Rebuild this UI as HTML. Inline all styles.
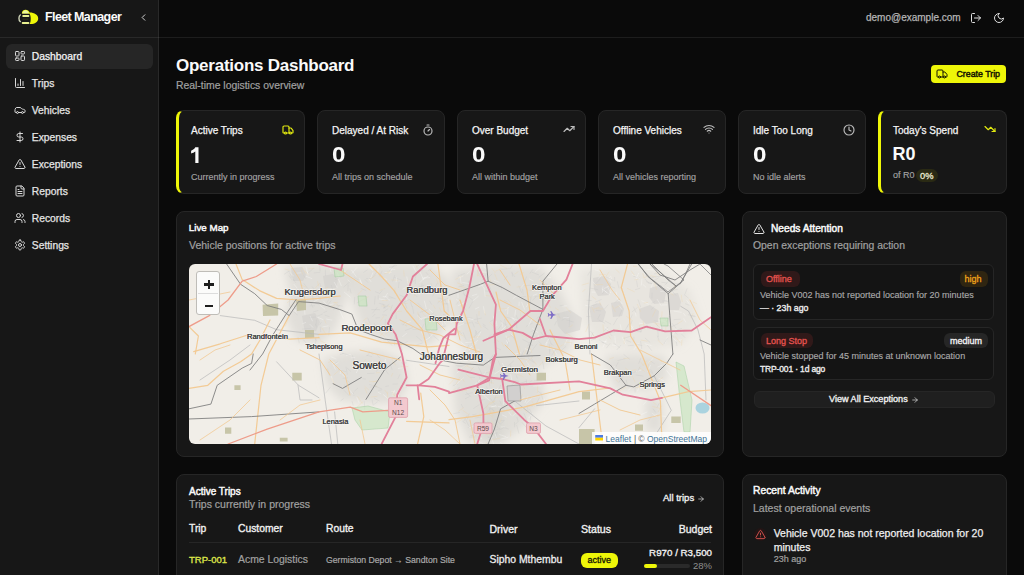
<!DOCTYPE html>
<html><head><meta charset="utf-8">
<style>
*{box-sizing:border-box;margin:0;padding:0}
html,body{width:1024px;height:575px;overflow:hidden;background:#0a0a0a;font-family:"Liberation Sans",sans-serif;color:#fafafa}
.a{position:absolute;white-space:nowrap;line-height:20px}
svg.i{position:absolute;fill:none;stroke:currentColor;stroke-width:2;stroke-linecap:round;stroke-linejoin:round}
#side{position:absolute;left:0;top:0;width:159px;height:575px;background:#171717;border-right:1px solid rgba(255,255,255,0.08)}
.hline{position:absolute;left:0;top:37px;width:1024px;height:1px;background:rgba(255,255,255,0.08)}
.nav{position:absolute;left:31.8px;font-size:10.3px;color:#e5e5e5;line-height:20px;-webkit-text-stroke:0.25px currentColor}
.navi{position:absolute;left:13.8px;width:12px;height:12px;color:#d9d9d9;stroke-width:2.5}
.card{position:absolute;background:#171717;border:1px solid #262626;border-radius:8px}
.ct{position:absolute;font-size:10px;color:#f5f5f5;line-height:20px;white-space:nowrap;-webkit-text-stroke:0.25px currentColor}
.cn{position:absolute;font-size:21px;font-weight:700;color:#fafafa;line-height:30px}
.cs{position:absolute;font-size:9px;color:#a3a3a3;line-height:20px;white-space:nowrap;-webkit-text-stroke:0.15px currentColor}
.ci{width:11px;height:11px;color:#bdbdbd}
.muted{color:#a1a1a1}
.m{-webkit-text-stroke:0.25px currentColor}
</style></head>
<body>
<!-- SIDEBAR -->
<div id="side"></div>
<div class="hline"></div>
<svg style="position:absolute;left:16px;top:8px" width="24" height="18" viewBox="16 8 24 18">
  <path d="M21.8 13.6 C22 10.8 23.6 9.8 25.6 9.8 C27.6 9.8 28.8 10.8 29.6 12.6 C34.5 12.6 38.2 15 38.2 18.4 C38.2 21.8 35 24 30.5 24 L29.6 24 C31.2 22 31.2 15 29.2 13.6 Z" fill="#eef608"/>
  <path d="M22.2 13.4 C22.8 11.2 24 10.3 25.6 10.3 C27.2 10.3 28.3 11.2 29 13.4 Z" fill="#eef8a0"/>
  <rect x="22.3" y="15" width="7" height="2" rx="0.7" fill="#e8f090"/>
  <rect x="21.8" y="21.9" width="7.5" height="2" rx="0.7" fill="#e8f090"/>
  <rect x="22.5" y="18.6" width="6" height="1" fill="#3a3a20"/>
  <path d="M20.3 15 C18.6 16.2 18.4 20.4 20.3 21.6" stroke="#cfd4b8" stroke-width="1.4" fill="none" stroke-linecap="round"/>
</svg>
<div class="a" style="left:45px;top:7px;font-size:12.5px;font-weight:700;letter-spacing:-0.6px;color:#fafafa">Fleet Manager</div>
<svg class="i" style="left:137.5px;top:11.5px;color:#e0e0e0" width="11" height="11" viewBox="0 0 24 24" stroke-width="3"><path d="m15 18-6-6 6-6"/></svg>

<div style="position:absolute;left:6px;top:44px;width:147px;height:25px;background:#262626;border-radius:6px"></div>
<svg class="i navi" style="top:50px" viewBox="0 0 24 24"><rect width="7" height="9" x="3" y="3" rx="1.5"/><rect width="7" height="5" x="14" y="3" rx="1.5"/><rect width="7" height="9" x="14" y="12" rx="1.5"/><rect width="7" height="5" x="3" y="16" rx="1.5"/></svg>
<div class="nav" style="top:47px;color:#f5f5f5">Dashboard</div>
<svg class="i navi" style="top:77px" viewBox="0 0 24 24"><path d="M3 3v16a2 2 0 0 0 2 2h16"/><path d="M18 17V9"/><path d="M13 17V5"/><path d="M8 17v-3"/></svg>
<div class="nav" style="top:74px">Trips</div>
<svg class="i navi" style="top:104px" viewBox="0 0 24 24"><path d="M19 17h2c.6 0 1-.4 1-1v-3c0-.9-.7-1.7-1.5-1.9C18.7 10.6 16 10 16 10s-1.3-1.4-2.2-2.3c-.5-.4-1.1-.7-1.8-.7H5c-.6 0-1.1.4-1.4.9l-1.4 2.9A3.7 3.7 0 0 0 2 12v4c0 .6.4 1 1 1h2"/><circle cx="7" cy="17" r="2"/><path d="M9 17h6"/><circle cx="17" cy="17" r="2"/></svg>
<div class="nav" style="top:101px">Vehicles</div>
<svg class="i navi" style="top:131px" viewBox="0 0 24 24"><line x1="12" x2="12" y1="2" y2="22"/><path d="M17 5H9.5a3.5 3.5 0 0 0 0 7h5a3.5 3.5 0 0 1 0 7H6"/></svg>
<div class="nav" style="top:128px">Expenses</div>
<svg class="i navi" style="top:158px" viewBox="0 0 24 24"><path d="m21.73 18-8-14a2 2 0 0 0-3.48 0l-8 14A2 2 0 0 0 4 21h16a2 2 0 0 0 1.73-3"/><path d="M12 9v4"/><path d="M12 17h.01"/></svg>
<div class="nav" style="top:155px">Exceptions</div>
<svg class="i navi" style="top:185px" viewBox="0 0 24 24"><path d="M15 2H6a2 2 0 0 0-2 2v16a2 2 0 0 0 2 2h12a2 2 0 0 0 2-2V7Z"/><path d="M14 2v4a2 2 0 0 0 2 2h4"/><path d="M10 9H8"/><path d="M16 13H8"/><path d="M16 17H8"/></svg>
<div class="nav" style="top:182px">Reports</div>
<svg class="i navi" style="top:212px" viewBox="0 0 24 24"><path d="M16 21v-2a4 4 0 0 0-4-4H6a4 4 0 0 0-4 4v2"/><circle cx="9" cy="7" r="4"/><path d="M22 21v-2a4 4 0 0 0-3-3.87"/><path d="M16 3.13a4 4 0 0 1 0 7.75"/></svg>
<div class="nav" style="top:209px">Records</div>
<svg class="i navi" style="top:239px" viewBox="0 0 24 24"><path d="M12.22 2h-.44a2 2 0 0 0-2 2v.18a2 2 0 0 1-1 1.730l-.43.25a2 2 0 0 1-2 0l-.15-.08a2 2 0 0 0-2.73.73l-.22.38a2 2 0 0 0 .73 2.73l.15.1a2 2 0 0 1 1 1.72v.51a2 2 0 0 1-1 1.74l-.15.09a2 2 0 0 0-.73 2.73l.22.38a2 2 0 0 0 2.730.73l.15-.08a2 2 0 0 1 2 0l.43.25a2 2 0 0 1 1 1.73V20a2 2 0 0 0 2 2h.44a2 2 0 0 0 2-2v-.18a2 2 0 0 1 1-1.73l.43-.25a2 2 0 0 1 2 0l.15.08a2 2 0 0 0 2.73-.73l.22-.39a2 2 0 0 0-.73-2.73l-.15-.08a2 2 0 0 1-1-1.74v-.5a2 2 0 0 1 1-1.74l.15-.09a2 2 0 0 0 .73-2.73l-.22-.38a2 2 0 0 0-2.73-.73l-.15.08a2 2 0 0 1-2 0l-.43-.25a2 2 0 0 1-1-1.73V4a2 2 0 0 0-2-2z"/><circle cx="12" cy="12" r="3"/></svg>
<div class="nav" style="top:236px">Settings</div>

<!-- HEADER RIGHT -->
<div class="a m" style="left:866px;top:8px;font-size:10px;color:#b5b5b5">demo@example.com</div>
<svg class="i" style="left:969.5px;top:11.5px;color:#e0e0e0" width="12" height="12" viewBox="0 0 24 24" stroke-width="2.9"><path d="M9 21H5a2 2 0 0 1-2-2V5a2 2 0 0 1 2-2h4"/><polyline points="16 17 21 12 16 7"/><line x1="21" x2="9" y1="12" y2="12"/></svg>
<svg class="i" style="left:992.5px;top:11.5px;color:#e0e0e0" width="12" height="12" viewBox="0 0 24 24" stroke-width="2.9"><path d="M12 3a6 6 0 0 0 9 9 9 9 0 1 1-9-9Z"/></svg>

<!-- TITLE -->
<div class="a" style="left:176px;top:56px;font-size:17px;font-weight:700;letter-spacing:-0.25px;color:#fafafa">Operations Dashboard</div>
<div class="a" style="left:176px;top:76px;font-size:10.4px;color:#a1a1a1;-webkit-text-stroke:0.2px #a1a1a1">Real-time logistics overview</div>
<div style="position:absolute;left:931px;top:65px;width:75px;height:18px;background:#eef608;border-radius:4px"></div>
<svg class="i" style="left:935.5px;top:67.5px;color:#141400" width="12" height="12" viewBox="0 0 24 24" stroke-width="2.7"><path d="M14 18V6a2 2 0 0 0-2-2H4a2 2 0 0 0-2 2v11a1 1 0 0 0 1 1h2"/><path d="M15 18H9"/><path d="M19 18h2a1 1 0 0 0 1-1v-3.65a1 1 0 0 0-.22-.624l-3.48-4.35A1 1 0 0 0 17.520 8H14"/><circle cx="17" cy="18" r="2"/><circle cx="7" cy="18" r="2"/></svg>
<div class="a" style="left:956.5px;top:64px;font-size:8.8px;color:#141400;-webkit-text-stroke:0.45px #141400">Create Trip</div>

<!-- STAT CARDS -->
<div class="card" style="left:176px;top:110px;width:129px;height:84px;border-left:3px solid #eef608;"></div>
<div class="ct" style="left:191px;top:120.9px">Active Trips</div>
<svg class="i ci" style="left:281.5px;top:123.5px;width:12px;height:12px;color:#e2ea10;stroke-width:2.3" viewBox="0 0 24 24"><path d="M14 18V6a2 2 0 0 0-2-2H4a2 2 0 0 0-2 2v11a1 1 0 0 0 1 1h2"/><path d="M15 18H9"/><path d="M19 18h2a1 1 0 0 0 1-1v-3.65a1 1 0 0 0-.22-.624l-3.48-4.35A1 1 0 0 0 17.52 8H14"/><circle cx="17" cy="18" r="2"/><circle cx="7" cy="18" r="2"/></svg>
<svg style="position:absolute;left:189px;top:145px" width="12" height="20" viewBox="189 145 12 20"><path d="M195.3 147.3 h3.2 v15.6 h-3.2 v-11.3 c-1.1 0.9 -2.4 1.5 -4.2 1.9 v-2.8 c1.9 -0.6 3.3 -1.7 4.2 -3.4 z" fill="#fafafa"/></svg>
<div class="cs" style="left:191px;top:166.7px">Currently in progress</div>
<div class="card" style="left:317px;top:110px;width:128px;height:84px;"></div>
<div class="ct" style="left:332px;top:120.9px">Delayed / At Risk</div>
<svg class="i ci" style="left:421.5px;top:123.5px;width:12px;height:12px;color:#bdbdbd;stroke-width:2.3" viewBox="0 0 24 24"><line x1="10" x2="14" y1="2" y2="2"/><line x1="12" x2="15" y1="14" y2="11"/><circle cx="12" cy="14" r="8"/></svg>
<div class="cn" style="left:331.7px;top:140.3px;font-size:22px;transform:scaleX(1.1);transform-origin:0 0">0</div>
<div class="cs" style="left:332px;top:166.7px">All trips on schedule</div>
<div class="card" style="left:457px;top:110px;width:129px;height:84px;"></div>
<div class="ct" style="left:472px;top:120.9px">Over Budget</div>
<svg class="i ci" style="left:562.5px;top:122.5px;width:12px;height:12px;color:#bdbdbd;stroke-width:2.3" viewBox="0 0 24 24"><polyline points="22 7 13.5 15.5 8.5 10.5 2 17"/><polyline points="16 7 22 7 22 13"/></svg>
<div class="cn" style="left:471.7px;top:140.3px;font-size:22px;transform:scaleX(1.1);transform-origin:0 0">0</div>
<div class="cs" style="left:472px;top:166.7px">All within budget</div>
<div class="card" style="left:598px;top:110px;width:128px;height:84px;"></div>
<div class="ct" style="left:613px;top:120.9px">Offline Vehicles</div>
<svg class="i ci" style="left:702.5px;top:122.5px;width:12px;height:12px;color:#bdbdbd;stroke-width:2.3" viewBox="0 0 24 24"><path d="M12 20h.01"/><path d="M2 8.82a15 15 0 0 1 20 0"/><path d="M5 12.859a10 10 0 0 1 14 0"/><path d="M8.5 16.429a5 5 0 0 1 7 0"/></svg>
<div class="cn" style="left:612.7px;top:140.3px;font-size:22px;transform:scaleX(1.1);transform-origin:0 0">0</div>
<div class="cs" style="left:613px;top:166.7px">All vehicles reporting</div>
<div class="card" style="left:738px;top:110px;width:128px;height:84px;"></div>
<div class="ct" style="left:753px;top:120.9px">Idle Too Long</div>
<svg class="i ci" style="left:842.5px;top:123.5px;width:12px;height:12px;color:#bdbdbd;stroke-width:2.3" viewBox="0 0 24 24"><circle cx="12" cy="12" r="10"/><polyline points="12 6 12 12 16 14"/></svg>
<div class="cn" style="left:752.7px;top:140.3px;font-size:22px;transform:scaleX(1.1);transform-origin:0 0">0</div>
<div class="cs" style="left:753px;top:166.7px">No idle alerts</div>
<div class="card" style="left:878px;top:110px;width:129px;height:84px;border-left:3px solid #eef608;"></div>
<div class="ct" style="left:893px;top:120.9px">Today&#39;s Spend</div>
<svg class="i ci" style="left:983.5px;top:123.0px;width:12px;height:12px;color:#e2ea10;stroke-width:2.3" viewBox="0 0 24 24"><polyline points="22 17 13.5 8.5 8.5 13.5 2 7"/><polyline points="16 17 22 17 22 11"/></svg>
<div class="cn" style="left:892.5px;top:138.6px;font-size:18px">R0</div>
<div class="cs" style="left:893px;top:164.7px">of R0</div>
<div style="position:absolute;left:916px;top:169px;width:22px;height:13px;border-radius:7px;background:#2a2a14"></div>
<div class="cs" style="left:920px;top:165.5px;color:#ecebd0;-webkit-text-stroke:0.3px #ecebd0;font-size:9.3px">0%</div>
<!-- MAIN CARDS -->
<div class="card" style="left:176px;top:211px;width:548px;height:246px"></div>
<div class="a" style="left:188.8px;top:218px;font-size:9.8px;color:#fafafa;-webkit-text-stroke:0.45px #fafafa">Live Map</div>
<div class="a" style="left:189px;top:234.5px;font-size:10.5px;color:#a1a1a1;-webkit-text-stroke:0.2px #a1a1a1">Vehicle positions for active trips</div>
<div style="position:absolute;left:189px;top:264px;width:522px;height:180px;border-radius:6px;overflow:hidden"><svg width="522" height="180" viewBox="189 264 522 180" style="position:absolute;left:0;top:0;font-family:'Liberation Sans',sans-serif"><rect x="189" y="264" width="522" height="180" fill="#f1eee8"/><defs><filter id="bl" x="-20%" y="-20%" width="140%" height="140%"><feGaussianBlur stdDeviation="4"/></filter></defs><g filter="url(#bl)"><polygon points="284.0,266.0 300.0,264.0 345.0,264.0 352.0,285.0 344.0,305.0 335.0,330.0 318.0,345.0 296.0,340.0 286.0,318.0 290.0,295.0" fill="#d6d3cf" opacity="0.6"/><polygon points="322.0,360.0 345.0,352.0 380.0,350.0 404.0,360.0 408.0,385.0 398.0,402.0 370.0,404.0 340.0,400.0 326.0,385.0" fill="#d6d3cf" opacity="0.6"/><polygon points="345.0,268.0 380.0,264.0 430.0,264.0 449.0,280.0 452.0,320.0 430.0,345.0 395.0,345.0 362.0,330.0 352.0,300.0" fill="#d6d3cf" opacity="0.6"/><polygon points="452.0,270.0 500.0,264.0 540.0,266.0 560.0,290.0 575.0,320.0 570.0,350.0 540.0,368.0 500.0,372.0 470.0,360.0 455.0,330.0" fill="#d6d3cf" opacity="0.6"/><polygon points="580.0,270.0 620.0,264.0 660.0,270.0 690.0,290.0 700.0,320.0 680.0,345.0 640.0,350.0 600.0,345.0 583.0,320.0" fill="#d6d3cf" opacity="0.35"/><polygon points="452.0,360.0 500.0,368.0 540.0,372.0 545.0,400.0 520.0,430.0 500.0,444.0 470.0,444.0 455.0,410.0" fill="#d6d3cf" opacity="0.6"/><polygon points="604.0,356.0 630.0,354.0 665.0,356.0 668.0,378.0 650.0,390.0 615.0,390.0" fill="#d6d3cf" opacity="0.6"/><polygon points="645.0,398.0 662.0,398.0 663.0,432.0 646.0,432.0" fill="#d6d3cf" opacity="0.6"/><polygon points="484.0,400.0 503.0,400.0 503.0,444.0 484.0,444.0" fill="#d6d3cf" opacity="0.6"/></g><polygon points="593.0,278.0 604.0,276.0 611.0,284.0 609.0,295.0 598.0,296.0 594.0,289.0" fill="#cfcdcc" opacity="0.5"/><polygon points="650.0,288.0 661.0,285.0 666.0,293.0 664.0,303.0 654.0,304.0 649.0,297.0" fill="#cfcdcc" opacity="0.5"/><polygon points="639.0,309.0 650.0,305.0 659.0,311.0 658.0,322.0 646.0,324.0 640.0,318.0" fill="#cfcdcc" opacity="0.5"/><polygon points="611.0,303.0 620.0,301.0 624.0,309.0 622.0,316.0 613.0,317.0" fill="#cfcdcc" opacity="0.5"/><polygon points="589.0,306.0 600.0,303.0 606.0,312.0 603.0,322.0 592.0,322.0" fill="#cfcdcc" opacity="0.5"/><polygon points="669.0,294.0 678.0,293.0 681.0,302.0 679.0,310.0 670.0,310.0" fill="#cfcdcc" opacity="0.5"/><polygon points="323.0,276.0 333.0,274.0 338.0,280.0 336.0,288.0 325.0,288.0" fill="#cfcdcc" opacity="0.5"/><polygon points="291.0,268.0 302.0,267.0 306.0,275.0 303.0,281.0 293.0,281.0" fill="#cfcdcc" opacity="0.5"/><polygon points="302.0,316.0 315.0,313.0 320.0,322.0 316.0,331.0 305.0,332.0" fill="#cfcdcc" opacity="0.5"/><polygon points="556.0,314.0 570.0,310.0 582.0,318.0 580.0,330.0 565.0,334.0 558.0,326.0" fill="#cfcdcc" opacity="0.5"/><polyline points="306.0,276.2 311.8,278.6" stroke="#ffffff" stroke-width="0.5" fill="none" stroke-linecap="round" stroke-linejoin="round" opacity="0.55"/><polyline points="308.9,268.7 314.4,268.4" stroke="#f0d2a0" stroke-width="0.5" fill="none" stroke-linecap="round" stroke-linejoin="round" opacity="0.55"/><polyline points="288.8,271.3 284.4,274.1" stroke="#c4c4c4" stroke-width="0.5" fill="none" stroke-linecap="round" stroke-linejoin="round" opacity="0.55"/><polyline points="326.9,311.2 323.8,312.5" stroke="#c4c4c4" stroke-width="0.5" fill="none" stroke-linecap="round" stroke-linejoin="round" opacity="0.55"/><polyline points="303.7,275.7 305.8,278.6" stroke="#c4c4c4" stroke-width="0.5" fill="none" stroke-linecap="round" stroke-linejoin="round" opacity="0.55"/><polyline points="291.0,310.3 294.8,311.2" stroke="#ffffff" stroke-width="0.5" fill="none" stroke-linecap="round" stroke-linejoin="round" opacity="0.55"/><polyline points="322.4,314.1 317.3,316.2" stroke="#c4c4c4" stroke-width="0.5" fill="none" stroke-linecap="round" stroke-linejoin="round" opacity="0.55"/><polyline points="315.7,338.8 315.6,343.6" stroke="#c4c4c4" stroke-width="0.5" fill="none" stroke-linecap="round" stroke-linejoin="round" opacity="0.55"/><polyline points="289.6,288.3 292.3,293.0" stroke="#c4c4c4" stroke-width="0.5" fill="none" stroke-linecap="round" stroke-linejoin="round" opacity="0.55"/><polyline points="325.4,269.9 325.5,275.5" stroke="#c4c4c4" stroke-width="0.5" fill="none" stroke-linecap="round" stroke-linejoin="round" opacity="0.55"/><polyline points="321.9,327.9 325.7,333.9" stroke="#f0d2a0" stroke-width="0.5" fill="none" stroke-linecap="round" stroke-linejoin="round" opacity="0.55"/><polyline points="323.4,301.0 328.0,306.5" stroke="#ffffff" stroke-width="0.5" fill="none" stroke-linecap="round" stroke-linejoin="round" opacity="0.55"/><polyline points="288.1,320.8 285.1,326.3" stroke="#f0d2a0" stroke-width="0.5" fill="none" stroke-linecap="round" stroke-linejoin="round" opacity="0.55"/><polyline points="344.3,292.1 350.2,297.1" stroke="#ffffff" stroke-width="0.5" fill="none" stroke-linecap="round" stroke-linejoin="round" opacity="0.55"/><polyline points="317.6,281.7 318.6,286.0" stroke="#f0d2a0" stroke-width="0.5" fill="none" stroke-linecap="round" stroke-linejoin="round" opacity="0.55"/><polyline points="289.5,300.4 289.4,306.1" stroke="#c4c4c4" stroke-width="0.5" fill="none" stroke-linecap="round" stroke-linejoin="round" opacity="0.55"/><polyline points="330.4,294.8 334.6,294.8" stroke="#c4c4c4" stroke-width="0.5" fill="none" stroke-linecap="round" stroke-linejoin="round" opacity="0.55"/><polyline points="328.8,265.0 331.0,271.8" stroke="#ffffff" stroke-width="0.5" fill="none" stroke-linecap="round" stroke-linejoin="round" opacity="0.55"/><polyline points="293.9,307.3 296.3,312.9" stroke="#ffffff" stroke-width="0.5" fill="none" stroke-linecap="round" stroke-linejoin="round" opacity="0.55"/><polyline points="315.1,334.5 307.9,337.6" stroke="#f0d2a0" stroke-width="0.5" fill="none" stroke-linecap="round" stroke-linejoin="round" opacity="0.55"/><polyline points="310.8,303.0 312.9,307.5" stroke="#c4c4c4" stroke-width="0.5" fill="none" stroke-linecap="round" stroke-linejoin="round" opacity="0.55"/><polyline points="314.0,272.9 319.9,272.3" stroke="#c4c4c4" stroke-width="0.5" fill="none" stroke-linecap="round" stroke-linejoin="round" opacity="0.55"/><polyline points="320.5,340.9 326.0,343.4" stroke="#f0d2a0" stroke-width="0.5" fill="none" stroke-linecap="round" stroke-linejoin="round" opacity="0.55"/><polyline points="294.1,284.4 297.1,288.1" stroke="#ffffff" stroke-width="0.5" fill="none" stroke-linecap="round" stroke-linejoin="round" opacity="0.55"/><polyline points="315.7,303.2 318.9,304.4" stroke="#c4c4c4" stroke-width="0.5" fill="none" stroke-linecap="round" stroke-linejoin="round" opacity="0.55"/><polyline points="316.5,320.1 316.0,325.6" stroke="#c4c4c4" stroke-width="0.5" fill="none" stroke-linecap="round" stroke-linejoin="round" opacity="0.55"/><polyline points="294.0,308.0 291.2,309.4" stroke="#ffffff" stroke-width="0.5" fill="none" stroke-linecap="round" stroke-linejoin="round" opacity="0.55"/><polyline points="331.3,285.2 332.6,289.8" stroke="#c4c4c4" stroke-width="0.5" fill="none" stroke-linecap="round" stroke-linejoin="round" opacity="0.55"/><polyline points="320.2,327.1 320.7,331.7" stroke="#c4c4c4" stroke-width="0.5" fill="none" stroke-linecap="round" stroke-linejoin="round" opacity="0.55"/><polyline points="334.3,282.4 337.1,287.2" stroke="#ffffff" stroke-width="0.5" fill="none" stroke-linecap="round" stroke-linejoin="round" opacity="0.55"/><polyline points="337.7,302.3 333.8,302.5" stroke="#f0d2a0" stroke-width="0.5" fill="none" stroke-linecap="round" stroke-linejoin="round" opacity="0.55"/><polyline points="289.5,272.3 293.5,275.8" stroke="#ffffff" stroke-width="0.5" fill="none" stroke-linecap="round" stroke-linejoin="round" opacity="0.55"/><polyline points="316.6,316.9 323.0,319.6" stroke="#ffffff" stroke-width="0.5" fill="none" stroke-linecap="round" stroke-linejoin="round" opacity="0.55"/><polyline points="335.0,302.7 338.1,305.1" stroke="#f0d2a0" stroke-width="0.5" fill="none" stroke-linecap="round" stroke-linejoin="round" opacity="0.55"/><polyline points="315.5,324.2 316.7,327.4" stroke="#c4c4c4" stroke-width="0.5" fill="none" stroke-linecap="round" stroke-linejoin="round" opacity="0.55"/><polyline points="315.6,317.1 309.6,317.4" stroke="#c4c4c4" stroke-width="0.5" fill="none" stroke-linecap="round" stroke-linejoin="round" opacity="0.55"/><polyline points="294.6,308.4 297.6,309.1" stroke="#c4c4c4" stroke-width="0.5" fill="none" stroke-linecap="round" stroke-linejoin="round" opacity="0.55"/><polyline points="313.5,334.6 316.6,341.0" stroke="#c4c4c4" stroke-width="0.5" fill="none" stroke-linecap="round" stroke-linejoin="round" opacity="0.55"/><polyline points="303.9,283.5 307.5,288.2" stroke="#c4c4c4" stroke-width="0.5" fill="none" stroke-linecap="round" stroke-linejoin="round" opacity="0.55"/><polyline points="339.4,305.9 333.4,309.7" stroke="#c4c4c4" stroke-width="0.5" fill="none" stroke-linecap="round" stroke-linejoin="round" opacity="0.55"/><polyline points="319.6,265.5 320.1,270.7" stroke="#c4c4c4" stroke-width="0.5" fill="none" stroke-linecap="round" stroke-linejoin="round" opacity="0.55"/><polyline points="295.7,302.4 290.3,306.1" stroke="#f0d2a0" stroke-width="0.5" fill="none" stroke-linecap="round" stroke-linejoin="round" opacity="0.55"/><polyline points="337.3,272.6 339.4,278.0" stroke="#ffffff" stroke-width="0.5" fill="none" stroke-linecap="round" stroke-linejoin="round" opacity="0.55"/><polyline points="336.5,305.1 342.2,306.1" stroke="#c4c4c4" stroke-width="0.5" fill="none" stroke-linecap="round" stroke-linejoin="round" opacity="0.55"/><polyline points="331.1,300.6 327.7,305.2" stroke="#c4c4c4" stroke-width="0.5" fill="none" stroke-linecap="round" stroke-linejoin="round" opacity="0.55"/><polyline points="348.1,285.0 347.9,290.8" stroke="#c4c4c4" stroke-width="0.5" fill="none" stroke-linecap="round" stroke-linejoin="round" opacity="0.55"/><polyline points="312.3,295.8 313.3,300.3" stroke="#c4c4c4" stroke-width="0.5" fill="none" stroke-linecap="round" stroke-linejoin="round" opacity="0.55"/><polyline points="329.5,327.5 328.8,335.0" stroke="#c4c4c4" stroke-width="0.5" fill="none" stroke-linecap="round" stroke-linejoin="round" opacity="0.55"/><polyline points="349.8,281.8 343.9,286.9" stroke="#c4c4c4" stroke-width="0.5" fill="none" stroke-linecap="round" stroke-linejoin="round" opacity="0.55"/><polyline points="295.0,299.0 298.6,303.2" stroke="#c4c4c4" stroke-width="0.5" fill="none" stroke-linecap="round" stroke-linejoin="round" opacity="0.55"/><polyline points="305.7,322.5 302.8,323.6" stroke="#ffffff" stroke-width="0.5" fill="none" stroke-linecap="round" stroke-linejoin="round" opacity="0.55"/><polyline points="310.1,305.9 314.6,305.8" stroke="#c4c4c4" stroke-width="0.5" fill="none" stroke-linecap="round" stroke-linejoin="round" opacity="0.55"/><polyline points="302.1,267.2 305.5,273.2" stroke="#f0d2a0" stroke-width="0.5" fill="none" stroke-linecap="round" stroke-linejoin="round" opacity="0.55"/><polyline points="320.5,305.7 324.8,309.0" stroke="#ffffff" stroke-width="0.5" fill="none" stroke-linecap="round" stroke-linejoin="round" opacity="0.55"/><polyline points="338.4,278.9 341.3,285.7" stroke="#ffffff" stroke-width="0.5" fill="none" stroke-linecap="round" stroke-linejoin="round" opacity="0.55"/><polyline points="338.5,270.8 345.8,271.2" stroke="#ffffff" stroke-width="0.5" fill="none" stroke-linecap="round" stroke-linejoin="round" opacity="0.55"/><polyline points="314.9,291.5 318.1,296.2" stroke="#ffffff" stroke-width="0.5" fill="none" stroke-linecap="round" stroke-linejoin="round" opacity="0.55"/><polyline points="319.8,283.3 320.9,286.7" stroke="#c4c4c4" stroke-width="0.5" fill="none" stroke-linecap="round" stroke-linejoin="round" opacity="0.55"/><polyline points="297.7,289.3 299.0,293.6" stroke="#c4c4c4" stroke-width="0.5" fill="none" stroke-linecap="round" stroke-linejoin="round" opacity="0.55"/><polyline points="302.4,329.1 310.3,328.4" stroke="#c4c4c4" stroke-width="0.5" fill="none" stroke-linecap="round" stroke-linejoin="round" opacity="0.55"/><polyline points="319.0,283.9 315.5,287.8" stroke="#f0d2a0" stroke-width="0.5" fill="none" stroke-linecap="round" stroke-linejoin="round" opacity="0.55"/><polyline points="350.0,288.9 351.0,292.9" stroke="#c4c4c4" stroke-width="0.5" fill="none" stroke-linecap="round" stroke-linejoin="round" opacity="0.55"/><polyline points="311.5,292.2 313.0,295.1" stroke="#c4c4c4" stroke-width="0.5" fill="none" stroke-linecap="round" stroke-linejoin="round" opacity="0.55"/><polyline points="313.3,268.5 308.5,272.7" stroke="#c4c4c4" stroke-width="0.5" fill="none" stroke-linecap="round" stroke-linejoin="round" opacity="0.55"/><polyline points="324.7,320.1 325.9,323.1" stroke="#f0d2a0" stroke-width="0.5" fill="none" stroke-linecap="round" stroke-linejoin="round" opacity="0.55"/><polyline points="306.0,266.8 307.9,274.0" stroke="#ffffff" stroke-width="0.5" fill="none" stroke-linecap="round" stroke-linejoin="round" opacity="0.55"/><polyline points="306.8,270.8 308.2,275.0" stroke="#ffffff" stroke-width="0.5" fill="none" stroke-linecap="round" stroke-linejoin="round" opacity="0.55"/><polyline points="293.8,311.5 297.3,315.0" stroke="#c4c4c4" stroke-width="0.5" fill="none" stroke-linecap="round" stroke-linejoin="round" opacity="0.55"/><polyline points="342.0,276.6 335.2,279.5" stroke="#c4c4c4" stroke-width="0.5" fill="none" stroke-linecap="round" stroke-linejoin="round" opacity="0.55"/><polyline points="333.0,304.0 328.7,305.1" stroke="#ffffff" stroke-width="0.5" fill="none" stroke-linecap="round" stroke-linejoin="round" opacity="0.55"/><polyline points="318.9,298.8 313.4,302.2" stroke="#ffffff" stroke-width="0.5" fill="none" stroke-linecap="round" stroke-linejoin="round" opacity="0.55"/><polyline points="340.2,311.3 343.2,318.1" stroke="#ffffff" stroke-width="0.5" fill="none" stroke-linecap="round" stroke-linejoin="round" opacity="0.55"/><polyline points="293.1,293.2 290.9,296.0" stroke="#ffffff" stroke-width="0.5" fill="none" stroke-linecap="round" stroke-linejoin="round" opacity="0.55"/><polyline points="326.6,319.1 331.9,320.1" stroke="#ffffff" stroke-width="0.5" fill="none" stroke-linecap="round" stroke-linejoin="round" opacity="0.55"/><polyline points="334.9,304.7 330.2,308.0" stroke="#f0d2a0" stroke-width="0.5" fill="none" stroke-linecap="round" stroke-linejoin="round" opacity="0.55"/><polyline points="301.1,270.0 302.6,274.1" stroke="#f0d2a0" stroke-width="0.5" fill="none" stroke-linecap="round" stroke-linejoin="round" opacity="0.55"/><polyline points="317.6,295.0 320.2,299.7" stroke="#c4c4c4" stroke-width="0.5" fill="none" stroke-linecap="round" stroke-linejoin="round" opacity="0.55"/><polyline points="289.3,275.9 291.7,279.5" stroke="#c4c4c4" stroke-width="0.5" fill="none" stroke-linecap="round" stroke-linejoin="round" opacity="0.55"/><polyline points="284.8,268.9 289.0,270.3" stroke="#f0d2a0" stroke-width="0.5" fill="none" stroke-linecap="round" stroke-linejoin="round" opacity="0.55"/><polyline points="303.8,305.8 300.0,309.6" stroke="#c4c4c4" stroke-width="0.5" fill="none" stroke-linecap="round" stroke-linejoin="round" opacity="0.55"/><polyline points="305.2,271.0 308.6,275.1" stroke="#f0d2a0" stroke-width="0.5" fill="none" stroke-linecap="round" stroke-linejoin="round" opacity="0.55"/><polyline points="289.1,271.3 291.7,277.5" stroke="#c4c4c4" stroke-width="0.5" fill="none" stroke-linecap="round" stroke-linejoin="round" opacity="0.55"/><polyline points="325.0,315.2 329.2,316.6" stroke="#c4c4c4" stroke-width="0.5" fill="none" stroke-linecap="round" stroke-linejoin="round" opacity="0.55"/><polyline points="317.9,335.0 320.1,339.4" stroke="#f0d2a0" stroke-width="0.5" fill="none" stroke-linecap="round" stroke-linejoin="round" opacity="0.55"/><polyline points="330.3,296.8 327.0,302.5" stroke="#c4c4c4" stroke-width="0.5" fill="none" stroke-linecap="round" stroke-linejoin="round" opacity="0.55"/><polyline points="292.2,290.8 294.3,295.0" stroke="#ffffff" stroke-width="0.5" fill="none" stroke-linecap="round" stroke-linejoin="round" opacity="0.55"/><polyline points="347.9,279.9 350.1,281.9" stroke="#ffffff" stroke-width="0.5" fill="none" stroke-linecap="round" stroke-linejoin="round" opacity="0.55"/><polyline points="324.1,293.2 326.3,297.8" stroke="#c4c4c4" stroke-width="0.5" fill="none" stroke-linecap="round" stroke-linejoin="round" opacity="0.55"/><polyline points="303.4,339.8 306.2,343.0" stroke="#c4c4c4" stroke-width="0.5" fill="none" stroke-linecap="round" stroke-linejoin="round" opacity="0.55"/><polyline points="296.9,294.2 304.1,297.2" stroke="#f0d2a0" stroke-width="0.5" fill="none" stroke-linecap="round" stroke-linejoin="round" opacity="0.55"/><polyline points="321.3,322.3 319.5,325.0" stroke="#c4c4c4" stroke-width="0.5" fill="none" stroke-linecap="round" stroke-linejoin="round" opacity="0.55"/><polyline points="327.8,287.2 325.1,288.9" stroke="#f0d2a0" stroke-width="0.5" fill="none" stroke-linecap="round" stroke-linejoin="round" opacity="0.55"/><polyline points="312.2,286.8 315.1,290.0" stroke="#c4c4c4" stroke-width="0.5" fill="none" stroke-linecap="round" stroke-linejoin="round" opacity="0.55"/><polyline points="304.5,309.1 304.9,314.1" stroke="#ffffff" stroke-width="0.5" fill="none" stroke-linecap="round" stroke-linejoin="round" opacity="0.55"/><polyline points="298.1,337.4 299.2,342.8" stroke="#c4c4c4" stroke-width="0.5" fill="none" stroke-linecap="round" stroke-linejoin="round" opacity="0.55"/><polyline points="293.5,279.6 295.5,282.4" stroke="#c4c4c4" stroke-width="0.5" fill="none" stroke-linecap="round" stroke-linejoin="round" opacity="0.55"/><polyline points="300.3,284.9 305.8,286.9" stroke="#f0d2a0" stroke-width="0.5" fill="none" stroke-linecap="round" stroke-linejoin="round" opacity="0.55"/><polyline points="310.0,324.4 312.8,327.3" stroke="#ffffff" stroke-width="0.5" fill="none" stroke-linecap="round" stroke-linejoin="round" opacity="0.55"/><polyline points="317.9,310.5 313.3,312.0" stroke="#c4c4c4" stroke-width="0.5" fill="none" stroke-linecap="round" stroke-linejoin="round" opacity="0.55"/><polyline points="310.2,316.3 312.4,320.9" stroke="#ffffff" stroke-width="0.5" fill="none" stroke-linecap="round" stroke-linejoin="round" opacity="0.55"/><polyline points="292.7,298.4 287.3,302.6" stroke="#f0d2a0" stroke-width="0.5" fill="none" stroke-linecap="round" stroke-linejoin="round" opacity="0.55"/><polyline points="300.9,272.8 297.1,273.1" stroke="#ffffff" stroke-width="0.5" fill="none" stroke-linecap="round" stroke-linejoin="round" opacity="0.55"/><polyline points="328.0,325.9 322.8,326.9" stroke="#ffffff" stroke-width="0.5" fill="none" stroke-linecap="round" stroke-linejoin="round" opacity="0.55"/><polyline points="389.3,362.6 392.2,369.6" stroke="#c4c4c4" stroke-width="0.5" fill="none" stroke-linecap="round" stroke-linejoin="round" opacity="0.55"/><polyline points="367.4,373.6 374.2,373.2" stroke="#c4c4c4" stroke-width="0.5" fill="none" stroke-linecap="round" stroke-linejoin="round" opacity="0.55"/><polyline points="355.4,362.1 361.2,363.4" stroke="#f0d2a0" stroke-width="0.5" fill="none" stroke-linecap="round" stroke-linejoin="round" opacity="0.55"/><polyline points="346.0,367.1 347.3,374.2" stroke="#c4c4c4" stroke-width="0.5" fill="none" stroke-linecap="round" stroke-linejoin="round" opacity="0.55"/><polyline points="369.0,351.6 373.1,354.6" stroke="#c4c4c4" stroke-width="0.5" fill="none" stroke-linecap="round" stroke-linejoin="round" opacity="0.55"/><polyline points="364.9,386.4 368.6,389.8" stroke="#f0d2a0" stroke-width="0.5" fill="none" stroke-linecap="round" stroke-linejoin="round" opacity="0.55"/><polyline points="401.6,362.2 403.2,365.0" stroke="#c4c4c4" stroke-width="0.5" fill="none" stroke-linecap="round" stroke-linejoin="round" opacity="0.55"/><polyline points="380.7,360.7 374.9,364.6" stroke="#f0d2a0" stroke-width="0.5" fill="none" stroke-linecap="round" stroke-linejoin="round" opacity="0.55"/><polyline points="392.5,362.5 395.8,365.0" stroke="#f0d2a0" stroke-width="0.5" fill="none" stroke-linecap="round" stroke-linejoin="round" opacity="0.55"/><polyline points="374.5,398.4 379.3,400.9" stroke="#c4c4c4" stroke-width="0.5" fill="none" stroke-linecap="round" stroke-linejoin="round" opacity="0.55"/><polyline points="357.7,388.3 354.7,390.9" stroke="#c4c4c4" stroke-width="0.5" fill="none" stroke-linecap="round" stroke-linejoin="round" opacity="0.55"/><polyline points="402.1,367.8 398.3,368.5" stroke="#ffffff" stroke-width="0.5" fill="none" stroke-linecap="round" stroke-linejoin="round" opacity="0.55"/><polyline points="348.8,389.2 353.5,394.6" stroke="#ffffff" stroke-width="0.5" fill="none" stroke-linecap="round" stroke-linejoin="round" opacity="0.55"/><polyline points="352.2,401.6 353.1,405.1" stroke="#c4c4c4" stroke-width="0.5" fill="none" stroke-linecap="round" stroke-linejoin="round" opacity="0.55"/><polyline points="392.7,373.4 391.3,376.3" stroke="#f0d2a0" stroke-width="0.5" fill="none" stroke-linecap="round" stroke-linejoin="round" opacity="0.55"/><polyline points="338.6,369.7 345.8,371.7" stroke="#c4c4c4" stroke-width="0.5" fill="none" stroke-linecap="round" stroke-linejoin="round" opacity="0.55"/><polyline points="391.8,391.4 395.0,392.0" stroke="#ffffff" stroke-width="0.5" fill="none" stroke-linecap="round" stroke-linejoin="round" opacity="0.55"/><polyline points="344.1,390.4 349.2,395.8" stroke="#c4c4c4" stroke-width="0.5" fill="none" stroke-linecap="round" stroke-linejoin="round" opacity="0.55"/><polyline points="404.4,383.3 406.1,387.3" stroke="#c4c4c4" stroke-width="0.5" fill="none" stroke-linecap="round" stroke-linejoin="round" opacity="0.55"/><polyline points="400.8,384.2 407.9,387.2" stroke="#ffffff" stroke-width="0.5" fill="none" stroke-linecap="round" stroke-linejoin="round" opacity="0.55"/><polyline points="362.9,401.7 357.3,407.1" stroke="#f0d2a0" stroke-width="0.5" fill="none" stroke-linecap="round" stroke-linejoin="round" opacity="0.55"/><polyline points="392.1,357.2 397.2,359.2" stroke="#c4c4c4" stroke-width="0.5" fill="none" stroke-linecap="round" stroke-linejoin="round" opacity="0.55"/><polyline points="392.8,391.7 395.4,397.2" stroke="#f0d2a0" stroke-width="0.5" fill="none" stroke-linecap="round" stroke-linejoin="round" opacity="0.55"/><polyline points="353.1,392.2 353.9,395.5" stroke="#c4c4c4" stroke-width="0.5" fill="none" stroke-linecap="round" stroke-linejoin="round" opacity="0.55"/><polyline points="343.3,353.5 340.3,354.5" stroke="#c4c4c4" stroke-width="0.5" fill="none" stroke-linecap="round" stroke-linejoin="round" opacity="0.55"/><polyline points="364.9,388.3 366.9,393.2" stroke="#f0d2a0" stroke-width="0.5" fill="none" stroke-linecap="round" stroke-linejoin="round" opacity="0.55"/><polyline points="375.3,386.4 381.6,388.8" stroke="#c4c4c4" stroke-width="0.5" fill="none" stroke-linecap="round" stroke-linejoin="round" opacity="0.55"/><polyline points="347.3,380.6 350.9,383.8" stroke="#c4c4c4" stroke-width="0.5" fill="none" stroke-linecap="round" stroke-linejoin="round" opacity="0.55"/><polyline points="338.0,362.7 334.2,364.9" stroke="#ffffff" stroke-width="0.5" fill="none" stroke-linecap="round" stroke-linejoin="round" opacity="0.55"/><polyline points="365.6,362.5 360.0,366.7" stroke="#ffffff" stroke-width="0.5" fill="none" stroke-linecap="round" stroke-linejoin="round" opacity="0.55"/><polyline points="341.9,374.2 345.5,377.5" stroke="#ffffff" stroke-width="0.5" fill="none" stroke-linecap="round" stroke-linejoin="round" opacity="0.55"/><polyline points="372.2,400.2 373.1,405.0" stroke="#c4c4c4" stroke-width="0.5" fill="none" stroke-linecap="round" stroke-linejoin="round" opacity="0.55"/><polyline points="388.6,385.9 385.7,386.5" stroke="#c4c4c4" stroke-width="0.5" fill="none" stroke-linecap="round" stroke-linejoin="round" opacity="0.55"/><polyline points="340.7,369.9 340.2,373.6" stroke="#ffffff" stroke-width="0.5" fill="none" stroke-linecap="round" stroke-linejoin="round" opacity="0.55"/><polyline points="373.6,385.2 377.3,386.7" stroke="#f0d2a0" stroke-width="0.5" fill="none" stroke-linecap="round" stroke-linejoin="round" opacity="0.55"/><polyline points="380.3,360.0 382.3,364.1" stroke="#f0d2a0" stroke-width="0.5" fill="none" stroke-linecap="round" stroke-linejoin="round" opacity="0.55"/><polyline points="369.1,353.4 366.8,356.0" stroke="#c4c4c4" stroke-width="0.5" fill="none" stroke-linecap="round" stroke-linejoin="round" opacity="0.55"/><polyline points="377.0,354.9 379.5,357.8" stroke="#c4c4c4" stroke-width="0.5" fill="none" stroke-linecap="round" stroke-linejoin="round" opacity="0.55"/><polyline points="379.4,372.6 376.2,372.9" stroke="#f0d2a0" stroke-width="0.5" fill="none" stroke-linecap="round" stroke-linejoin="round" opacity="0.55"/><polyline points="357.8,396.7 362.2,403.3" stroke="#f0d2a0" stroke-width="0.5" fill="none" stroke-linecap="round" stroke-linejoin="round" opacity="0.55"/><polyline points="384.6,361.0 385.3,364.0" stroke="#ffffff" stroke-width="0.5" fill="none" stroke-linecap="round" stroke-linejoin="round" opacity="0.55"/><polyline points="356.9,397.7 359.0,402.6" stroke="#ffffff" stroke-width="0.5" fill="none" stroke-linecap="round" stroke-linejoin="round" opacity="0.55"/><polyline points="369.4,384.6 376.8,386.4" stroke="#c4c4c4" stroke-width="0.5" fill="none" stroke-linecap="round" stroke-linejoin="round" opacity="0.55"/><polyline points="385.4,359.3 386.1,364.0" stroke="#ffffff" stroke-width="0.5" fill="none" stroke-linecap="round" stroke-linejoin="round" opacity="0.55"/><polyline points="331.4,376.5 333.4,383.2" stroke="#ffffff" stroke-width="0.5" fill="none" stroke-linecap="round" stroke-linejoin="round" opacity="0.55"/><polyline points="405.9,376.1 404.7,379.1" stroke="#c4c4c4" stroke-width="0.5" fill="none" stroke-linecap="round" stroke-linejoin="round" opacity="0.55"/><polyline points="377.1,396.3 371.0,397.1" stroke="#f0d2a0" stroke-width="0.5" fill="none" stroke-linecap="round" stroke-linejoin="round" opacity="0.55"/><polyline points="337.7,361.8 333.5,364.4" stroke="#c4c4c4" stroke-width="0.5" fill="none" stroke-linecap="round" stroke-linejoin="round" opacity="0.55"/><polyline points="332.6,363.3 335.4,369.3" stroke="#ffffff" stroke-width="0.5" fill="none" stroke-linecap="round" stroke-linejoin="round" opacity="0.55"/><polyline points="379.4,367.5 376.4,371.4" stroke="#c4c4c4" stroke-width="0.5" fill="none" stroke-linecap="round" stroke-linejoin="round" opacity="0.55"/><polyline points="377.8,366.6 375.0,369.8" stroke="#f0d2a0" stroke-width="0.5" fill="none" stroke-linecap="round" stroke-linejoin="round" opacity="0.55"/><polyline points="365.3,359.7 363.6,362.1" stroke="#f0d2a0" stroke-width="0.5" fill="none" stroke-linecap="round" stroke-linejoin="round" opacity="0.55"/><polyline points="387.7,392.1 387.6,397.4" stroke="#f0d2a0" stroke-width="0.5" fill="none" stroke-linecap="round" stroke-linejoin="round" opacity="0.55"/><polyline points="331.2,356.9 336.0,358.9" stroke="#ffffff" stroke-width="0.5" fill="none" stroke-linecap="round" stroke-linejoin="round" opacity="0.55"/><polyline points="401.3,366.9 407.9,366.5" stroke="#f0d2a0" stroke-width="0.5" fill="none" stroke-linecap="round" stroke-linejoin="round" opacity="0.55"/><polyline points="378.1,392.3 380.9,393.8" stroke="#ffffff" stroke-width="0.5" fill="none" stroke-linecap="round" stroke-linejoin="round" opacity="0.55"/><polyline points="364.3,401.7 364.7,409.2" stroke="#c4c4c4" stroke-width="0.5" fill="none" stroke-linecap="round" stroke-linejoin="round" opacity="0.55"/><polyline points="327.6,368.9 329.5,375.5" stroke="#c4c4c4" stroke-width="0.5" fill="none" stroke-linecap="round" stroke-linejoin="round" opacity="0.55"/><polyline points="399.8,374.6 398.0,378.5" stroke="#c4c4c4" stroke-width="0.5" fill="none" stroke-linecap="round" stroke-linejoin="round" opacity="0.55"/><polyline points="375.0,362.8 376.7,367.4" stroke="#c4c4c4" stroke-width="0.5" fill="none" stroke-linecap="round" stroke-linejoin="round" opacity="0.55"/><polyline points="376.7,365.0 374.8,369.2" stroke="#c4c4c4" stroke-width="0.5" fill="none" stroke-linecap="round" stroke-linejoin="round" opacity="0.55"/><polyline points="331.9,378.7 334.3,384.4" stroke="#f0d2a0" stroke-width="0.5" fill="none" stroke-linecap="round" stroke-linejoin="round" opacity="0.55"/><polyline points="369.7,381.3 377.1,381.7" stroke="#f0d2a0" stroke-width="0.5" fill="none" stroke-linecap="round" stroke-linejoin="round" opacity="0.55"/><polyline points="385.5,370.1 388.3,374.0" stroke="#c4c4c4" stroke-width="0.5" fill="none" stroke-linecap="round" stroke-linejoin="round" opacity="0.55"/><polyline points="350.5,354.4 346.4,355.2" stroke="#ffffff" stroke-width="0.5" fill="none" stroke-linecap="round" stroke-linejoin="round" opacity="0.55"/><polyline points="347.5,377.9 343.0,378.3" stroke="#c4c4c4" stroke-width="0.5" fill="none" stroke-linecap="round" stroke-linejoin="round" opacity="0.55"/><polyline points="385.0,390.3 387.4,393.7" stroke="#f0d2a0" stroke-width="0.5" fill="none" stroke-linecap="round" stroke-linejoin="round" opacity="0.55"/><polyline points="357.9,369.7 356.5,372.6" stroke="#ffffff" stroke-width="0.5" fill="none" stroke-linecap="round" stroke-linejoin="round" opacity="0.55"/><polyline points="352.5,355.7 353.6,360.4" stroke="#c4c4c4" stroke-width="0.5" fill="none" stroke-linecap="round" stroke-linejoin="round" opacity="0.55"/><polyline points="372.7,361.0 370.1,366.6" stroke="#ffffff" stroke-width="0.5" fill="none" stroke-linecap="round" stroke-linejoin="round" opacity="0.55"/><polyline points="402.5,363.2 406.3,362.9" stroke="#c4c4c4" stroke-width="0.5" fill="none" stroke-linecap="round" stroke-linejoin="round" opacity="0.55"/><polyline points="396.9,392.2 398.8,396.9" stroke="#ffffff" stroke-width="0.5" fill="none" stroke-linecap="round" stroke-linejoin="round" opacity="0.55"/><polyline points="377.5,380.4 373.0,382.1" stroke="#f0d2a0" stroke-width="0.5" fill="none" stroke-linecap="round" stroke-linejoin="round" opacity="0.55"/><polyline points="343.4,398.8 340.8,400.7" stroke="#c4c4c4" stroke-width="0.5" fill="none" stroke-linecap="round" stroke-linejoin="round" opacity="0.55"/><polyline points="342.4,353.2 349.1,355.0" stroke="#c4c4c4" stroke-width="0.5" fill="none" stroke-linecap="round" stroke-linejoin="round" opacity="0.55"/><polyline points="334.2,360.8 328.4,362.3" stroke="#f0d2a0" stroke-width="0.5" fill="none" stroke-linecap="round" stroke-linejoin="round" opacity="0.55"/><polyline points="392.0,359.4 394.5,363.2" stroke="#f0d2a0" stroke-width="0.5" fill="none" stroke-linecap="round" stroke-linejoin="round" opacity="0.55"/><polyline points="394.6,390.2 392.4,395.1" stroke="#ffffff" stroke-width="0.5" fill="none" stroke-linecap="round" stroke-linejoin="round" opacity="0.55"/><polyline points="344.5,384.8 346.4,387.9" stroke="#c4c4c4" stroke-width="0.5" fill="none" stroke-linecap="round" stroke-linejoin="round" opacity="0.55"/><polyline points="376.7,386.7 370.3,387.1" stroke="#c4c4c4" stroke-width="0.5" fill="none" stroke-linecap="round" stroke-linejoin="round" opacity="0.55"/><polyline points="377.2,402.1 373.9,404.5" stroke="#c4c4c4" stroke-width="0.5" fill="none" stroke-linecap="round" stroke-linejoin="round" opacity="0.55"/><polyline points="399.8,395.5 399.9,399.5" stroke="#c4c4c4" stroke-width="0.5" fill="none" stroke-linecap="round" stroke-linejoin="round" opacity="0.55"/><polyline points="338.5,371.0 333.9,374.8" stroke="#f0d2a0" stroke-width="0.5" fill="none" stroke-linecap="round" stroke-linejoin="round" opacity="0.55"/><polyline points="362.6,378.7 365.6,379.1" stroke="#c4c4c4" stroke-width="0.5" fill="none" stroke-linecap="round" stroke-linejoin="round" opacity="0.55"/><polyline points="371.0,366.6 367.2,367.8" stroke="#c4c4c4" stroke-width="0.5" fill="none" stroke-linecap="round" stroke-linejoin="round" opacity="0.55"/><polyline points="351.7,357.7 354.8,357.6" stroke="#ffffff" stroke-width="0.5" fill="none" stroke-linecap="round" stroke-linejoin="round" opacity="0.55"/><polyline points="381.9,389.8 378.7,390.4" stroke="#c4c4c4" stroke-width="0.5" fill="none" stroke-linecap="round" stroke-linejoin="round" opacity="0.55"/><polyline points="392.3,394.3 399.1,397.4" stroke="#f0d2a0" stroke-width="0.5" fill="none" stroke-linecap="round" stroke-linejoin="round" opacity="0.55"/><polyline points="331.2,361.1 334.4,362.7" stroke="#ffffff" stroke-width="0.5" fill="none" stroke-linecap="round" stroke-linejoin="round" opacity="0.55"/><polyline points="393.0,384.1 397.4,384.0" stroke="#c4c4c4" stroke-width="0.5" fill="none" stroke-linecap="round" stroke-linejoin="round" opacity="0.55"/><polyline points="347.3,368.2 350.5,371.1" stroke="#c4c4c4" stroke-width="0.5" fill="none" stroke-linecap="round" stroke-linejoin="round" opacity="0.55"/><polyline points="400.3,391.5 395.8,395.6" stroke="#ffffff" stroke-width="0.5" fill="none" stroke-linecap="round" stroke-linejoin="round" opacity="0.55"/><polyline points="366.6,355.3 371.8,356.5" stroke="#c4c4c4" stroke-width="0.5" fill="none" stroke-linecap="round" stroke-linejoin="round" opacity="0.55"/><polyline points="383.4,394.7 387.9,398.5" stroke="#ffffff" stroke-width="0.5" fill="none" stroke-linecap="round" stroke-linejoin="round" opacity="0.55"/><polyline points="367.0,365.6 373.7,364.9" stroke="#f0d2a0" stroke-width="0.5" fill="none" stroke-linecap="round" stroke-linejoin="round" opacity="0.55"/><polyline points="330.2,387.5 325.7,393.1" stroke="#c4c4c4" stroke-width="0.5" fill="none" stroke-linecap="round" stroke-linejoin="round" opacity="0.55"/><polyline points="406.8,276.9 408.1,283.8" stroke="#ffffff" stroke-width="0.5" fill="none" stroke-linecap="round" stroke-linejoin="round" opacity="0.55"/><polyline points="445.4,326.1 440.1,327.0" stroke="#c4c4c4" stroke-width="0.5" fill="none" stroke-linecap="round" stroke-linejoin="round" opacity="0.55"/><polyline points="383.1,296.5 388.0,297.3" stroke="#ffffff" stroke-width="0.5" fill="none" stroke-linecap="round" stroke-linejoin="round" opacity="0.55"/><polyline points="384.8,288.6 380.0,290.3" stroke="#f0d2a0" stroke-width="0.5" fill="none" stroke-linecap="round" stroke-linejoin="round" opacity="0.55"/><polyline points="450.1,315.1 451.3,322.7" stroke="#ffffff" stroke-width="0.5" fill="none" stroke-linecap="round" stroke-linejoin="round" opacity="0.55"/><polyline points="382.3,290.5 379.8,293.3" stroke="#c4c4c4" stroke-width="0.5" fill="none" stroke-linecap="round" stroke-linejoin="round" opacity="0.55"/><polyline points="363.1,299.5 357.1,302.9" stroke="#c4c4c4" stroke-width="0.5" fill="none" stroke-linecap="round" stroke-linejoin="round" opacity="0.55"/><polyline points="394.4,335.7 395.7,339.7" stroke="#c4c4c4" stroke-width="0.5" fill="none" stroke-linecap="round" stroke-linejoin="round" opacity="0.55"/><polyline points="422.4,343.0 416.1,345.1" stroke="#c4c4c4" stroke-width="0.5" fill="none" stroke-linecap="round" stroke-linejoin="round" opacity="0.55"/><polyline points="415.4,279.8 415.4,283.6" stroke="#c4c4c4" stroke-width="0.5" fill="none" stroke-linecap="round" stroke-linejoin="round" opacity="0.55"/><polyline points="391.5,279.9 397.7,280.3" stroke="#f0d2a0" stroke-width="0.5" fill="none" stroke-linecap="round" stroke-linejoin="round" opacity="0.55"/><polyline points="394.6,265.0 389.7,270.4" stroke="#c4c4c4" stroke-width="0.5" fill="none" stroke-linecap="round" stroke-linejoin="round" opacity="0.55"/><polyline points="394.6,275.5 392.6,281.2" stroke="#c4c4c4" stroke-width="0.5" fill="none" stroke-linecap="round" stroke-linejoin="round" opacity="0.55"/><polyline points="442.2,298.8 437.8,302.8" stroke="#c4c4c4" stroke-width="0.5" fill="none" stroke-linecap="round" stroke-linejoin="round" opacity="0.55"/><polyline points="417.7,316.0 421.6,319.6" stroke="#ffffff" stroke-width="0.5" fill="none" stroke-linecap="round" stroke-linejoin="round" opacity="0.55"/><polyline points="440.7,283.6 442.3,288.4" stroke="#f0d2a0" stroke-width="0.5" fill="none" stroke-linecap="round" stroke-linejoin="round" opacity="0.55"/><polyline points="396.7,265.6 389.6,267.3" stroke="#c4c4c4" stroke-width="0.5" fill="none" stroke-linecap="round" stroke-linejoin="round" opacity="0.55"/><polyline points="440.7,290.6 438.4,292.5" stroke="#ffffff" stroke-width="0.5" fill="none" stroke-linecap="round" stroke-linejoin="round" opacity="0.55"/><polyline points="362.2,327.3 355.2,330.6" stroke="#f0d2a0" stroke-width="0.5" fill="none" stroke-linecap="round" stroke-linejoin="round" opacity="0.55"/><polyline points="402.9,322.1 406.3,326.5" stroke="#f0d2a0" stroke-width="0.5" fill="none" stroke-linecap="round" stroke-linejoin="round" opacity="0.55"/><polyline points="424.4,301.0 426.3,308.7" stroke="#ffffff" stroke-width="0.5" fill="none" stroke-linecap="round" stroke-linejoin="round" opacity="0.55"/><polyline points="423.0,313.7 427.5,318.0" stroke="#f0d2a0" stroke-width="0.5" fill="none" stroke-linecap="round" stroke-linejoin="round" opacity="0.55"/><polyline points="351.6,270.1 356.0,276.2" stroke="#ffffff" stroke-width="0.5" fill="none" stroke-linecap="round" stroke-linejoin="round" opacity="0.55"/><polyline points="369.0,324.1 361.3,324.5" stroke="#f0d2a0" stroke-width="0.5" fill="none" stroke-linecap="round" stroke-linejoin="round" opacity="0.55"/><polyline points="394.4,277.3 401.5,280.2" stroke="#c4c4c4" stroke-width="0.5" fill="none" stroke-linecap="round" stroke-linejoin="round" opacity="0.55"/><polyline points="395.2,309.5 396.3,313.5" stroke="#f0d2a0" stroke-width="0.5" fill="none" stroke-linecap="round" stroke-linejoin="round" opacity="0.55"/><polyline points="395.1,287.8 395.1,293.6" stroke="#f0d2a0" stroke-width="0.5" fill="none" stroke-linecap="round" stroke-linejoin="round" opacity="0.55"/><polyline points="383.0,332.9 380.0,336.1" stroke="#f0d2a0" stroke-width="0.5" fill="none" stroke-linecap="round" stroke-linejoin="round" opacity="0.55"/><polyline points="417.6,303.0 422.5,308.1" stroke="#c4c4c4" stroke-width="0.5" fill="none" stroke-linecap="round" stroke-linejoin="round" opacity="0.55"/><polyline points="379.3,303.3 385.1,305.1" stroke="#c4c4c4" stroke-width="0.5" fill="none" stroke-linecap="round" stroke-linejoin="round" opacity="0.55"/><polyline points="361.3,288.6 365.9,290.5" stroke="#c4c4c4" stroke-width="0.5" fill="none" stroke-linecap="round" stroke-linejoin="round" opacity="0.55"/><polyline points="428.9,275.4 423.1,279.6" stroke="#ffffff" stroke-width="0.5" fill="none" stroke-linecap="round" stroke-linejoin="round" opacity="0.55"/><polyline points="367.4,269.8 363.7,272.3" stroke="#c4c4c4" stroke-width="0.5" fill="none" stroke-linecap="round" stroke-linejoin="round" opacity="0.55"/><polyline points="436.4,279.0 438.2,284.0" stroke="#f0d2a0" stroke-width="0.5" fill="none" stroke-linecap="round" stroke-linejoin="round" opacity="0.55"/><polyline points="429.7,277.6 422.3,278.0" stroke="#ffffff" stroke-width="0.5" fill="none" stroke-linecap="round" stroke-linejoin="round" opacity="0.55"/><polyline points="416.5,336.4 421.8,341.0" stroke="#c4c4c4" stroke-width="0.5" fill="none" stroke-linecap="round" stroke-linejoin="round" opacity="0.55"/><polyline points="401.8,324.1 406.8,325.3" stroke="#c4c4c4" stroke-width="0.5" fill="none" stroke-linecap="round" stroke-linejoin="round" opacity="0.55"/><polyline points="389.8,331.0 385.4,334.1" stroke="#f0d2a0" stroke-width="0.5" fill="none" stroke-linecap="round" stroke-linejoin="round" opacity="0.55"/><polyline points="441.9,320.7 442.5,324.9" stroke="#ffffff" stroke-width="0.5" fill="none" stroke-linecap="round" stroke-linejoin="round" opacity="0.55"/><polyline points="362.2,290.0 357.8,294.8" stroke="#f0d2a0" stroke-width="0.5" fill="none" stroke-linecap="round" stroke-linejoin="round" opacity="0.55"/><polyline points="385.1,297.9 392.9,298.0" stroke="#c4c4c4" stroke-width="0.5" fill="none" stroke-linecap="round" stroke-linejoin="round" opacity="0.55"/><polyline points="413.1,266.3 415.9,271.7" stroke="#ffffff" stroke-width="0.5" fill="none" stroke-linecap="round" stroke-linejoin="round" opacity="0.55"/><polyline points="399.6,303.3 407.1,303.5" stroke="#f0d2a0" stroke-width="0.5" fill="none" stroke-linecap="round" stroke-linejoin="round" opacity="0.55"/><polyline points="411.9,291.4 417.0,296.7" stroke="#c4c4c4" stroke-width="0.5" fill="none" stroke-linecap="round" stroke-linejoin="round" opacity="0.55"/><polyline points="375.4,291.7 379.3,293.3" stroke="#c4c4c4" stroke-width="0.5" fill="none" stroke-linecap="round" stroke-linejoin="round" opacity="0.55"/><polyline points="383.0,304.0 385.0,308.2" stroke="#c4c4c4" stroke-width="0.5" fill="none" stroke-linecap="round" stroke-linejoin="round" opacity="0.55"/><polyline points="449.3,317.0 454.6,321.6" stroke="#c4c4c4" stroke-width="0.5" fill="none" stroke-linecap="round" stroke-linejoin="round" opacity="0.55"/><polyline points="387.7,308.9 383.6,311.8" stroke="#c4c4c4" stroke-width="0.5" fill="none" stroke-linecap="round" stroke-linejoin="round" opacity="0.55"/><polyline points="356.6,267.8 352.1,273.2" stroke="#ffffff" stroke-width="0.5" fill="none" stroke-linecap="round" stroke-linejoin="round" opacity="0.55"/><polyline points="429.4,337.7 424.3,340.9" stroke="#ffffff" stroke-width="0.5" fill="none" stroke-linecap="round" stroke-linejoin="round" opacity="0.55"/><polyline points="367.7,318.0 369.8,322.9" stroke="#c4c4c4" stroke-width="0.5" fill="none" stroke-linecap="round" stroke-linejoin="round" opacity="0.55"/><polyline points="438.0,298.1 441.5,298.6" stroke="#c4c4c4" stroke-width="0.5" fill="none" stroke-linecap="round" stroke-linejoin="round" opacity="0.55"/><polyline points="429.2,309.5 432.4,312.3" stroke="#ffffff" stroke-width="0.5" fill="none" stroke-linecap="round" stroke-linejoin="round" opacity="0.55"/><polyline points="379.1,298.9 385.2,300.1" stroke="#ffffff" stroke-width="0.5" fill="none" stroke-linecap="round" stroke-linejoin="round" opacity="0.55"/><polyline points="433.2,326.7 430.4,330.9" stroke="#ffffff" stroke-width="0.5" fill="none" stroke-linecap="round" stroke-linejoin="round" opacity="0.55"/><polyline points="417.8,312.1 419.2,319.9" stroke="#f0d2a0" stroke-width="0.5" fill="none" stroke-linecap="round" stroke-linejoin="round" opacity="0.55"/><polyline points="403.7,270.7 404.2,276.1" stroke="#f0d2a0" stroke-width="0.5" fill="none" stroke-linecap="round" stroke-linejoin="round" opacity="0.55"/><polyline points="422.0,283.6 421.4,290.3" stroke="#c4c4c4" stroke-width="0.5" fill="none" stroke-linecap="round" stroke-linejoin="round" opacity="0.55"/><polyline points="427.8,321.8 435.1,322.3" stroke="#f0d2a0" stroke-width="0.5" fill="none" stroke-linecap="round" stroke-linejoin="round" opacity="0.55"/><polyline points="394.3,339.5 398.3,340.9" stroke="#ffffff" stroke-width="0.5" fill="none" stroke-linecap="round" stroke-linejoin="round" opacity="0.55"/><polyline points="418.5,314.1 421.0,318.3" stroke="#c4c4c4" stroke-width="0.5" fill="none" stroke-linecap="round" stroke-linejoin="round" opacity="0.55"/><polyline points="410.2,289.6 405.7,296.0" stroke="#c4c4c4" stroke-width="0.5" fill="none" stroke-linecap="round" stroke-linejoin="round" opacity="0.55"/><polyline points="383.9,316.2 380.3,321.3" stroke="#f0d2a0" stroke-width="0.5" fill="none" stroke-linecap="round" stroke-linejoin="round" opacity="0.55"/><polyline points="405.6,287.7 402.7,289.1" stroke="#ffffff" stroke-width="0.5" fill="none" stroke-linecap="round" stroke-linejoin="round" opacity="0.55"/><polyline points="433.9,312.7 430.3,315.5" stroke="#c4c4c4" stroke-width="0.5" fill="none" stroke-linecap="round" stroke-linejoin="round" opacity="0.55"/><polyline points="385.3,319.5 385.2,325.5" stroke="#c4c4c4" stroke-width="0.5" fill="none" stroke-linecap="round" stroke-linejoin="round" opacity="0.55"/><polyline points="418.7,290.0 419.2,294.4" stroke="#ffffff" stroke-width="0.5" fill="none" stroke-linecap="round" stroke-linejoin="round" opacity="0.55"/><polyline points="375.9,275.4 369.5,279.3" stroke="#f0d2a0" stroke-width="0.5" fill="none" stroke-linecap="round" stroke-linejoin="round" opacity="0.55"/><polyline points="382.1,270.9 379.6,276.1" stroke="#c4c4c4" stroke-width="0.5" fill="none" stroke-linecap="round" stroke-linejoin="round" opacity="0.55"/><polyline points="378.1,268.7 377.7,273.6" stroke="#ffffff" stroke-width="0.5" fill="none" stroke-linecap="round" stroke-linejoin="round" opacity="0.55"/><polyline points="429.7,301.2 431.4,304.2" stroke="#c4c4c4" stroke-width="0.5" fill="none" stroke-linecap="round" stroke-linejoin="round" opacity="0.55"/><polyline points="387.6,306.2 383.7,308.1" stroke="#c4c4c4" stroke-width="0.5" fill="none" stroke-linecap="round" stroke-linejoin="round" opacity="0.55"/><polyline points="365.2,279.6 367.9,282.4" stroke="#c4c4c4" stroke-width="0.5" fill="none" stroke-linecap="round" stroke-linejoin="round" opacity="0.55"/><polyline points="388.1,305.9 391.4,307.5" stroke="#f0d2a0" stroke-width="0.5" fill="none" stroke-linecap="round" stroke-linejoin="round" opacity="0.55"/><polyline points="385.0,272.6 391.2,272.6" stroke="#ffffff" stroke-width="0.5" fill="none" stroke-linecap="round" stroke-linejoin="round" opacity="0.55"/><polyline points="381.9,306.1 385.0,306.1" stroke="#f0d2a0" stroke-width="0.5" fill="none" stroke-linecap="round" stroke-linejoin="round" opacity="0.55"/><polyline points="407.8,281.3 412.8,287.1" stroke="#f0d2a0" stroke-width="0.5" fill="none" stroke-linecap="round" stroke-linejoin="round" opacity="0.55"/><polyline points="427.1,330.3 430.6,337.3" stroke="#c4c4c4" stroke-width="0.5" fill="none" stroke-linecap="round" stroke-linejoin="round" opacity="0.55"/><polyline points="366.5,278.6 369.9,278.4" stroke="#c4c4c4" stroke-width="0.5" fill="none" stroke-linecap="round" stroke-linejoin="round" opacity="0.55"/><polyline points="438.2,301.1 445.2,304.3" stroke="#f0d2a0" stroke-width="0.5" fill="none" stroke-linecap="round" stroke-linejoin="round" opacity="0.55"/><polyline points="443.7,321.2 445.7,324.0" stroke="#ffffff" stroke-width="0.5" fill="none" stroke-linecap="round" stroke-linejoin="round" opacity="0.55"/><polyline points="447.3,318.2 443.6,321.6" stroke="#c4c4c4" stroke-width="0.5" fill="none" stroke-linecap="round" stroke-linejoin="round" opacity="0.55"/><polyline points="368.7,267.1 372.2,269.7" stroke="#ffffff" stroke-width="0.5" fill="none" stroke-linecap="round" stroke-linejoin="round" opacity="0.55"/><polyline points="429.1,321.5 426.9,327.3" stroke="#c4c4c4" stroke-width="0.5" fill="none" stroke-linecap="round" stroke-linejoin="round" opacity="0.55"/><polyline points="379.0,264.5 381.3,267.7" stroke="#f0d2a0" stroke-width="0.5" fill="none" stroke-linecap="round" stroke-linejoin="round" opacity="0.55"/><polyline points="426.1,272.5 429.2,276.0" stroke="#c4c4c4" stroke-width="0.5" fill="none" stroke-linecap="round" stroke-linejoin="round" opacity="0.55"/><polyline points="396.5,277.7 396.2,281.8" stroke="#ffffff" stroke-width="0.5" fill="none" stroke-linecap="round" stroke-linejoin="round" opacity="0.55"/><polyline points="395.1,337.9 394.5,344.9" stroke="#c4c4c4" stroke-width="0.5" fill="none" stroke-linecap="round" stroke-linejoin="round" opacity="0.55"/><polyline points="384.9,324.7 391.1,327.7" stroke="#f0d2a0" stroke-width="0.5" fill="none" stroke-linecap="round" stroke-linejoin="round" opacity="0.55"/><polyline points="435.1,314.9 438.8,318.6" stroke="#c4c4c4" stroke-width="0.5" fill="none" stroke-linecap="round" stroke-linejoin="round" opacity="0.55"/><polyline points="396.1,314.9 396.2,318.6" stroke="#c4c4c4" stroke-width="0.5" fill="none" stroke-linecap="round" stroke-linejoin="round" opacity="0.55"/><polyline points="421.4,308.8 422.5,312.4" stroke="#f0d2a0" stroke-width="0.5" fill="none" stroke-linecap="round" stroke-linejoin="round" opacity="0.55"/><polyline points="371.4,266.1 375.5,270.3" stroke="#c4c4c4" stroke-width="0.5" fill="none" stroke-linecap="round" stroke-linejoin="round" opacity="0.55"/><polyline points="372.9,272.8 370.8,277.7" stroke="#ffffff" stroke-width="0.5" fill="none" stroke-linecap="round" stroke-linejoin="round" opacity="0.55"/><polyline points="412.5,327.8 405.4,330.4" stroke="#c4c4c4" stroke-width="0.5" fill="none" stroke-linecap="round" stroke-linejoin="round" opacity="0.55"/><polyline points="448.9,299.0 448.5,303.3" stroke="#ffffff" stroke-width="0.5" fill="none" stroke-linecap="round" stroke-linejoin="round" opacity="0.55"/><polyline points="386.7,297.7 389.7,300.1" stroke="#ffffff" stroke-width="0.5" fill="none" stroke-linecap="round" stroke-linejoin="round" opacity="0.55"/><polyline points="392.3,305.1 390.5,310.4" stroke="#c4c4c4" stroke-width="0.5" fill="none" stroke-linecap="round" stroke-linejoin="round" opacity="0.55"/><polyline points="364.9,299.3 367.2,306.5" stroke="#c4c4c4" stroke-width="0.5" fill="none" stroke-linecap="round" stroke-linejoin="round" opacity="0.55"/><polyline points="359.8,278.6 362.1,285.0" stroke="#ffffff" stroke-width="0.5" fill="none" stroke-linecap="round" stroke-linejoin="round" opacity="0.55"/><polyline points="433.7,336.0 438.8,340.3" stroke="#c4c4c4" stroke-width="0.5" fill="none" stroke-linecap="round" stroke-linejoin="round" opacity="0.55"/><polyline points="410.5,321.3 404.2,324.4" stroke="#ffffff" stroke-width="0.5" fill="none" stroke-linecap="round" stroke-linejoin="round" opacity="0.55"/><polyline points="388.7,322.5 390.9,324.8" stroke="#f0d2a0" stroke-width="0.5" fill="none" stroke-linecap="round" stroke-linejoin="round" opacity="0.55"/><polyline points="354.7,297.2 354.3,304.0" stroke="#c4c4c4" stroke-width="0.5" fill="none" stroke-linecap="round" stroke-linejoin="round" opacity="0.55"/><polyline points="371.6,309.6 379.5,309.6" stroke="#c4c4c4" stroke-width="0.5" fill="none" stroke-linecap="round" stroke-linejoin="round" opacity="0.55"/><polyline points="406.5,333.5 402.7,336.4" stroke="#ffffff" stroke-width="0.5" fill="none" stroke-linecap="round" stroke-linejoin="round" opacity="0.55"/><polyline points="432.4,334.1 429.5,337.7" stroke="#ffffff" stroke-width="0.5" fill="none" stroke-linecap="round" stroke-linejoin="round" opacity="0.55"/><polyline points="376.2,272.7 372.2,278.1" stroke="#c4c4c4" stroke-width="0.5" fill="none" stroke-linecap="round" stroke-linejoin="round" opacity="0.55"/><polyline points="368.9,278.8 371.0,281.6" stroke="#ffffff" stroke-width="0.5" fill="none" stroke-linecap="round" stroke-linejoin="round" opacity="0.55"/><polyline points="424.0,285.2 417.3,287.7" stroke="#c4c4c4" stroke-width="0.5" fill="none" stroke-linecap="round" stroke-linejoin="round" opacity="0.55"/><polyline points="420.2,272.3 423.3,279.0" stroke="#ffffff" stroke-width="0.5" fill="none" stroke-linecap="round" stroke-linejoin="round" opacity="0.55"/><polyline points="394.7,311.5 401.5,311.3" stroke="#f0d2a0" stroke-width="0.5" fill="none" stroke-linecap="round" stroke-linejoin="round" opacity="0.55"/><polyline points="439.6,307.9 441.2,311.7" stroke="#f0d2a0" stroke-width="0.5" fill="none" stroke-linecap="round" stroke-linejoin="round" opacity="0.55"/><polyline points="424.9,277.3 420.0,282.5" stroke="#ffffff" stroke-width="0.5" fill="none" stroke-linecap="round" stroke-linejoin="round" opacity="0.55"/><polyline points="387.3,340.2 391.9,345.4" stroke="#c4c4c4" stroke-width="0.5" fill="none" stroke-linecap="round" stroke-linejoin="round" opacity="0.55"/><polyline points="421.6,332.3 424.3,337.4" stroke="#ffffff" stroke-width="0.5" fill="none" stroke-linecap="round" stroke-linejoin="round" opacity="0.55"/><polyline points="379.8,275.9 384.4,280.2" stroke="#f0d2a0" stroke-width="0.5" fill="none" stroke-linecap="round" stroke-linejoin="round" opacity="0.55"/><polyline points="416.0,264.9 417.4,268.2" stroke="#f0d2a0" stroke-width="0.5" fill="none" stroke-linecap="round" stroke-linejoin="round" opacity="0.55"/><polyline points="366.5,318.2 363.2,320.7" stroke="#f0d2a0" stroke-width="0.5" fill="none" stroke-linecap="round" stroke-linejoin="round" opacity="0.55"/><polyline points="412.8,329.6 420.2,329.0" stroke="#c4c4c4" stroke-width="0.5" fill="none" stroke-linecap="round" stroke-linejoin="round" opacity="0.55"/><polyline points="443.2,314.5 449.1,316.2" stroke="#c4c4c4" stroke-width="0.5" fill="none" stroke-linecap="round" stroke-linejoin="round" opacity="0.55"/><polyline points="370.3,267.2 372.3,270.2" stroke="#ffffff" stroke-width="0.5" fill="none" stroke-linecap="round" stroke-linejoin="round" opacity="0.55"/><polyline points="444.7,299.6 447.0,304.7" stroke="#c4c4c4" stroke-width="0.5" fill="none" stroke-linecap="round" stroke-linejoin="round" opacity="0.55"/><polyline points="374.3,323.6 377.3,329.6" stroke="#c4c4c4" stroke-width="0.5" fill="none" stroke-linecap="round" stroke-linejoin="round" opacity="0.55"/><polyline points="414.6,280.3 409.6,284.5" stroke="#c4c4c4" stroke-width="0.5" fill="none" stroke-linecap="round" stroke-linejoin="round" opacity="0.55"/><polyline points="410.6,302.0 411.8,306.4" stroke="#c4c4c4" stroke-width="0.5" fill="none" stroke-linecap="round" stroke-linejoin="round" opacity="0.55"/><polyline points="399.8,295.0 405.2,297.6" stroke="#c4c4c4" stroke-width="0.5" fill="none" stroke-linecap="round" stroke-linejoin="round" opacity="0.55"/><polyline points="437.2,283.3 434.5,288.4" stroke="#c4c4c4" stroke-width="0.5" fill="none" stroke-linecap="round" stroke-linejoin="round" opacity="0.55"/><polyline points="376.6,326.5 380.3,327.5" stroke="#c4c4c4" stroke-width="0.5" fill="none" stroke-linecap="round" stroke-linejoin="round" opacity="0.55"/><polyline points="392.1,269.0 389.5,273.3" stroke="#ffffff" stroke-width="0.5" fill="none" stroke-linecap="round" stroke-linejoin="round" opacity="0.55"/><polyline points="400.7,344.1 402.1,350.4" stroke="#c4c4c4" stroke-width="0.5" fill="none" stroke-linecap="round" stroke-linejoin="round" opacity="0.55"/><polyline points="360.0,280.4 362.8,285.8" stroke="#ffffff" stroke-width="0.5" fill="none" stroke-linecap="round" stroke-linejoin="round" opacity="0.55"/><polyline points="424.0,324.2 420.8,330.2" stroke="#c4c4c4" stroke-width="0.5" fill="none" stroke-linecap="round" stroke-linejoin="round" opacity="0.55"/><polyline points="389.2,272.4 384.4,273.8" stroke="#f0d2a0" stroke-width="0.5" fill="none" stroke-linecap="round" stroke-linejoin="round" opacity="0.55"/><polyline points="374.9,314.3 372.5,316.9" stroke="#c4c4c4" stroke-width="0.5" fill="none" stroke-linecap="round" stroke-linejoin="round" opacity="0.55"/><polyline points="422.4,287.7 417.6,289.1" stroke="#c4c4c4" stroke-width="0.5" fill="none" stroke-linecap="round" stroke-linejoin="round" opacity="0.55"/><polyline points="377.1,307.5 372.7,313.0" stroke="#c4c4c4" stroke-width="0.5" fill="none" stroke-linecap="round" stroke-linejoin="round" opacity="0.55"/><polyline points="379.7,332.3 385.0,337.1" stroke="#f0d2a0" stroke-width="0.5" fill="none" stroke-linecap="round" stroke-linejoin="round" opacity="0.55"/><polyline points="440.9,288.3 444.3,292.8" stroke="#f0d2a0" stroke-width="0.5" fill="none" stroke-linecap="round" stroke-linejoin="round" opacity="0.55"/><polyline points="400.4,305.9 396.7,311.2" stroke="#ffffff" stroke-width="0.5" fill="none" stroke-linecap="round" stroke-linejoin="round" opacity="0.55"/><polyline points="408.6,292.4 416.2,294.1" stroke="#ffffff" stroke-width="0.5" fill="none" stroke-linecap="round" stroke-linejoin="round" opacity="0.55"/><polyline points="388.8,304.6 383.5,307.8" stroke="#c4c4c4" stroke-width="0.5" fill="none" stroke-linecap="round" stroke-linejoin="round" opacity="0.55"/><polyline points="448.2,303.4 443.0,304.0" stroke="#c4c4c4" stroke-width="0.5" fill="none" stroke-linecap="round" stroke-linejoin="round" opacity="0.55"/><polyline points="419.0,324.5 421.4,326.9" stroke="#ffffff" stroke-width="0.5" fill="none" stroke-linecap="round" stroke-linejoin="round" opacity="0.55"/><polyline points="433.4,305.5 435.3,308.5" stroke="#f0d2a0" stroke-width="0.5" fill="none" stroke-linecap="round" stroke-linejoin="round" opacity="0.55"/><polyline points="412.5,306.4 413.7,313.4" stroke="#c4c4c4" stroke-width="0.5" fill="none" stroke-linecap="round" stroke-linejoin="round" opacity="0.55"/><polyline points="389.1,268.9 394.9,269.5" stroke="#ffffff" stroke-width="0.5" fill="none" stroke-linecap="round" stroke-linejoin="round" opacity="0.55"/><polyline points="419.0,264.9 416.6,266.7" stroke="#c4c4c4" stroke-width="0.5" fill="none" stroke-linecap="round" stroke-linejoin="round" opacity="0.55"/><polyline points="387.5,272.0 390.6,272.0" stroke="#f0d2a0" stroke-width="0.5" fill="none" stroke-linecap="round" stroke-linejoin="round" opacity="0.55"/><polyline points="427.3,309.9 420.3,312.3" stroke="#c4c4c4" stroke-width="0.5" fill="none" stroke-linecap="round" stroke-linejoin="round" opacity="0.55"/><polyline points="406.5,297.3 407.0,300.9" stroke="#ffffff" stroke-width="0.5" fill="none" stroke-linecap="round" stroke-linejoin="round" opacity="0.55"/><polyline points="348.1,270.2 342.4,275.4" stroke="#f0d2a0" stroke-width="0.5" fill="none" stroke-linecap="round" stroke-linejoin="round" opacity="0.55"/><polyline points="431.3,269.0 428.5,270.4" stroke="#c4c4c4" stroke-width="0.5" fill="none" stroke-linecap="round" stroke-linejoin="round" opacity="0.55"/><polyline points="382.9,277.7 386.8,279.5" stroke="#ffffff" stroke-width="0.5" fill="none" stroke-linecap="round" stroke-linejoin="round" opacity="0.55"/><polyline points="382.3,300.4 387.3,300.6" stroke="#f0d2a0" stroke-width="0.5" fill="none" stroke-linecap="round" stroke-linejoin="round" opacity="0.55"/><polyline points="407.3,341.7 402.8,344.2" stroke="#c4c4c4" stroke-width="0.5" fill="none" stroke-linecap="round" stroke-linejoin="round" opacity="0.55"/><polyline points="436.5,289.5 432.8,296.0" stroke="#c4c4c4" stroke-width="0.5" fill="none" stroke-linecap="round" stroke-linejoin="round" opacity="0.55"/><polyline points="447.7,304.1 448.2,311.9" stroke="#c4c4c4" stroke-width="0.5" fill="none" stroke-linecap="round" stroke-linejoin="round" opacity="0.55"/><polyline points="389.2,296.3 395.3,298.7" stroke="#c4c4c4" stroke-width="0.5" fill="none" stroke-linecap="round" stroke-linejoin="round" opacity="0.55"/><polyline points="354.4,277.8 358.7,280.0" stroke="#c4c4c4" stroke-width="0.5" fill="none" stroke-linecap="round" stroke-linejoin="round" opacity="0.55"/><polyline points="387.4,293.4 385.0,297.4" stroke="#ffffff" stroke-width="0.5" fill="none" stroke-linecap="round" stroke-linejoin="round" opacity="0.55"/><polyline points="447.9,298.2 441.2,301.8" stroke="#c4c4c4" stroke-width="0.5" fill="none" stroke-linecap="round" stroke-linejoin="round" opacity="0.55"/><polyline points="395.0,291.9 397.8,296.3" stroke="#c4c4c4" stroke-width="0.5" fill="none" stroke-linecap="round" stroke-linejoin="round" opacity="0.55"/><polyline points="431.1,283.6 432.2,287.1" stroke="#c4c4c4" stroke-width="0.5" fill="none" stroke-linecap="round" stroke-linejoin="round" opacity="0.55"/><polyline points="404.4,301.8 406.9,308.3" stroke="#c4c4c4" stroke-width="0.5" fill="none" stroke-linecap="round" stroke-linejoin="round" opacity="0.55"/><polyline points="368.2,296.8 362.8,299.9" stroke="#f0d2a0" stroke-width="0.5" fill="none" stroke-linecap="round" stroke-linejoin="round" opacity="0.55"/><polyline points="399.0,282.4 398.5,287.6" stroke="#c4c4c4" stroke-width="0.5" fill="none" stroke-linecap="round" stroke-linejoin="round" opacity="0.55"/><polyline points="408.8,299.7 401.8,303.4" stroke="#c4c4c4" stroke-width="0.5" fill="none" stroke-linecap="round" stroke-linejoin="round" opacity="0.55"/><polyline points="417.5,271.4 415.1,278.2" stroke="#c4c4c4" stroke-width="0.5" fill="none" stroke-linecap="round" stroke-linejoin="round" opacity="0.55"/><polyline points="378.3,295.6 378.3,299.0" stroke="#c4c4c4" stroke-width="0.5" fill="none" stroke-linecap="round" stroke-linejoin="round" opacity="0.55"/><polyline points="379.4,317.7 375.8,318.0" stroke="#c4c4c4" stroke-width="0.5" fill="none" stroke-linecap="round" stroke-linejoin="round" opacity="0.55"/><polyline points="365.6,322.2 368.3,324.4" stroke="#f0d2a0" stroke-width="0.5" fill="none" stroke-linecap="round" stroke-linejoin="round" opacity="0.55"/><polyline points="375.2,296.7 374.5,304.2" stroke="#c4c4c4" stroke-width="0.5" fill="none" stroke-linecap="round" stroke-linejoin="round" opacity="0.55"/><polyline points="416.0,292.5 413.7,297.0" stroke="#f0d2a0" stroke-width="0.5" fill="none" stroke-linecap="round" stroke-linejoin="round" opacity="0.55"/><polyline points="382.7,314.9 386.6,315.2" stroke="#c4c4c4" stroke-width="0.5" fill="none" stroke-linecap="round" stroke-linejoin="round" opacity="0.55"/><polyline points="421.2,267.3 421.9,270.4" stroke="#c4c4c4" stroke-width="0.5" fill="none" stroke-linecap="round" stroke-linejoin="round" opacity="0.55"/><polyline points="361.7,323.8 362.5,329.5" stroke="#c4c4c4" stroke-width="0.5" fill="none" stroke-linecap="round" stroke-linejoin="round" opacity="0.55"/><polyline points="406.0,322.0 403.2,325.2" stroke="#c4c4c4" stroke-width="0.5" fill="none" stroke-linecap="round" stroke-linejoin="round" opacity="0.55"/><polyline points="426.7,317.1 419.5,319.1" stroke="#ffffff" stroke-width="0.5" fill="none" stroke-linecap="round" stroke-linejoin="round" opacity="0.55"/><polyline points="571.8,337.6 574.2,339.7" stroke="#c4c4c4" stroke-width="0.5" fill="none" stroke-linecap="round" stroke-linejoin="round" opacity="0.55"/><polyline points="544.2,273.3 539.0,277.2" stroke="#c4c4c4" stroke-width="0.5" fill="none" stroke-linecap="round" stroke-linejoin="round" opacity="0.55"/><polyline points="486.6,273.7 482.3,280.1" stroke="#c4c4c4" stroke-width="0.5" fill="none" stroke-linecap="round" stroke-linejoin="round" opacity="0.55"/><polyline points="537.1,343.8 532.8,349.5" stroke="#c4c4c4" stroke-width="0.5" fill="none" stroke-linecap="round" stroke-linejoin="round" opacity="0.55"/><polyline points="504.7,319.3 506.0,326.8" stroke="#c4c4c4" stroke-width="0.5" fill="none" stroke-linecap="round" stroke-linejoin="round" opacity="0.55"/><polyline points="551.1,292.2 551.9,297.9" stroke="#c4c4c4" stroke-width="0.5" fill="none" stroke-linecap="round" stroke-linejoin="round" opacity="0.55"/><polyline points="494.7,274.0 497.1,279.7" stroke="#f0d2a0" stroke-width="0.5" fill="none" stroke-linecap="round" stroke-linejoin="round" opacity="0.55"/><polyline points="534.5,289.7 530.4,290.6" stroke="#c4c4c4" stroke-width="0.5" fill="none" stroke-linecap="round" stroke-linejoin="round" opacity="0.55"/><polyline points="488.8,359.5 485.6,361.3" stroke="#ffffff" stroke-width="0.5" fill="none" stroke-linecap="round" stroke-linejoin="round" opacity="0.55"/><polyline points="519.4,346.1 519.9,350.0" stroke="#f0d2a0" stroke-width="0.5" fill="none" stroke-linecap="round" stroke-linejoin="round" opacity="0.55"/><polyline points="555.3,307.9 558.6,310.2" stroke="#f0d2a0" stroke-width="0.5" fill="none" stroke-linecap="round" stroke-linejoin="round" opacity="0.55"/><polyline points="477.4,270.5 479.1,274.6" stroke="#c4c4c4" stroke-width="0.5" fill="none" stroke-linecap="round" stroke-linejoin="round" opacity="0.55"/><polyline points="507.1,276.2 504.2,279.8" stroke="#c4c4c4" stroke-width="0.5" fill="none" stroke-linecap="round" stroke-linejoin="round" opacity="0.55"/><polyline points="472.7,271.8 471.5,274.6" stroke="#c4c4c4" stroke-width="0.5" fill="none" stroke-linecap="round" stroke-linejoin="round" opacity="0.55"/><polyline points="572.6,324.9 569.8,327.1" stroke="#f0d2a0" stroke-width="0.5" fill="none" stroke-linecap="round" stroke-linejoin="round" opacity="0.55"/><polyline points="475.3,322.7 478.3,323.5" stroke="#c4c4c4" stroke-width="0.5" fill="none" stroke-linecap="round" stroke-linejoin="round" opacity="0.55"/><polyline points="532.3,272.4 538.6,274.8" stroke="#c4c4c4" stroke-width="0.5" fill="none" stroke-linecap="round" stroke-linejoin="round" opacity="0.55"/><polyline points="488.4,284.1 490.9,289.7" stroke="#c4c4c4" stroke-width="0.5" fill="none" stroke-linecap="round" stroke-linejoin="round" opacity="0.55"/><polyline points="543.3,299.3 546.1,302.1" stroke="#c4c4c4" stroke-width="0.5" fill="none" stroke-linecap="round" stroke-linejoin="round" opacity="0.55"/><polyline points="555.1,291.4 558.2,292.2" stroke="#f0d2a0" stroke-width="0.5" fill="none" stroke-linecap="round" stroke-linejoin="round" opacity="0.55"/><polyline points="512.8,317.9 515.0,321.1" stroke="#ffffff" stroke-width="0.5" fill="none" stroke-linecap="round" stroke-linejoin="round" opacity="0.55"/><polyline points="469.5,288.6 468.1,292.0" stroke="#ffffff" stroke-width="0.5" fill="none" stroke-linecap="round" stroke-linejoin="round" opacity="0.55"/><polyline points="556.6,315.8 560.0,318.1" stroke="#f0d2a0" stroke-width="0.5" fill="none" stroke-linecap="round" stroke-linejoin="round" opacity="0.55"/><polyline points="469.6,271.8 467.1,273.9" stroke="#ffffff" stroke-width="0.5" fill="none" stroke-linecap="round" stroke-linejoin="round" opacity="0.55"/><polyline points="506.0,335.9 507.7,342.9" stroke="#ffffff" stroke-width="0.5" fill="none" stroke-linecap="round" stroke-linejoin="round" opacity="0.55"/><polyline points="506.5,324.8 507.4,329.5" stroke="#c4c4c4" stroke-width="0.5" fill="none" stroke-linecap="round" stroke-linejoin="round" opacity="0.55"/><polyline points="515.6,310.3 514.9,315.9" stroke="#ffffff" stroke-width="0.5" fill="none" stroke-linecap="round" stroke-linejoin="round" opacity="0.55"/><polyline points="535.2,329.8 531.1,331.5" stroke="#c4c4c4" stroke-width="0.5" fill="none" stroke-linecap="round" stroke-linejoin="round" opacity="0.55"/><polyline points="511.1,333.9 513.9,337.5" stroke="#ffffff" stroke-width="0.5" fill="none" stroke-linecap="round" stroke-linejoin="round" opacity="0.55"/><polyline points="556.3,288.0 563.0,287.9" stroke="#c4c4c4" stroke-width="0.5" fill="none" stroke-linecap="round" stroke-linejoin="round" opacity="0.55"/><polyline points="520.2,365.9 520.9,370.6" stroke="#f0d2a0" stroke-width="0.5" fill="none" stroke-linecap="round" stroke-linejoin="round" opacity="0.55"/><polyline points="484.1,288.5 485.2,296.3" stroke="#ffffff" stroke-width="0.5" fill="none" stroke-linecap="round" stroke-linejoin="round" opacity="0.55"/><polyline points="479.2,354.4 480.2,360.6" stroke="#c4c4c4" stroke-width="0.5" fill="none" stroke-linecap="round" stroke-linejoin="round" opacity="0.55"/><polyline points="539.2,288.5 534.2,290.1" stroke="#ffffff" stroke-width="0.5" fill="none" stroke-linecap="round" stroke-linejoin="round" opacity="0.55"/><polyline points="542.5,362.2 538.6,366.5" stroke="#f0d2a0" stroke-width="0.5" fill="none" stroke-linecap="round" stroke-linejoin="round" opacity="0.55"/><polyline points="468.5,318.3 473.8,319.8" stroke="#ffffff" stroke-width="0.5" fill="none" stroke-linecap="round" stroke-linejoin="round" opacity="0.55"/><polyline points="508.6,338.1 509.3,343.8" stroke="#ffffff" stroke-width="0.5" fill="none" stroke-linecap="round" stroke-linejoin="round" opacity="0.55"/><polyline points="468.8,347.8 470.2,350.8" stroke="#ffffff" stroke-width="0.5" fill="none" stroke-linecap="round" stroke-linejoin="round" opacity="0.55"/><polyline points="478.2,296.4 473.2,300.6" stroke="#ffffff" stroke-width="0.5" fill="none" stroke-linecap="round" stroke-linejoin="round" opacity="0.55"/><polyline points="528.4,358.2 532.8,361.9" stroke="#c4c4c4" stroke-width="0.5" fill="none" stroke-linecap="round" stroke-linejoin="round" opacity="0.55"/><polyline points="550.9,343.5 553.3,345.4" stroke="#c4c4c4" stroke-width="0.5" fill="none" stroke-linecap="round" stroke-linejoin="round" opacity="0.55"/><polyline points="515.1,320.7 513.5,325.2" stroke="#c4c4c4" stroke-width="0.5" fill="none" stroke-linecap="round" stroke-linejoin="round" opacity="0.55"/><polyline points="464.3,323.3 471.2,322.7" stroke="#c4c4c4" stroke-width="0.5" fill="none" stroke-linecap="round" stroke-linejoin="round" opacity="0.55"/><polyline points="483.3,284.9 478.5,286.8" stroke="#ffffff" stroke-width="0.5" fill="none" stroke-linecap="round" stroke-linejoin="round" opacity="0.55"/><polyline points="512.0,272.0 512.6,276.2" stroke="#c4c4c4" stroke-width="0.5" fill="none" stroke-linecap="round" stroke-linejoin="round" opacity="0.55"/><polyline points="559.5,336.3 552.3,337.1" stroke="#c4c4c4" stroke-width="0.5" fill="none" stroke-linecap="round" stroke-linejoin="round" opacity="0.55"/><polyline points="494.1,280.3 499.2,282.3" stroke="#ffffff" stroke-width="0.5" fill="none" stroke-linecap="round" stroke-linejoin="round" opacity="0.55"/><polyline points="461.2,331.0 455.5,333.5" stroke="#f0d2a0" stroke-width="0.5" fill="none" stroke-linecap="round" stroke-linejoin="round" opacity="0.55"/><polyline points="571.0,338.8 570.7,344.1" stroke="#ffffff" stroke-width="0.5" fill="none" stroke-linecap="round" stroke-linejoin="round" opacity="0.55"/><polyline points="496.4,321.1 496.9,325.6" stroke="#ffffff" stroke-width="0.5" fill="none" stroke-linecap="round" stroke-linejoin="round" opacity="0.55"/><polyline points="478.0,352.5 481.9,357.9" stroke="#f0d2a0" stroke-width="0.5" fill="none" stroke-linecap="round" stroke-linejoin="round" opacity="0.55"/><polyline points="493.3,316.2 494.1,320.3" stroke="#ffffff" stroke-width="0.5" fill="none" stroke-linecap="round" stroke-linejoin="round" opacity="0.55"/><polyline points="529.6,342.5 527.8,345.8" stroke="#c4c4c4" stroke-width="0.5" fill="none" stroke-linecap="round" stroke-linejoin="round" opacity="0.55"/><polyline points="495.9,325.9 495.2,331.8" stroke="#ffffff" stroke-width="0.5" fill="none" stroke-linecap="round" stroke-linejoin="round" opacity="0.55"/><polyline points="463.7,285.5 458.8,286.8" stroke="#c4c4c4" stroke-width="0.5" fill="none" stroke-linecap="round" stroke-linejoin="round" opacity="0.55"/><polyline points="549.4,349.6 549.7,353.8" stroke="#c4c4c4" stroke-width="0.5" fill="none" stroke-linecap="round" stroke-linejoin="round" opacity="0.55"/><polyline points="496.6,356.1 492.5,357.0" stroke="#c4c4c4" stroke-width="0.5" fill="none" stroke-linecap="round" stroke-linejoin="round" opacity="0.55"/><polyline points="459.4,300.4 456.7,304.1" stroke="#c4c4c4" stroke-width="0.5" fill="none" stroke-linecap="round" stroke-linejoin="round" opacity="0.55"/><polyline points="470.5,286.2 466.5,292.4" stroke="#f0d2a0" stroke-width="0.5" fill="none" stroke-linecap="round" stroke-linejoin="round" opacity="0.55"/><polyline points="522.0,296.7 525.8,296.6" stroke="#c4c4c4" stroke-width="0.5" fill="none" stroke-linecap="round" stroke-linejoin="round" opacity="0.55"/><polyline points="483.0,325.8 488.0,329.5" stroke="#c4c4c4" stroke-width="0.5" fill="none" stroke-linecap="round" stroke-linejoin="round" opacity="0.55"/><polyline points="523.8,272.6 520.2,274.3" stroke="#f0d2a0" stroke-width="0.5" fill="none" stroke-linecap="round" stroke-linejoin="round" opacity="0.55"/><polyline points="495.9,347.6 500.6,349.7" stroke="#c4c4c4" stroke-width="0.5" fill="none" stroke-linecap="round" stroke-linejoin="round" opacity="0.55"/><polyline points="483.7,266.5 486.5,269.1" stroke="#ffffff" stroke-width="0.5" fill="none" stroke-linecap="round" stroke-linejoin="round" opacity="0.55"/><polyline points="478.9,307.2 475.3,309.0" stroke="#ffffff" stroke-width="0.5" fill="none" stroke-linecap="round" stroke-linejoin="round" opacity="0.55"/><polyline points="476.2,343.3 469.8,347.8" stroke="#ffffff" stroke-width="0.5" fill="none" stroke-linecap="round" stroke-linejoin="round" opacity="0.55"/><polyline points="551.6,358.6 553.7,362.8" stroke="#c4c4c4" stroke-width="0.5" fill="none" stroke-linecap="round" stroke-linejoin="round" opacity="0.55"/><polyline points="518.0,358.5 524.2,358.7" stroke="#c4c4c4" stroke-width="0.5" fill="none" stroke-linecap="round" stroke-linejoin="round" opacity="0.55"/><polyline points="511.8,329.9 514.8,336.2" stroke="#f0d2a0" stroke-width="0.5" fill="none" stroke-linecap="round" stroke-linejoin="round" opacity="0.55"/><polyline points="527.4,347.8 523.7,354.8" stroke="#f0d2a0" stroke-width="0.5" fill="none" stroke-linecap="round" stroke-linejoin="round" opacity="0.55"/><polyline points="491.0,334.6 488.0,338.1" stroke="#c4c4c4" stroke-width="0.5" fill="none" stroke-linecap="round" stroke-linejoin="round" opacity="0.55"/><polyline points="477.9,321.2 481.2,327.6" stroke="#f0d2a0" stroke-width="0.5" fill="none" stroke-linecap="round" stroke-linejoin="round" opacity="0.55"/><polyline points="494.3,337.5 494.9,344.8" stroke="#c4c4c4" stroke-width="0.5" fill="none" stroke-linecap="round" stroke-linejoin="round" opacity="0.55"/><polyline points="480.3,330.8 475.3,335.8" stroke="#c4c4c4" stroke-width="0.5" fill="none" stroke-linecap="round" stroke-linejoin="round" opacity="0.55"/><polyline points="532.2,323.3 526.3,326.3" stroke="#c4c4c4" stroke-width="0.5" fill="none" stroke-linecap="round" stroke-linejoin="round" opacity="0.55"/><polyline points="510.5,334.8 515.8,339.2" stroke="#c4c4c4" stroke-width="0.5" fill="none" stroke-linecap="round" stroke-linejoin="round" opacity="0.55"/><polyline points="501.3,369.7 494.8,373.8" stroke="#ffffff" stroke-width="0.5" fill="none" stroke-linecap="round" stroke-linejoin="round" opacity="0.55"/><polyline points="518.8,286.1 521.5,292.5" stroke="#c4c4c4" stroke-width="0.5" fill="none" stroke-linecap="round" stroke-linejoin="round" opacity="0.55"/><polyline points="542.7,361.5 543.9,368.8" stroke="#c4c4c4" stroke-width="0.5" fill="none" stroke-linecap="round" stroke-linejoin="round" opacity="0.55"/><polyline points="547.7,290.2 544.2,297.3" stroke="#c4c4c4" stroke-width="0.5" fill="none" stroke-linecap="round" stroke-linejoin="round" opacity="0.55"/><polyline points="562.8,306.0 566.9,305.9" stroke="#ffffff" stroke-width="0.5" fill="none" stroke-linecap="round" stroke-linejoin="round" opacity="0.55"/><polyline points="460.0,333.7 464.1,336.7" stroke="#f0d2a0" stroke-width="0.5" fill="none" stroke-linecap="round" stroke-linejoin="round" opacity="0.55"/><polyline points="502.4,363.3 505.8,370.2" stroke="#ffffff" stroke-width="0.5" fill="none" stroke-linecap="round" stroke-linejoin="round" opacity="0.55"/><polyline points="484.3,310.8 485.4,314.9" stroke="#f0d2a0" stroke-width="0.5" fill="none" stroke-linecap="round" stroke-linejoin="round" opacity="0.55"/><polyline points="531.1,296.2 530.1,304.1" stroke="#c4c4c4" stroke-width="0.5" fill="none" stroke-linecap="round" stroke-linejoin="round" opacity="0.55"/><polyline points="510.7,364.9 510.6,371.7" stroke="#c4c4c4" stroke-width="0.5" fill="none" stroke-linecap="round" stroke-linejoin="round" opacity="0.55"/><polyline points="559.3,291.0 554.9,292.3" stroke="#f0d2a0" stroke-width="0.5" fill="none" stroke-linecap="round" stroke-linejoin="round" opacity="0.55"/><polyline points="478.1,269.6 483.7,273.7" stroke="#f0d2a0" stroke-width="0.5" fill="none" stroke-linecap="round" stroke-linejoin="round" opacity="0.55"/><polyline points="474.4,357.3 478.7,364.1" stroke="#ffffff" stroke-width="0.5" fill="none" stroke-linecap="round" stroke-linejoin="round" opacity="0.55"/><polyline points="468.4,296.7 472.8,300.1" stroke="#c4c4c4" stroke-width="0.5" fill="none" stroke-linecap="round" stroke-linejoin="round" opacity="0.55"/><polyline points="509.1,306.9 505.3,310.2" stroke="#ffffff" stroke-width="0.5" fill="none" stroke-linecap="round" stroke-linejoin="round" opacity="0.55"/><polyline points="524.0,285.7 530.1,285.3" stroke="#c4c4c4" stroke-width="0.5" fill="none" stroke-linecap="round" stroke-linejoin="round" opacity="0.55"/><polyline points="522.7,339.4 528.6,342.6" stroke="#c4c4c4" stroke-width="0.5" fill="none" stroke-linecap="round" stroke-linejoin="round" opacity="0.55"/><polyline points="459.9,275.9 461.1,283.6" stroke="#ffffff" stroke-width="0.5" fill="none" stroke-linecap="round" stroke-linejoin="round" opacity="0.55"/><polyline points="474.0,338.0 470.5,339.3" stroke="#ffffff" stroke-width="0.5" fill="none" stroke-linecap="round" stroke-linejoin="round" opacity="0.55"/><polyline points="517.2,354.7 524.9,355.5" stroke="#c4c4c4" stroke-width="0.5" fill="none" stroke-linecap="round" stroke-linejoin="round" opacity="0.55"/><polyline points="479.5,271.8 486.1,272.2" stroke="#ffffff" stroke-width="0.5" fill="none" stroke-linecap="round" stroke-linejoin="round" opacity="0.55"/><polyline points="492.1,268.5 495.2,272.7" stroke="#f0d2a0" stroke-width="0.5" fill="none" stroke-linecap="round" stroke-linejoin="round" opacity="0.55"/><polyline points="540.3,307.1 537.8,311.0" stroke="#c4c4c4" stroke-width="0.5" fill="none" stroke-linecap="round" stroke-linejoin="round" opacity="0.55"/><polyline points="499.6,305.6 499.3,310.7" stroke="#ffffff" stroke-width="0.5" fill="none" stroke-linecap="round" stroke-linejoin="round" opacity="0.55"/><polyline points="481.4,318.1 473.6,319.7" stroke="#c4c4c4" stroke-width="0.5" fill="none" stroke-linecap="round" stroke-linejoin="round" opacity="0.55"/><polyline points="553.5,335.7 550.2,336.2" stroke="#ffffff" stroke-width="0.5" fill="none" stroke-linecap="round" stroke-linejoin="round" opacity="0.55"/><polyline points="501.9,324.3 498.0,329.4" stroke="#c4c4c4" stroke-width="0.5" fill="none" stroke-linecap="round" stroke-linejoin="round" opacity="0.55"/><polyline points="508.0,326.4 504.8,330.7" stroke="#f0d2a0" stroke-width="0.5" fill="none" stroke-linecap="round" stroke-linejoin="round" opacity="0.55"/><polyline points="480.8,332.0 477.4,337.7" stroke="#ffffff" stroke-width="0.5" fill="none" stroke-linecap="round" stroke-linejoin="round" opacity="0.55"/><polyline points="500.4,320.8 505.3,324.5" stroke="#c4c4c4" stroke-width="0.5" fill="none" stroke-linecap="round" stroke-linejoin="round" opacity="0.55"/><polyline points="565.6,346.7 562.4,349.5" stroke="#c4c4c4" stroke-width="0.5" fill="none" stroke-linecap="round" stroke-linejoin="round" opacity="0.55"/><polyline points="516.2,315.5 517.9,319.2" stroke="#c4c4c4" stroke-width="0.5" fill="none" stroke-linecap="round" stroke-linejoin="round" opacity="0.55"/><polyline points="516.4,321.0 516.9,328.0" stroke="#c4c4c4" stroke-width="0.5" fill="none" stroke-linecap="round" stroke-linejoin="round" opacity="0.55"/><polyline points="553.1,313.7 559.3,314.3" stroke="#c4c4c4" stroke-width="0.5" fill="none" stroke-linecap="round" stroke-linejoin="round" opacity="0.55"/><polyline points="554.4,352.3 554.5,355.9" stroke="#f0d2a0" stroke-width="0.5" fill="none" stroke-linecap="round" stroke-linejoin="round" opacity="0.55"/><polyline points="464.6,302.5 458.4,305.6" stroke="#ffffff" stroke-width="0.5" fill="none" stroke-linecap="round" stroke-linejoin="round" opacity="0.55"/><polyline points="485.8,295.4 491.0,296.3" stroke="#f0d2a0" stroke-width="0.5" fill="none" stroke-linecap="round" stroke-linejoin="round" opacity="0.55"/><polyline points="541.9,282.8 547.2,284.5" stroke="#c4c4c4" stroke-width="0.5" fill="none" stroke-linecap="round" stroke-linejoin="round" opacity="0.55"/><polyline points="512.1,335.3 506.6,337.9" stroke="#f0d2a0" stroke-width="0.5" fill="none" stroke-linecap="round" stroke-linejoin="round" opacity="0.55"/><polyline points="483.1,324.1 485.5,325.9" stroke="#c4c4c4" stroke-width="0.5" fill="none" stroke-linecap="round" stroke-linejoin="round" opacity="0.55"/><polyline points="489.7,322.8 495.3,328.0" stroke="#f0d2a0" stroke-width="0.5" fill="none" stroke-linecap="round" stroke-linejoin="round" opacity="0.55"/><polyline points="463.2,332.7 466.0,339.4" stroke="#c4c4c4" stroke-width="0.5" fill="none" stroke-linecap="round" stroke-linejoin="round" opacity="0.55"/><polyline points="528.0,304.1 526.3,306.9" stroke="#ffffff" stroke-width="0.5" fill="none" stroke-linecap="round" stroke-linejoin="round" opacity="0.55"/><polyline points="539.6,295.9 534.7,296.7" stroke="#c4c4c4" stroke-width="0.5" fill="none" stroke-linecap="round" stroke-linejoin="round" opacity="0.55"/><polyline points="481.4,355.8 478.2,357.6" stroke="#c4c4c4" stroke-width="0.5" fill="none" stroke-linecap="round" stroke-linejoin="round" opacity="0.55"/><polyline points="459.8,285.9 466.6,288.5" stroke="#f0d2a0" stroke-width="0.5" fill="none" stroke-linecap="round" stroke-linejoin="round" opacity="0.55"/><polyline points="500.4,308.8 508.0,308.5" stroke="#f0d2a0" stroke-width="0.5" fill="none" stroke-linecap="round" stroke-linejoin="round" opacity="0.55"/><polyline points="567.0,339.7 564.8,344.4" stroke="#ffffff" stroke-width="0.5" fill="none" stroke-linecap="round" stroke-linejoin="round" opacity="0.55"/><polyline points="506.1,317.1 511.4,318.7" stroke="#c4c4c4" stroke-width="0.5" fill="none" stroke-linecap="round" stroke-linejoin="round" opacity="0.55"/><polyline points="501.4,268.4 495.6,271.1" stroke="#f0d2a0" stroke-width="0.5" fill="none" stroke-linecap="round" stroke-linejoin="round" opacity="0.55"/><polyline points="546.7,276.8 550.7,277.7" stroke="#ffffff" stroke-width="0.5" fill="none" stroke-linecap="round" stroke-linejoin="round" opacity="0.55"/><polyline points="464.5,273.5 458.2,276.0" stroke="#c4c4c4" stroke-width="0.5" fill="none" stroke-linecap="round" stroke-linejoin="round" opacity="0.55"/><polyline points="539.5,316.1 537.0,318.3" stroke="#c4c4c4" stroke-width="0.5" fill="none" stroke-linecap="round" stroke-linejoin="round" opacity="0.55"/><polyline points="493.1,320.0 490.4,321.4" stroke="#c4c4c4" stroke-width="0.5" fill="none" stroke-linecap="round" stroke-linejoin="round" opacity="0.55"/><polyline points="462.7,305.4 466.4,310.5" stroke="#f0d2a0" stroke-width="0.5" fill="none" stroke-linecap="round" stroke-linejoin="round" opacity="0.55"/><polyline points="535.8,297.1 532.7,300.1" stroke="#c4c4c4" stroke-width="0.5" fill="none" stroke-linecap="round" stroke-linejoin="round" opacity="0.55"/><polyline points="489.5,278.2 491.1,281.9" stroke="#f0d2a0" stroke-width="0.5" fill="none" stroke-linecap="round" stroke-linejoin="round" opacity="0.55"/><polyline points="539.3,279.3 545.1,284.3" stroke="#ffffff" stroke-width="0.5" fill="none" stroke-linecap="round" stroke-linejoin="round" opacity="0.55"/><polyline points="479.0,311.4 479.0,315.4" stroke="#f0d2a0" stroke-width="0.5" fill="none" stroke-linecap="round" stroke-linejoin="round" opacity="0.55"/><polyline points="501.9,342.6 503.6,346.2" stroke="#f0d2a0" stroke-width="0.5" fill="none" stroke-linecap="round" stroke-linejoin="round" opacity="0.55"/><polyline points="552.2,317.7 549.1,318.3" stroke="#c4c4c4" stroke-width="0.5" fill="none" stroke-linecap="round" stroke-linejoin="round" opacity="0.55"/><polyline points="513.3,336.8 516.3,342.4" stroke="#c4c4c4" stroke-width="0.5" fill="none" stroke-linecap="round" stroke-linejoin="round" opacity="0.55"/><polyline points="477.4,274.9 480.5,276.5" stroke="#f0d2a0" stroke-width="0.5" fill="none" stroke-linecap="round" stroke-linejoin="round" opacity="0.55"/><polyline points="479.5,354.0 475.1,358.8" stroke="#c4c4c4" stroke-width="0.5" fill="none" stroke-linecap="round" stroke-linejoin="round" opacity="0.55"/><polyline points="468.4,281.3 468.1,286.5" stroke="#c4c4c4" stroke-width="0.5" fill="none" stroke-linecap="round" stroke-linejoin="round" opacity="0.55"/><polyline points="539.0,341.7 542.1,344.9" stroke="#c4c4c4" stroke-width="0.5" fill="none" stroke-linecap="round" stroke-linejoin="round" opacity="0.55"/><polyline points="470.7,350.3 464.4,355.2" stroke="#c4c4c4" stroke-width="0.5" fill="none" stroke-linecap="round" stroke-linejoin="round" opacity="0.55"/><polyline points="498.7,333.2 494.7,334.1" stroke="#c4c4c4" stroke-width="0.5" fill="none" stroke-linecap="round" stroke-linejoin="round" opacity="0.55"/><polyline points="509.1,342.6 507.1,347.4" stroke="#c4c4c4" stroke-width="0.5" fill="none" stroke-linecap="round" stroke-linejoin="round" opacity="0.55"/><polyline points="516.7,295.4 513.1,298.5" stroke="#ffffff" stroke-width="0.5" fill="none" stroke-linecap="round" stroke-linejoin="round" opacity="0.55"/><polyline points="476.7,294.2 472.4,295.6" stroke="#ffffff" stroke-width="0.5" fill="none" stroke-linecap="round" stroke-linejoin="round" opacity="0.55"/><polyline points="476.8,314.8 477.6,321.6" stroke="#c4c4c4" stroke-width="0.5" fill="none" stroke-linecap="round" stroke-linejoin="round" opacity="0.55"/><polyline points="456.0,328.7 461.9,333.8" stroke="#c4c4c4" stroke-width="0.5" fill="none" stroke-linecap="round" stroke-linejoin="round" opacity="0.55"/><polyline points="532.8,269.4 530.1,273.2" stroke="#c4c4c4" stroke-width="0.5" fill="none" stroke-linecap="round" stroke-linejoin="round" opacity="0.55"/><polyline points="543.3,283.3 546.5,289.5" stroke="#f0d2a0" stroke-width="0.5" fill="none" stroke-linecap="round" stroke-linejoin="round" opacity="0.55"/><polyline points="463.8,323.6 457.4,326.3" stroke="#ffffff" stroke-width="0.5" fill="none" stroke-linecap="round" stroke-linejoin="round" opacity="0.55"/><polyline points="456.1,319.4 456.9,322.8" stroke="#c4c4c4" stroke-width="0.5" fill="none" stroke-linecap="round" stroke-linejoin="round" opacity="0.55"/><polyline points="461.4,342.6 466.5,346.9" stroke="#ffffff" stroke-width="0.5" fill="none" stroke-linecap="round" stroke-linejoin="round" opacity="0.55"/><polyline points="492.8,355.0 489.2,361.4" stroke="#c4c4c4" stroke-width="0.5" fill="none" stroke-linecap="round" stroke-linejoin="round" opacity="0.55"/><polyline points="466.4,317.6 472.1,318.1" stroke="#c4c4c4" stroke-width="0.5" fill="none" stroke-linecap="round" stroke-linejoin="round" opacity="0.55"/><polyline points="472.2,321.8 474.3,326.9" stroke="#c4c4c4" stroke-width="0.5" fill="none" stroke-linecap="round" stroke-linejoin="round" opacity="0.55"/><polyline points="501.7,286.0 501.8,289.6" stroke="#c4c4c4" stroke-width="0.5" fill="none" stroke-linecap="round" stroke-linejoin="round" opacity="0.55"/><polyline points="568.0,316.7 562.0,320.2" stroke="#c4c4c4" stroke-width="0.5" fill="none" stroke-linecap="round" stroke-linejoin="round" opacity="0.55"/><polyline points="462.7,282.5 469.8,283.6" stroke="#ffffff" stroke-width="0.5" fill="none" stroke-linecap="round" stroke-linejoin="round" opacity="0.55"/><polyline points="487.9,360.2 484.9,361.8" stroke="#c4c4c4" stroke-width="0.5" fill="none" stroke-linecap="round" stroke-linejoin="round" opacity="0.55"/><polyline points="525.2,348.7 531.3,351.2" stroke="#ffffff" stroke-width="0.5" fill="none" stroke-linecap="round" stroke-linejoin="round" opacity="0.55"/><polyline points="457.1,330.8 461.5,335.4" stroke="#f0d2a0" stroke-width="0.5" fill="none" stroke-linecap="round" stroke-linejoin="round" opacity="0.55"/><polyline points="524.8,283.7 521.5,286.9" stroke="#ffffff" stroke-width="0.5" fill="none" stroke-linecap="round" stroke-linejoin="round" opacity="0.55"/><polyline points="462.8,290.4 465.3,296.6" stroke="#c4c4c4" stroke-width="0.5" fill="none" stroke-linecap="round" stroke-linejoin="round" opacity="0.55"/><polyline points="546.7,286.0 550.7,292.5" stroke="#ffffff" stroke-width="0.5" fill="none" stroke-linecap="round" stroke-linejoin="round" opacity="0.55"/><polyline points="511.0,317.7 517.5,320.1" stroke="#ffffff" stroke-width="0.5" fill="none" stroke-linecap="round" stroke-linejoin="round" opacity="0.55"/><polyline points="476.5,331.5 473.8,338.2" stroke="#c4c4c4" stroke-width="0.5" fill="none" stroke-linecap="round" stroke-linejoin="round" opacity="0.55"/><polyline points="523.7,350.8 521.5,355.8" stroke="#c4c4c4" stroke-width="0.5" fill="none" stroke-linecap="round" stroke-linejoin="round" opacity="0.55"/><polyline points="563.3,344.5 557.2,348.2" stroke="#f0d2a0" stroke-width="0.5" fill="none" stroke-linecap="round" stroke-linejoin="round" opacity="0.55"/><polyline points="553.5,348.7 557.2,355.1" stroke="#ffffff" stroke-width="0.5" fill="none" stroke-linecap="round" stroke-linejoin="round" opacity="0.55"/><polyline points="550.7,345.1 553.2,351.9" stroke="#f0d2a0" stroke-width="0.5" fill="none" stroke-linecap="round" stroke-linejoin="round" opacity="0.55"/><polyline points="521.1,358.8 526.9,359.6" stroke="#f0d2a0" stroke-width="0.5" fill="none" stroke-linecap="round" stroke-linejoin="round" opacity="0.55"/><polyline points="549.6,337.7 545.4,344.2" stroke="#ffffff" stroke-width="0.5" fill="none" stroke-linecap="round" stroke-linejoin="round" opacity="0.55"/><polyline points="480.1,336.6 473.2,337.3" stroke="#f0d2a0" stroke-width="0.5" fill="none" stroke-linecap="round" stroke-linejoin="round" opacity="0.55"/><polyline points="512.2,265.8 510.2,268.7" stroke="#c4c4c4" stroke-width="0.5" fill="none" stroke-linecap="round" stroke-linejoin="round" opacity="0.55"/><polyline points="508.3,300.2 511.0,303.2" stroke="#f0d2a0" stroke-width="0.5" fill="none" stroke-linecap="round" stroke-linejoin="round" opacity="0.55"/><polyline points="528.2,295.6 530.8,297.8" stroke="#f0d2a0" stroke-width="0.5" fill="none" stroke-linecap="round" stroke-linejoin="round" opacity="0.55"/><polyline points="502.1,322.1 502.4,326.3" stroke="#ffffff" stroke-width="0.5" fill="none" stroke-linecap="round" stroke-linejoin="round" opacity="0.55"/><polyline points="498.2,360.8 500.1,365.4" stroke="#c4c4c4" stroke-width="0.5" fill="none" stroke-linecap="round" stroke-linejoin="round" opacity="0.55"/><polyline points="472.6,302.0 469.1,308.1" stroke="#c4c4c4" stroke-width="0.5" fill="none" stroke-linecap="round" stroke-linejoin="round" opacity="0.55"/><polyline points="569.6,318.7 569.2,326.7" stroke="#c4c4c4" stroke-width="0.5" fill="none" stroke-linecap="round" stroke-linejoin="round" opacity="0.55"/><polyline points="500.1,265.0 506.6,268.3" stroke="#f0d2a0" stroke-width="0.5" fill="none" stroke-linecap="round" stroke-linejoin="round" opacity="0.55"/><polyline points="521.5,335.0 527.4,338.1" stroke="#f0d2a0" stroke-width="0.5" fill="none" stroke-linecap="round" stroke-linejoin="round" opacity="0.55"/><polyline points="468.6,345.4 467.0,349.3" stroke="#c4c4c4" stroke-width="0.5" fill="none" stroke-linecap="round" stroke-linejoin="round" opacity="0.55"/><polyline points="506.6,367.4 502.9,370.5" stroke="#ffffff" stroke-width="0.5" fill="none" stroke-linecap="round" stroke-linejoin="round" opacity="0.55"/><polyline points="563.6,317.8 568.4,317.5" stroke="#ffffff" stroke-width="0.5" fill="none" stroke-linecap="round" stroke-linejoin="round" opacity="0.55"/><polyline points="520.6,312.4 520.8,319.1" stroke="#f0d2a0" stroke-width="0.5" fill="none" stroke-linecap="round" stroke-linejoin="round" opacity="0.55"/><polyline points="456.3,299.1 459.2,301.5" stroke="#ffffff" stroke-width="0.5" fill="none" stroke-linecap="round" stroke-linejoin="round" opacity="0.55"/><polyline points="529.2,290.1 535.9,291.1" stroke="#f0d2a0" stroke-width="0.5" fill="none" stroke-linecap="round" stroke-linejoin="round" opacity="0.55"/><polyline points="531.8,350.9 528.1,356.1" stroke="#c4c4c4" stroke-width="0.5" fill="none" stroke-linecap="round" stroke-linejoin="round" opacity="0.55"/><polyline points="537.0,294.0 533.4,295.3" stroke="#ffffff" stroke-width="0.5" fill="none" stroke-linecap="round" stroke-linejoin="round" opacity="0.55"/><polyline points="549.6,301.5 546.0,302.1" stroke="#ffffff" stroke-width="0.5" fill="none" stroke-linecap="round" stroke-linejoin="round" opacity="0.55"/><polyline points="471.9,343.7 473.5,347.2" stroke="#c4c4c4" stroke-width="0.5" fill="none" stroke-linecap="round" stroke-linejoin="round" opacity="0.55"/><polyline points="496.3,338.9 494.4,342.8" stroke="#c4c4c4" stroke-width="0.5" fill="none" stroke-linecap="round" stroke-linejoin="round" opacity="0.55"/><polyline points="566.1,307.5 570.4,312.3" stroke="#f0d2a0" stroke-width="0.5" fill="none" stroke-linecap="round" stroke-linejoin="round" opacity="0.55"/><polyline points="549.6,315.0 546.3,316.3" stroke="#f0d2a0" stroke-width="0.5" fill="none" stroke-linecap="round" stroke-linejoin="round" opacity="0.55"/><polyline points="530.4,348.1 531.7,352.5" stroke="#f0d2a0" stroke-width="0.5" fill="none" stroke-linecap="round" stroke-linejoin="round" opacity="0.55"/><polyline points="533.3,355.6 538.4,355.9" stroke="#c4c4c4" stroke-width="0.5" fill="none" stroke-linecap="round" stroke-linejoin="round" opacity="0.55"/><polyline points="540.2,306.7 547.3,307.1" stroke="#ffffff" stroke-width="0.5" fill="none" stroke-linecap="round" stroke-linejoin="round" opacity="0.55"/><polyline points="521.7,302.2 524.6,309.3" stroke="#ffffff" stroke-width="0.5" fill="none" stroke-linecap="round" stroke-linejoin="round" opacity="0.55"/><polyline points="526.1,353.5 532.6,356.6" stroke="#c4c4c4" stroke-width="0.5" fill="none" stroke-linecap="round" stroke-linejoin="round" opacity="0.55"/><polyline points="531.3,368.5 537.1,370.7" stroke="#f0d2a0" stroke-width="0.5" fill="none" stroke-linecap="round" stroke-linejoin="round" opacity="0.55"/><polyline points="555.5,349.3 551.7,355.4" stroke="#c4c4c4" stroke-width="0.5" fill="none" stroke-linecap="round" stroke-linejoin="round" opacity="0.55"/><polyline points="495.0,284.1 487.8,285.5" stroke="#f0d2a0" stroke-width="0.5" fill="none" stroke-linecap="round" stroke-linejoin="round" opacity="0.55"/><polyline points="534.3,361.4 536.3,364.5" stroke="#f0d2a0" stroke-width="0.5" fill="none" stroke-linecap="round" stroke-linejoin="round" opacity="0.55"/><polyline points="522.6,289.4 523.2,294.6" stroke="#c4c4c4" stroke-width="0.5" fill="none" stroke-linecap="round" stroke-linejoin="round" opacity="0.55"/><polyline points="548.6,337.4 551.3,344.1" stroke="#c4c4c4" stroke-width="0.5" fill="none" stroke-linecap="round" stroke-linejoin="round" opacity="0.55"/><polyline points="513.6,361.0 507.9,365.9" stroke="#c4c4c4" stroke-width="0.5" fill="none" stroke-linecap="round" stroke-linejoin="round" opacity="0.55"/><polyline points="531.6,358.6 534.2,362.8" stroke="#c4c4c4" stroke-width="0.5" fill="none" stroke-linecap="round" stroke-linejoin="round" opacity="0.55"/><polyline points="526.7,361.6 529.2,365.5" stroke="#ffffff" stroke-width="0.5" fill="none" stroke-linecap="round" stroke-linejoin="round" opacity="0.55"/><polyline points="496.2,339.5 498.7,341.8" stroke="#f0d2a0" stroke-width="0.5" fill="none" stroke-linecap="round" stroke-linejoin="round" opacity="0.55"/><polyline points="529.4,279.0 533.3,281.0" stroke="#ffffff" stroke-width="0.5" fill="none" stroke-linecap="round" stroke-linejoin="round" opacity="0.55"/><polyline points="465.6,288.2 467.9,293.9" stroke="#c4c4c4" stroke-width="0.5" fill="none" stroke-linecap="round" stroke-linejoin="round" opacity="0.55"/><polyline points="478.8,349.7 475.0,351.0" stroke="#ffffff" stroke-width="0.5" fill="none" stroke-linecap="round" stroke-linejoin="round" opacity="0.55"/><polyline points="479.4,282.7 484.1,288.0" stroke="#ffffff" stroke-width="0.5" fill="none" stroke-linecap="round" stroke-linejoin="round" opacity="0.55"/><polyline points="463.0,276.1 458.4,278.0" stroke="#ffffff" stroke-width="0.5" fill="none" stroke-linecap="round" stroke-linejoin="round" opacity="0.55"/><polyline points="460.8,315.6 457.9,317.9" stroke="#f0d2a0" stroke-width="0.5" fill="none" stroke-linecap="round" stroke-linejoin="round" opacity="0.55"/><polyline points="475.5,330.5 476.5,333.9" stroke="#c4c4c4" stroke-width="0.5" fill="none" stroke-linecap="round" stroke-linejoin="round" opacity="0.55"/><polyline points="549.2,344.3 550.1,351.1" stroke="#c4c4c4" stroke-width="0.5" fill="none" stroke-linecap="round" stroke-linejoin="round" opacity="0.55"/><polyline points="565.2,342.0 571.7,342.8" stroke="#f0d2a0" stroke-width="0.5" fill="none" stroke-linecap="round" stroke-linejoin="round" opacity="0.55"/><polyline points="540.8,332.1 543.2,335.6" stroke="#c4c4c4" stroke-width="0.5" fill="none" stroke-linecap="round" stroke-linejoin="round" opacity="0.55"/><polyline points="457.4,282.9 461.9,284.7" stroke="#f0d2a0" stroke-width="0.5" fill="none" stroke-linecap="round" stroke-linejoin="round" opacity="0.55"/><polyline points="547.0,301.0 550.6,307.4" stroke="#f0d2a0" stroke-width="0.5" fill="none" stroke-linecap="round" stroke-linejoin="round" opacity="0.55"/><polyline points="511.8,272.9 514.7,276.6" stroke="#c4c4c4" stroke-width="0.5" fill="none" stroke-linecap="round" stroke-linejoin="round" opacity="0.55"/><polyline points="556.5,321.1 554.7,324.9" stroke="#c4c4c4" stroke-width="0.5" fill="none" stroke-linecap="round" stroke-linejoin="round" opacity="0.55"/><polyline points="532.7,365.3 534.3,368.9" stroke="#f0d2a0" stroke-width="0.5" fill="none" stroke-linecap="round" stroke-linejoin="round" opacity="0.55"/><polyline points="547.3,342.4 545.7,345.9" stroke="#ffffff" stroke-width="0.5" fill="none" stroke-linecap="round" stroke-linejoin="round" opacity="0.55"/><polyline points="465.7,342.6 471.3,342.1" stroke="#ffffff" stroke-width="0.5" fill="none" stroke-linecap="round" stroke-linejoin="round" opacity="0.55"/><polyline points="509.0,268.7 501.6,269.4" stroke="#c4c4c4" stroke-width="0.5" fill="none" stroke-linecap="round" stroke-linejoin="round" opacity="0.55"/><polyline points="493.6,324.4 496.0,329.2" stroke="#c4c4c4" stroke-width="0.5" fill="none" stroke-linecap="round" stroke-linejoin="round" opacity="0.55"/><polyline points="563.4,305.3 559.9,305.7" stroke="#c4c4c4" stroke-width="0.5" fill="none" stroke-linecap="round" stroke-linejoin="round" opacity="0.55"/><polyline points="506.1,325.8 500.7,331.2" stroke="#ffffff" stroke-width="0.5" fill="none" stroke-linecap="round" stroke-linejoin="round" opacity="0.55"/><polyline points="532.2,357.1 526.8,362.9" stroke="#f0d2a0" stroke-width="0.5" fill="none" stroke-linecap="round" stroke-linejoin="round" opacity="0.55"/><polyline points="526.5,276.8 524.6,281.9" stroke="#c4c4c4" stroke-width="0.5" fill="none" stroke-linecap="round" stroke-linejoin="round" opacity="0.55"/><polyline points="550.4,360.0 547.4,360.5" stroke="#c4c4c4" stroke-width="0.5" fill="none" stroke-linecap="round" stroke-linejoin="round" opacity="0.55"/><polyline points="530.0,344.1 532.9,345.5" stroke="#c4c4c4" stroke-width="0.5" fill="none" stroke-linecap="round" stroke-linejoin="round" opacity="0.55"/><polyline points="458.0,290.0 458.0,297.6" stroke="#ffffff" stroke-width="0.5" fill="none" stroke-linecap="round" stroke-linejoin="round" opacity="0.55"/><polyline points="566.4,333.0 572.6,337.4" stroke="#f0d2a0" stroke-width="0.5" fill="none" stroke-linecap="round" stroke-linejoin="round" opacity="0.55"/><polyline points="539.3,284.2 540.0,291.2" stroke="#c4c4c4" stroke-width="0.5" fill="none" stroke-linecap="round" stroke-linejoin="round" opacity="0.55"/><polyline points="465.0,349.0 472.4,348.6" stroke="#ffffff" stroke-width="0.5" fill="none" stroke-linecap="round" stroke-linejoin="round" opacity="0.55"/><polyline points="520.4,352.7 515.1,354.2" stroke="#ffffff" stroke-width="0.5" fill="none" stroke-linecap="round" stroke-linejoin="round" opacity="0.55"/><polyline points="538.8,335.4 535.6,340.6" stroke="#ffffff" stroke-width="0.5" fill="none" stroke-linecap="round" stroke-linejoin="round" opacity="0.55"/><polyline points="520.9,286.5 517.0,287.1" stroke="#f0d2a0" stroke-width="0.5" fill="none" stroke-linecap="round" stroke-linejoin="round" opacity="0.55"/><polyline points="477.7,340.5 472.4,344.5" stroke="#ffffff" stroke-width="0.5" fill="none" stroke-linecap="round" stroke-linejoin="round" opacity="0.55"/><polyline points="519.2,302.1 519.0,305.5" stroke="#ffffff" stroke-width="0.5" fill="none" stroke-linecap="round" stroke-linejoin="round" opacity="0.55"/><polyline points="463.0,293.6 466.6,296.5" stroke="#c4c4c4" stroke-width="0.5" fill="none" stroke-linecap="round" stroke-linejoin="round" opacity="0.55"/><polyline points="461.2,276.3 455.6,279.4" stroke="#f0d2a0" stroke-width="0.5" fill="none" stroke-linecap="round" stroke-linejoin="round" opacity="0.55"/><polyline points="508.0,308.0 507.6,314.0" stroke="#ffffff" stroke-width="0.5" fill="none" stroke-linecap="round" stroke-linejoin="round" opacity="0.55"/><polyline points="540.2,267.3 535.5,271.7" stroke="#ffffff" stroke-width="0.5" fill="none" stroke-linecap="round" stroke-linejoin="round" opacity="0.55"/><polyline points="506.3,340.3 508.2,344.1" stroke="#ffffff" stroke-width="0.5" fill="none" stroke-linecap="round" stroke-linejoin="round" opacity="0.55"/><polyline points="491.9,274.2 488.2,277.9" stroke="#c4c4c4" stroke-width="0.5" fill="none" stroke-linecap="round" stroke-linejoin="round" opacity="0.55"/><polyline points="485.7,291.0 490.8,291.5" stroke="#c4c4c4" stroke-width="0.5" fill="none" stroke-linecap="round" stroke-linejoin="round" opacity="0.55"/><polyline points="546.8,347.7 554.0,349.3" stroke="#ffffff" stroke-width="0.5" fill="none" stroke-linecap="round" stroke-linejoin="round" opacity="0.55"/><polyline points="504.3,300.4 507.2,301.9" stroke="#c4c4c4" stroke-width="0.5" fill="none" stroke-linecap="round" stroke-linejoin="round" opacity="0.55"/><polyline points="478.0,269.8 477.4,276.1" stroke="#f0d2a0" stroke-width="0.5" fill="none" stroke-linecap="round" stroke-linejoin="round" opacity="0.55"/><polyline points="566.6,320.0 573.2,322.0" stroke="#c4c4c4" stroke-width="0.5" fill="none" stroke-linecap="round" stroke-linejoin="round" opacity="0.55"/><polyline points="487.3,361.9 489.4,364.2" stroke="#ffffff" stroke-width="0.5" fill="none" stroke-linecap="round" stroke-linejoin="round" opacity="0.55"/><polyline points="505.9,338.2 509.1,343.8" stroke="#c4c4c4" stroke-width="0.5" fill="none" stroke-linecap="round" stroke-linejoin="round" opacity="0.55"/><polyline points="494.0,367.7 494.3,371.2" stroke="#c4c4c4" stroke-width="0.5" fill="none" stroke-linecap="round" stroke-linejoin="round" opacity="0.55"/><polyline points="532.7,328.6 537.9,332.5" stroke="#ffffff" stroke-width="0.5" fill="none" stroke-linecap="round" stroke-linejoin="round" opacity="0.55"/><polyline points="517.9,271.9 515.1,273.8" stroke="#f0d2a0" stroke-width="0.5" fill="none" stroke-linecap="round" stroke-linejoin="round" opacity="0.55"/><polyline points="531.8,319.1 528.6,325.8" stroke="#ffffff" stroke-width="0.5" fill="none" stroke-linecap="round" stroke-linejoin="round" opacity="0.55"/><polyline points="483.4,306.6 484.7,313.0" stroke="#ffffff" stroke-width="0.5" fill="none" stroke-linecap="round" stroke-linejoin="round" opacity="0.55"/><polyline points="557.9,313.7 560.0,317.9" stroke="#c4c4c4" stroke-width="0.5" fill="none" stroke-linecap="round" stroke-linejoin="round" opacity="0.55"/><polyline points="592.8,282.0 596.2,285.3" stroke="#ffffff" stroke-width="0.5" fill="none" stroke-linecap="round" stroke-linejoin="round" opacity="0.55"/><polyline points="590.7,331.3 594.2,336.6" stroke="#c4c4c4" stroke-width="0.5" fill="none" stroke-linecap="round" stroke-linejoin="round" opacity="0.55"/><polyline points="585.5,305.4 592.6,306.3" stroke="#ffffff" stroke-width="0.5" fill="none" stroke-linecap="round" stroke-linejoin="round" opacity="0.55"/><polyline points="648.4,283.2 651.7,283.4" stroke="#c4c4c4" stroke-width="0.5" fill="none" stroke-linecap="round" stroke-linejoin="round" opacity="0.55"/><polyline points="645.1,279.2 648.4,282.7" stroke="#c4c4c4" stroke-width="0.5" fill="none" stroke-linecap="round" stroke-linejoin="round" opacity="0.55"/><polyline points="642.8,273.6 644.0,277.6" stroke="#f0d2a0" stroke-width="0.5" fill="none" stroke-linecap="round" stroke-linejoin="round" opacity="0.55"/><polyline points="657.8,340.2 662.8,344.9" stroke="#f0d2a0" stroke-width="0.5" fill="none" stroke-linecap="round" stroke-linejoin="round" opacity="0.55"/><polyline points="592.0,296.5 595.9,299.3" stroke="#f0d2a0" stroke-width="0.5" fill="none" stroke-linecap="round" stroke-linejoin="round" opacity="0.55"/><polyline points="638.5,273.4 636.3,278.8" stroke="#ffffff" stroke-width="0.5" fill="none" stroke-linecap="round" stroke-linejoin="round" opacity="0.55"/><polyline points="638.2,343.4 634.0,349.6" stroke="#ffffff" stroke-width="0.5" fill="none" stroke-linecap="round" stroke-linejoin="round" opacity="0.55"/><polyline points="602.9,286.9 602.4,292.1" stroke="#ffffff" stroke-width="0.5" fill="none" stroke-linecap="round" stroke-linejoin="round" opacity="0.55"/><polyline points="588.6,283.1 582.1,285.0" stroke="#f0d2a0" stroke-width="0.5" fill="none" stroke-linecap="round" stroke-linejoin="round" opacity="0.55"/><polyline points="643.0,284.6 645.9,287.2" stroke="#ffffff" stroke-width="0.5" fill="none" stroke-linecap="round" stroke-linejoin="round" opacity="0.55"/><polyline points="637.3,304.3 640.5,311.3" stroke="#f0d2a0" stroke-width="0.5" fill="none" stroke-linecap="round" stroke-linejoin="round" opacity="0.55"/><polyline points="655.7,272.4 659.2,275.1" stroke="#f0d2a0" stroke-width="0.5" fill="none" stroke-linecap="round" stroke-linejoin="round" opacity="0.55"/><polyline points="637.8,279.5 634.8,279.8" stroke="#f0d2a0" stroke-width="0.5" fill="none" stroke-linecap="round" stroke-linejoin="round" opacity="0.55"/><polyline points="657.8,330.4 658.3,336.7" stroke="#c4c4c4" stroke-width="0.5" fill="none" stroke-linecap="round" stroke-linejoin="round" opacity="0.55"/><polyline points="626.5,340.3 630.7,342.1" stroke="#c4c4c4" stroke-width="0.5" fill="none" stroke-linecap="round" stroke-linejoin="round" opacity="0.55"/><polyline points="658.8,320.0 665.1,321.6" stroke="#ffffff" stroke-width="0.5" fill="none" stroke-linecap="round" stroke-linejoin="round" opacity="0.55"/><polyline points="633.9,337.1 633.8,341.5" stroke="#c4c4c4" stroke-width="0.5" fill="none" stroke-linecap="round" stroke-linejoin="round" opacity="0.55"/><polyline points="669.9,314.2 667.3,321.4" stroke="#c4c4c4" stroke-width="0.5" fill="none" stroke-linecap="round" stroke-linejoin="round" opacity="0.55"/><polyline points="608.0,305.0 604.3,309.2" stroke="#c4c4c4" stroke-width="0.5" fill="none" stroke-linecap="round" stroke-linejoin="round" opacity="0.55"/><polyline points="654.5,282.6 656.6,289.5" stroke="#f0d2a0" stroke-width="0.5" fill="none" stroke-linecap="round" stroke-linejoin="round" opacity="0.55"/><polyline points="601.3,299.5 595.3,302.2" stroke="#c4c4c4" stroke-width="0.5" fill="none" stroke-linecap="round" stroke-linejoin="round" opacity="0.55"/><polyline points="608.6,336.0 610.8,339.1" stroke="#f0d2a0" stroke-width="0.5" fill="none" stroke-linecap="round" stroke-linejoin="round" opacity="0.55"/><polyline points="647.4,325.2 647.9,328.9" stroke="#c4c4c4" stroke-width="0.5" fill="none" stroke-linecap="round" stroke-linejoin="round" opacity="0.55"/><polyline points="596.4,308.9 602.4,308.9" stroke="#f0d2a0" stroke-width="0.5" fill="none" stroke-linecap="round" stroke-linejoin="round" opacity="0.55"/><polyline points="600.1,314.4 597.7,319.0" stroke="#c4c4c4" stroke-width="0.5" fill="none" stroke-linecap="round" stroke-linejoin="round" opacity="0.55"/><polyline points="612.3,345.0 617.2,345.8" stroke="#ffffff" stroke-width="0.5" fill="none" stroke-linecap="round" stroke-linejoin="round" opacity="0.55"/><polyline points="601.0,275.9 598.5,278.2" stroke="#ffffff" stroke-width="0.5" fill="none" stroke-linecap="round" stroke-linejoin="round" opacity="0.55"/><polyline points="633.6,307.0 635.9,312.1" stroke="#c4c4c4" stroke-width="0.5" fill="none" stroke-linecap="round" stroke-linejoin="round" opacity="0.55"/><polyline points="632.3,314.9 630.5,318.8" stroke="#c4c4c4" stroke-width="0.5" fill="none" stroke-linecap="round" stroke-linejoin="round" opacity="0.55"/><polyline points="657.2,299.4 661.4,306.0" stroke="#ffffff" stroke-width="0.5" fill="none" stroke-linecap="round" stroke-linejoin="round" opacity="0.55"/><polyline points="661.9,282.3 666.5,283.0" stroke="#c4c4c4" stroke-width="0.5" fill="none" stroke-linecap="round" stroke-linejoin="round" opacity="0.55"/><polyline points="661.4,325.0 662.5,331.1" stroke="#c4c4c4" stroke-width="0.5" fill="none" stroke-linecap="round" stroke-linejoin="round" opacity="0.55"/><polyline points="674.3,284.0 675.0,289.1" stroke="#f0d2a0" stroke-width="0.5" fill="none" stroke-linecap="round" stroke-linejoin="round" opacity="0.55"/><polyline points="607.9,327.2 604.5,330.6" stroke="#c4c4c4" stroke-width="0.5" fill="none" stroke-linecap="round" stroke-linejoin="round" opacity="0.55"/><polyline points="641.2,340.1 647.2,341.2" stroke="#f0d2a0" stroke-width="0.5" fill="none" stroke-linecap="round" stroke-linejoin="round" opacity="0.55"/><polyline points="693.1,313.6 690.7,317.8" stroke="#f0d2a0" stroke-width="0.5" fill="none" stroke-linecap="round" stroke-linejoin="round" opacity="0.55"/><polyline points="663.2,322.2 659.6,328.1" stroke="#c4c4c4" stroke-width="0.5" fill="none" stroke-linecap="round" stroke-linejoin="round" opacity="0.55"/><polyline points="680.3,319.2 674.1,319.6" stroke="#c4c4c4" stroke-width="0.5" fill="none" stroke-linecap="round" stroke-linejoin="round" opacity="0.55"/><polyline points="624.3,337.1 624.2,343.4" stroke="#f0d2a0" stroke-width="0.5" fill="none" stroke-linecap="round" stroke-linejoin="round" opacity="0.55"/><polyline points="682.0,339.3 681.6,345.2" stroke="#f0d2a0" stroke-width="0.5" fill="none" stroke-linecap="round" stroke-linejoin="round" opacity="0.55"/><polyline points="667.1,287.4 670.2,288.7" stroke="#ffffff" stroke-width="0.5" fill="none" stroke-linecap="round" stroke-linejoin="round" opacity="0.55"/><polyline points="607.6,286.8 610.5,292.7" stroke="#ffffff" stroke-width="0.5" fill="none" stroke-linecap="round" stroke-linejoin="round" opacity="0.55"/><polyline points="589.9,271.6 587.9,275.1" stroke="#c4c4c4" stroke-width="0.5" fill="none" stroke-linecap="round" stroke-linejoin="round" opacity="0.55"/><polyline points="618.4,299.9 622.2,303.8" stroke="#ffffff" stroke-width="0.5" fill="none" stroke-linecap="round" stroke-linejoin="round" opacity="0.55"/><polyline points="611.7,286.8 614.8,287.9" stroke="#c4c4c4" stroke-width="0.5" fill="none" stroke-linecap="round" stroke-linejoin="round" opacity="0.55"/><polyline points="595.8,338.7 591.4,340.2" stroke="#c4c4c4" stroke-width="0.5" fill="none" stroke-linecap="round" stroke-linejoin="round" opacity="0.55"/><polyline points="676.6,328.6 672.8,334.7" stroke="#ffffff" stroke-width="0.5" fill="none" stroke-linecap="round" stroke-linejoin="round" opacity="0.55"/><polyline points="607.5,332.6 614.5,332.1" stroke="#c4c4c4" stroke-width="0.5" fill="none" stroke-linecap="round" stroke-linejoin="round" opacity="0.55"/><polyline points="603.0,324.9 603.6,331.9" stroke="#f0d2a0" stroke-width="0.5" fill="none" stroke-linecap="round" stroke-linejoin="round" opacity="0.55"/><polyline points="647.8,275.9 644.3,277.8" stroke="#f0d2a0" stroke-width="0.5" fill="none" stroke-linecap="round" stroke-linejoin="round" opacity="0.55"/><polyline points="608.9,286.2 604.3,288.4" stroke="#ffffff" stroke-width="0.5" fill="none" stroke-linecap="round" stroke-linejoin="round" opacity="0.55"/><polyline points="606.5,289.0 602.5,293.8" stroke="#c4c4c4" stroke-width="0.5" fill="none" stroke-linecap="round" stroke-linejoin="round" opacity="0.55"/><polyline points="604.6,290.8 609.5,294.7" stroke="#ffffff" stroke-width="0.5" fill="none" stroke-linecap="round" stroke-linejoin="round" opacity="0.55"/><polyline points="607.2,330.3 611.9,335.6" stroke="#c4c4c4" stroke-width="0.5" fill="none" stroke-linecap="round" stroke-linejoin="round" opacity="0.55"/><polyline points="586.7,316.4 590.1,316.7" stroke="#c4c4c4" stroke-width="0.5" fill="none" stroke-linecap="round" stroke-linejoin="round" opacity="0.55"/><polyline points="685.3,303.7 689.0,305.2" stroke="#c4c4c4" stroke-width="0.5" fill="none" stroke-linecap="round" stroke-linejoin="round" opacity="0.55"/><polyline points="662.3,305.0 666.8,304.8" stroke="#ffffff" stroke-width="0.5" fill="none" stroke-linecap="round" stroke-linejoin="round" opacity="0.55"/><polyline points="654.8,301.6 651.9,303.2" stroke="#c4c4c4" stroke-width="0.5" fill="none" stroke-linecap="round" stroke-linejoin="round" opacity="0.55"/><polyline points="630.2,324.6 633.4,329.3" stroke="#ffffff" stroke-width="0.5" fill="none" stroke-linecap="round" stroke-linejoin="round" opacity="0.55"/><polyline points="646.9,269.4 653.3,269.9" stroke="#ffffff" stroke-width="0.5" fill="none" stroke-linecap="round" stroke-linejoin="round" opacity="0.55"/><polyline points="682.3,320.8 678.4,323.4" stroke="#f0d2a0" stroke-width="0.5" fill="none" stroke-linecap="round" stroke-linejoin="round" opacity="0.55"/><polyline points="663.7,325.6 670.4,326.1" stroke="#c4c4c4" stroke-width="0.5" fill="none" stroke-linecap="round" stroke-linejoin="round" opacity="0.55"/><polyline points="643.6,324.2 639.2,325.5" stroke="#f0d2a0" stroke-width="0.5" fill="none" stroke-linecap="round" stroke-linejoin="round" opacity="0.55"/><polyline points="600.3,278.9 595.6,283.9" stroke="#c4c4c4" stroke-width="0.5" fill="none" stroke-linecap="round" stroke-linejoin="round" opacity="0.55"/><polyline points="594.8,284.9 602.6,284.5" stroke="#f0d2a0" stroke-width="0.5" fill="none" stroke-linecap="round" stroke-linejoin="round" opacity="0.55"/><polyline points="636.7,346.3 639.7,351.5" stroke="#f0d2a0" stroke-width="0.5" fill="none" stroke-linecap="round" stroke-linejoin="round" opacity="0.55"/><polyline points="665.9,327.1 665.6,330.8" stroke="#f0d2a0" stroke-width="0.5" fill="none" stroke-linecap="round" stroke-linejoin="round" opacity="0.55"/><polyline points="592.8,334.0 594.9,338.2" stroke="#f0d2a0" stroke-width="0.5" fill="none" stroke-linecap="round" stroke-linejoin="round" opacity="0.55"/><polyline points="677.7,323.8 670.6,327.2" stroke="#c4c4c4" stroke-width="0.5" fill="none" stroke-linecap="round" stroke-linejoin="round" opacity="0.55"/><polyline points="667.5,337.0 665.2,343.0" stroke="#ffffff" stroke-width="0.5" fill="none" stroke-linecap="round" stroke-linejoin="round" opacity="0.55"/><polyline points="683.6,313.4 685.3,315.9" stroke="#ffffff" stroke-width="0.5" fill="none" stroke-linecap="round" stroke-linejoin="round" opacity="0.55"/><polyline points="681.8,334.4 684.9,337.5" stroke="#c4c4c4" stroke-width="0.5" fill="none" stroke-linecap="round" stroke-linejoin="round" opacity="0.55"/><polyline points="627.3,288.4 634.3,291.7" stroke="#f0d2a0" stroke-width="0.5" fill="none" stroke-linecap="round" stroke-linejoin="round" opacity="0.55"/><polyline points="670.8,330.2 670.6,336.0" stroke="#ffffff" stroke-width="0.5" fill="none" stroke-linecap="round" stroke-linejoin="round" opacity="0.55"/><polyline points="670.6,333.9 673.5,337.1" stroke="#c4c4c4" stroke-width="0.5" fill="none" stroke-linecap="round" stroke-linejoin="round" opacity="0.55"/><polyline points="596.0,310.4 600.7,310.9" stroke="#c4c4c4" stroke-width="0.5" fill="none" stroke-linecap="round" stroke-linejoin="round" opacity="0.55"/><polyline points="681.7,339.6 678.2,340.5" stroke="#ffffff" stroke-width="0.5" fill="none" stroke-linecap="round" stroke-linejoin="round" opacity="0.55"/><polyline points="675.2,336.5 680.2,342.6" stroke="#f0d2a0" stroke-width="0.5" fill="none" stroke-linecap="round" stroke-linejoin="round" opacity="0.55"/><polyline points="673.9,338.8 676.7,341.8" stroke="#ffffff" stroke-width="0.5" fill="none" stroke-linecap="round" stroke-linejoin="round" opacity="0.55"/><polyline points="592.0,292.1 595.2,292.2" stroke="#ffffff" stroke-width="0.5" fill="none" stroke-linecap="round" stroke-linejoin="round" opacity="0.55"/><polyline points="653.8,306.8 651.7,309.3" stroke="#c4c4c4" stroke-width="0.5" fill="none" stroke-linecap="round" stroke-linejoin="round" opacity="0.55"/><polyline points="617.2,318.4 613.5,324.9" stroke="#c4c4c4" stroke-width="0.5" fill="none" stroke-linecap="round" stroke-linejoin="round" opacity="0.55"/><polyline points="668.0,290.8 660.7,291.5" stroke="#ffffff" stroke-width="0.5" fill="none" stroke-linecap="round" stroke-linejoin="round" opacity="0.55"/><polyline points="638.1,299.8 640.6,306.8" stroke="#c4c4c4" stroke-width="0.5" fill="none" stroke-linecap="round" stroke-linejoin="round" opacity="0.55"/><polyline points="645.1,343.8 651.2,345.6" stroke="#ffffff" stroke-width="0.5" fill="none" stroke-linecap="round" stroke-linejoin="round" opacity="0.55"/><polyline points="635.4,313.0 636.0,316.0" stroke="#ffffff" stroke-width="0.5" fill="none" stroke-linecap="round" stroke-linejoin="round" opacity="0.55"/><polyline points="602.1,289.0 606.5,292.4" stroke="#ffffff" stroke-width="0.5" fill="none" stroke-linecap="round" stroke-linejoin="round" opacity="0.55"/><polyline points="606.3,339.9 603.0,347.2" stroke="#ffffff" stroke-width="0.5" fill="none" stroke-linecap="round" stroke-linejoin="round" opacity="0.55"/><polyline points="616.2,292.3 617.4,298.9" stroke="#ffffff" stroke-width="0.5" fill="none" stroke-linecap="round" stroke-linejoin="round" opacity="0.55"/><polyline points="660.2,276.3 652.5,277.1" stroke="#c4c4c4" stroke-width="0.5" fill="none" stroke-linecap="round" stroke-linejoin="round" opacity="0.55"/><polyline points="602.0,342.3 607.3,344.6" stroke="#c4c4c4" stroke-width="0.5" fill="none" stroke-linecap="round" stroke-linejoin="round" opacity="0.55"/><polyline points="640.6,341.5 641.8,348.7" stroke="#c4c4c4" stroke-width="0.5" fill="none" stroke-linecap="round" stroke-linejoin="round" opacity="0.55"/><polyline points="647.2,276.4 653.3,277.3" stroke="#c4c4c4" stroke-width="0.5" fill="none" stroke-linecap="round" stroke-linejoin="round" opacity="0.55"/><polyline points="652.5,284.1 651.1,287.9" stroke="#ffffff" stroke-width="0.5" fill="none" stroke-linecap="round" stroke-linejoin="round" opacity="0.55"/><polyline points="676.3,341.7 676.9,345.5" stroke="#c4c4c4" stroke-width="0.5" fill="none" stroke-linecap="round" stroke-linejoin="round" opacity="0.55"/><polyline points="642.0,279.1 641.3,285.1" stroke="#ffffff" stroke-width="0.5" fill="none" stroke-linecap="round" stroke-linejoin="round" opacity="0.55"/><polyline points="669.9,325.2 672.9,331.1" stroke="#f0d2a0" stroke-width="0.5" fill="none" stroke-linecap="round" stroke-linejoin="round" opacity="0.55"/><polyline points="693.3,302.1 696.4,303.5" stroke="#f0d2a0" stroke-width="0.5" fill="none" stroke-linecap="round" stroke-linejoin="round" opacity="0.55"/><polyline points="597.1,303.6 591.4,306.2" stroke="#c4c4c4" stroke-width="0.5" fill="none" stroke-linecap="round" stroke-linejoin="round" opacity="0.55"/><polyline points="684.3,294.7 688.3,298.0" stroke="#c4c4c4" stroke-width="0.5" fill="none" stroke-linecap="round" stroke-linejoin="round" opacity="0.55"/><polyline points="633.5,276.3 639.3,277.5" stroke="#c4c4c4" stroke-width="0.5" fill="none" stroke-linecap="round" stroke-linejoin="round" opacity="0.55"/><polyline points="630.1,336.2 623.7,338.6" stroke="#c4c4c4" stroke-width="0.5" fill="none" stroke-linecap="round" stroke-linejoin="round" opacity="0.55"/><polyline points="636.6,281.0 637.6,286.9" stroke="#c4c4c4" stroke-width="0.5" fill="none" stroke-linecap="round" stroke-linejoin="round" opacity="0.55"/><polyline points="588.8,324.3 585.8,331.6" stroke="#f0d2a0" stroke-width="0.5" fill="none" stroke-linecap="round" stroke-linejoin="round" opacity="0.55"/><polyline points="620.3,324.6 621.6,331.7" stroke="#ffffff" stroke-width="0.5" fill="none" stroke-linecap="round" stroke-linejoin="round" opacity="0.55"/><polyline points="637.2,307.8 632.1,311.8" stroke="#c4c4c4" stroke-width="0.5" fill="none" stroke-linecap="round" stroke-linejoin="round" opacity="0.55"/><polyline points="598.8,320.1 604.8,323.2" stroke="#c4c4c4" stroke-width="0.5" fill="none" stroke-linecap="round" stroke-linejoin="round" opacity="0.55"/><polyline points="655.2,322.3 658.1,326.4" stroke="#c4c4c4" stroke-width="0.5" fill="none" stroke-linecap="round" stroke-linejoin="round" opacity="0.55"/><polyline points="620.8,345.3 617.0,349.6" stroke="#c4c4c4" stroke-width="0.5" fill="none" stroke-linecap="round" stroke-linejoin="round" opacity="0.55"/><polyline points="618.8,305.2 622.1,309.6" stroke="#ffffff" stroke-width="0.5" fill="none" stroke-linecap="round" stroke-linejoin="round" opacity="0.55"/><polyline points="622.0,309.7 619.0,316.8" stroke="#c4c4c4" stroke-width="0.5" fill="none" stroke-linecap="round" stroke-linejoin="round" opacity="0.55"/><polyline points="626.5,316.4 632.1,320.4" stroke="#f0d2a0" stroke-width="0.5" fill="none" stroke-linecap="round" stroke-linejoin="round" opacity="0.55"/><polyline points="687.0,288.8 685.1,293.9" stroke="#c4c4c4" stroke-width="0.5" fill="none" stroke-linecap="round" stroke-linejoin="round" opacity="0.55"/><polyline points="605.2,327.4 607.9,329.8" stroke="#ffffff" stroke-width="0.5" fill="none" stroke-linecap="round" stroke-linejoin="round" opacity="0.55"/><polyline points="632.4,274.5 639.4,278.0" stroke="#ffffff" stroke-width="0.5" fill="none" stroke-linecap="round" stroke-linejoin="round" opacity="0.55"/><polyline points="639.6,326.8 640.2,331.9" stroke="#c4c4c4" stroke-width="0.5" fill="none" stroke-linecap="round" stroke-linejoin="round" opacity="0.55"/><polyline points="665.0,318.2 666.4,321.5" stroke="#c4c4c4" stroke-width="0.5" fill="none" stroke-linecap="round" stroke-linejoin="round" opacity="0.55"/><polyline points="653.1,321.8 659.2,326.7" stroke="#f0d2a0" stroke-width="0.5" fill="none" stroke-linecap="round" stroke-linejoin="round" opacity="0.55"/><polyline points="619.0,299.2 614.9,302.4" stroke="#c4c4c4" stroke-width="0.5" fill="none" stroke-linecap="round" stroke-linejoin="round" opacity="0.55"/><polyline points="599.9,340.8 606.7,341.9" stroke="#ffffff" stroke-width="0.5" fill="none" stroke-linecap="round" stroke-linejoin="round" opacity="0.55"/><polyline points="674.0,311.1 681.3,312.3" stroke="#ffffff" stroke-width="0.5" fill="none" stroke-linecap="round" stroke-linejoin="round" opacity="0.55"/><polyline points="652.1,293.0 651.9,298.0" stroke="#c4c4c4" stroke-width="0.5" fill="none" stroke-linecap="round" stroke-linejoin="round" opacity="0.55"/><polyline points="639.6,323.2 643.3,324.0" stroke="#ffffff" stroke-width="0.5" fill="none" stroke-linecap="round" stroke-linejoin="round" opacity="0.55"/><polyline points="681.3,295.1 682.2,301.6" stroke="#f0d2a0" stroke-width="0.5" fill="none" stroke-linecap="round" stroke-linejoin="round" opacity="0.55"/><polyline points="620.1,305.2 615.0,308.3" stroke="#f0d2a0" stroke-width="0.5" fill="none" stroke-linecap="round" stroke-linejoin="round" opacity="0.55"/><polyline points="605.3,321.1 610.7,324.0" stroke="#c4c4c4" stroke-width="0.5" fill="none" stroke-linecap="round" stroke-linejoin="round" opacity="0.55"/><polyline points="618.2,329.1 614.3,331.0" stroke="#f0d2a0" stroke-width="0.5" fill="none" stroke-linecap="round" stroke-linejoin="round" opacity="0.55"/><polyline points="631.4,271.1 634.3,275.2" stroke="#f0d2a0" stroke-width="0.5" fill="none" stroke-linecap="round" stroke-linejoin="round" opacity="0.55"/><polyline points="650.7,275.5 655.4,276.8" stroke="#f0d2a0" stroke-width="0.5" fill="none" stroke-linecap="round" stroke-linejoin="round" opacity="0.55"/><polyline points="633.0,326.5 630.2,329.7" stroke="#ffffff" stroke-width="0.5" fill="none" stroke-linecap="round" stroke-linejoin="round" opacity="0.55"/><polyline points="615.9,269.6 619.1,272.4" stroke="#f0d2a0" stroke-width="0.5" fill="none" stroke-linecap="round" stroke-linejoin="round" opacity="0.55"/><polyline points="672.3,323.6 676.3,328.4" stroke="#c4c4c4" stroke-width="0.5" fill="none" stroke-linecap="round" stroke-linejoin="round" opacity="0.55"/><polyline points="628.2,345.7 633.5,345.3" stroke="#c4c4c4" stroke-width="0.5" fill="none" stroke-linecap="round" stroke-linejoin="round" opacity="0.55"/><polyline points="677.4,289.4 671.5,290.6" stroke="#c4c4c4" stroke-width="0.5" fill="none" stroke-linecap="round" stroke-linejoin="round" opacity="0.55"/><polyline points="622.2,337.2 625.6,343.7" stroke="#ffffff" stroke-width="0.5" fill="none" stroke-linecap="round" stroke-linejoin="round" opacity="0.55"/><polyline points="633.4,266.2 636.8,266.3" stroke="#f0d2a0" stroke-width="0.5" fill="none" stroke-linecap="round" stroke-linejoin="round" opacity="0.55"/><polyline points="614.9,336.2 615.4,342.3" stroke="#ffffff" stroke-width="0.5" fill="none" stroke-linecap="round" stroke-linejoin="round" opacity="0.55"/><polyline points="657.4,336.1 659.0,340.1" stroke="#c4c4c4" stroke-width="0.5" fill="none" stroke-linecap="round" stroke-linejoin="round" opacity="0.55"/><polyline points="636.9,331.6 641.1,331.7" stroke="#c4c4c4" stroke-width="0.5" fill="none" stroke-linecap="round" stroke-linejoin="round" opacity="0.55"/><polyline points="655.7,309.8 652.5,316.4" stroke="#f0d2a0" stroke-width="0.5" fill="none" stroke-linecap="round" stroke-linejoin="round" opacity="0.55"/><polyline points="661.8,328.0 659.4,331.4" stroke="#c4c4c4" stroke-width="0.5" fill="none" stroke-linecap="round" stroke-linejoin="round" opacity="0.55"/><polyline points="662.1,311.7 661.7,316.7" stroke="#f0d2a0" stroke-width="0.5" fill="none" stroke-linecap="round" stroke-linejoin="round" opacity="0.55"/><polyline points="636.3,344.3 642.0,345.6" stroke="#c4c4c4" stroke-width="0.5" fill="none" stroke-linecap="round" stroke-linejoin="round" opacity="0.55"/><polyline points="599.5,340.2 603.7,342.5" stroke="#c4c4c4" stroke-width="0.5" fill="none" stroke-linecap="round" stroke-linejoin="round" opacity="0.55"/><polyline points="639.8,288.3 635.4,289.7" stroke="#c4c4c4" stroke-width="0.5" fill="none" stroke-linecap="round" stroke-linejoin="round" opacity="0.55"/><polyline points="672.5,291.3 675.9,295.4" stroke="#c4c4c4" stroke-width="0.5" fill="none" stroke-linecap="round" stroke-linejoin="round" opacity="0.55"/><polyline points="647.6,345.5 651.6,350.5" stroke="#c4c4c4" stroke-width="0.5" fill="none" stroke-linecap="round" stroke-linejoin="round" opacity="0.55"/><polyline points="645.2,338.2 650.0,342.3" stroke="#c4c4c4" stroke-width="0.5" fill="none" stroke-linecap="round" stroke-linejoin="round" opacity="0.55"/><polyline points="646.4,281.7 651.6,283.6" stroke="#c4c4c4" stroke-width="0.5" fill="none" stroke-linecap="round" stroke-linejoin="round" opacity="0.55"/><polyline points="660.3,322.8 660.8,330.5" stroke="#ffffff" stroke-width="0.5" fill="none" stroke-linecap="round" stroke-linejoin="round" opacity="0.55"/><polyline points="590.5,288.1 597.8,289.7" stroke="#c4c4c4" stroke-width="0.5" fill="none" stroke-linecap="round" stroke-linejoin="round" opacity="0.55"/><polyline points="688.3,314.7 695.2,316.4" stroke="#c4c4c4" stroke-width="0.5" fill="none" stroke-linecap="round" stroke-linejoin="round" opacity="0.55"/><polyline points="605.3,274.5 599.4,274.9" stroke="#f0d2a0" stroke-width="0.5" fill="none" stroke-linecap="round" stroke-linejoin="round" opacity="0.55"/><polyline points="628.6,324.0 627.3,327.1" stroke="#c4c4c4" stroke-width="0.5" fill="none" stroke-linecap="round" stroke-linejoin="round" opacity="0.55"/><polyline points="641.7,300.8 648.3,304.1" stroke="#ffffff" stroke-width="0.5" fill="none" stroke-linecap="round" stroke-linejoin="round" opacity="0.55"/><polyline points="658.4,277.9 652.8,281.4" stroke="#c4c4c4" stroke-width="0.5" fill="none" stroke-linecap="round" stroke-linejoin="round" opacity="0.55"/><polyline points="610.6,276.2 612.1,279.7" stroke="#ffffff" stroke-width="0.5" fill="none" stroke-linecap="round" stroke-linejoin="round" opacity="0.55"/><polyline points="599.2,307.2 593.7,309.2" stroke="#f0d2a0" stroke-width="0.5" fill="none" stroke-linecap="round" stroke-linejoin="round" opacity="0.55"/><polyline points="587.0,300.3 591.2,300.5" stroke="#c4c4c4" stroke-width="0.5" fill="none" stroke-linecap="round" stroke-linejoin="round" opacity="0.55"/><polyline points="609.0,272.0 606.0,276.4" stroke="#f0d2a0" stroke-width="0.5" fill="none" stroke-linecap="round" stroke-linejoin="round" opacity="0.55"/><polyline points="671.8,283.1 678.1,284.2" stroke="#c4c4c4" stroke-width="0.5" fill="none" stroke-linecap="round" stroke-linejoin="round" opacity="0.55"/><polyline points="690.8,315.9 694.7,316.2" stroke="#c4c4c4" stroke-width="0.5" fill="none" stroke-linecap="round" stroke-linejoin="round" opacity="0.55"/><polyline points="670.5,293.1 673.3,295.2" stroke="#f0d2a0" stroke-width="0.5" fill="none" stroke-linecap="round" stroke-linejoin="round" opacity="0.55"/><polyline points="609.3,277.3 611.1,281.5" stroke="#ffffff" stroke-width="0.5" fill="none" stroke-linecap="round" stroke-linejoin="round" opacity="0.55"/><polyline points="664.7,300.9 668.5,301.6" stroke="#c4c4c4" stroke-width="0.5" fill="none" stroke-linecap="round" stroke-linejoin="round" opacity="0.55"/><polyline points="678.2,332.0 682.7,332.4" stroke="#ffffff" stroke-width="0.5" fill="none" stroke-linecap="round" stroke-linejoin="round" opacity="0.55"/><polyline points="642.5,328.3 640.9,331.9" stroke="#c4c4c4" stroke-width="0.5" fill="none" stroke-linecap="round" stroke-linejoin="round" opacity="0.55"/><polyline points="632.0,320.9 630.9,324.1" stroke="#c4c4c4" stroke-width="0.5" fill="none" stroke-linecap="round" stroke-linejoin="round" opacity="0.55"/><polyline points="659.4,272.7 654.5,273.8" stroke="#c4c4c4" stroke-width="0.5" fill="none" stroke-linecap="round" stroke-linejoin="round" opacity="0.55"/><polyline points="620.2,286.9 622.9,292.6" stroke="#f0d2a0" stroke-width="0.5" fill="none" stroke-linecap="round" stroke-linejoin="round" opacity="0.55"/><polyline points="662.6,301.0 666.4,300.8" stroke="#c4c4c4" stroke-width="0.5" fill="none" stroke-linecap="round" stroke-linejoin="round" opacity="0.55"/><polyline points="592.0,307.2 594.2,312.2" stroke="#f0d2a0" stroke-width="0.5" fill="none" stroke-linecap="round" stroke-linejoin="round" opacity="0.55"/><polyline points="647.5,302.5 644.2,303.0" stroke="#f0d2a0" stroke-width="0.5" fill="none" stroke-linecap="round" stroke-linejoin="round" opacity="0.55"/><polyline points="595.2,269.8 600.2,271.4" stroke="#ffffff" stroke-width="0.5" fill="none" stroke-linecap="round" stroke-linejoin="round" opacity="0.55"/><polyline points="674.7,332.0 677.2,334.3" stroke="#c4c4c4" stroke-width="0.5" fill="none" stroke-linecap="round" stroke-linejoin="round" opacity="0.55"/><polyline points="650.0,326.2 653.1,329.7" stroke="#c4c4c4" stroke-width="0.5" fill="none" stroke-linecap="round" stroke-linejoin="round" opacity="0.55"/><polyline points="599.4,301.6 601.0,305.2" stroke="#f0d2a0" stroke-width="0.5" fill="none" stroke-linecap="round" stroke-linejoin="round" opacity="0.55"/><polyline points="683.8,318.8 685.7,322.0" stroke="#ffffff" stroke-width="0.5" fill="none" stroke-linecap="round" stroke-linejoin="round" opacity="0.55"/><polyline points="606.5,277.2 613.2,280.2" stroke="#c4c4c4" stroke-width="0.5" fill="none" stroke-linecap="round" stroke-linejoin="round" opacity="0.55"/><polyline points="681.6,328.4 676.2,330.5" stroke="#c4c4c4" stroke-width="0.5" fill="none" stroke-linecap="round" stroke-linejoin="round" opacity="0.55"/><polyline points="617.3,281.6 619.0,288.0" stroke="#c4c4c4" stroke-width="0.5" fill="none" stroke-linecap="round" stroke-linejoin="round" opacity="0.55"/><polyline points="654.3,320.7 657.9,321.3" stroke="#c4c4c4" stroke-width="0.5" fill="none" stroke-linecap="round" stroke-linejoin="round" opacity="0.55"/><polyline points="585.2,289.2 582.7,291.7" stroke="#f0d2a0" stroke-width="0.5" fill="none" stroke-linecap="round" stroke-linejoin="round" opacity="0.55"/><polyline points="609.9,343.6 606.5,348.0" stroke="#c4c4c4" stroke-width="0.5" fill="none" stroke-linecap="round" stroke-linejoin="round" opacity="0.55"/><polyline points="628.2,324.9 624.7,331.1" stroke="#c4c4c4" stroke-width="0.5" fill="none" stroke-linecap="round" stroke-linejoin="round" opacity="0.55"/><polyline points="667.5,338.1 664.1,343.7" stroke="#c4c4c4" stroke-width="0.5" fill="none" stroke-linecap="round" stroke-linejoin="round" opacity="0.55"/><polyline points="668.0,281.8 665.2,285.0" stroke="#c4c4c4" stroke-width="0.5" fill="none" stroke-linecap="round" stroke-linejoin="round" opacity="0.55"/><polyline points="656.2,323.6 660.6,324.1" stroke="#f0d2a0" stroke-width="0.5" fill="none" stroke-linecap="round" stroke-linejoin="round" opacity="0.55"/><polyline points="643.0,321.6 645.0,329.2" stroke="#f0d2a0" stroke-width="0.5" fill="none" stroke-linecap="round" stroke-linejoin="round" opacity="0.55"/><polyline points="593.0,332.4 590.5,338.6" stroke="#c4c4c4" stroke-width="0.5" fill="none" stroke-linecap="round" stroke-linejoin="round" opacity="0.55"/><polyline points="612.4,305.9 615.3,311.8" stroke="#f0d2a0" stroke-width="0.5" fill="none" stroke-linecap="round" stroke-linejoin="round" opacity="0.55"/><polyline points="614.6,277.4 614.8,281.1" stroke="#c4c4c4" stroke-width="0.5" fill="none" stroke-linecap="round" stroke-linejoin="round" opacity="0.55"/><polyline points="613.7,343.3 619.6,347.5" stroke="#c4c4c4" stroke-width="0.5" fill="none" stroke-linecap="round" stroke-linejoin="round" opacity="0.55"/><polyline points="686.9,300.7 689.3,303.9" stroke="#ffffff" stroke-width="0.5" fill="none" stroke-linecap="round" stroke-linejoin="round" opacity="0.55"/><polyline points="536.0,396.9 531.0,397.2" stroke="#ffffff" stroke-width="0.5" fill="none" stroke-linecap="round" stroke-linejoin="round" opacity="0.55"/><polyline points="488.5,375.6 493.9,379.9" stroke="#c4c4c4" stroke-width="0.5" fill="none" stroke-linecap="round" stroke-linejoin="round" opacity="0.55"/><polyline points="483.0,417.1 485.0,422.8" stroke="#c4c4c4" stroke-width="0.5" fill="none" stroke-linecap="round" stroke-linejoin="round" opacity="0.55"/><polyline points="479.3,376.8 481.7,383.7" stroke="#c4c4c4" stroke-width="0.5" fill="none" stroke-linecap="round" stroke-linejoin="round" opacity="0.55"/><polyline points="463.3,408.0 458.6,411.1" stroke="#f0d2a0" stroke-width="0.5" fill="none" stroke-linecap="round" stroke-linejoin="round" opacity="0.55"/><polyline points="463.4,377.9 459.9,380.8" stroke="#ffffff" stroke-width="0.5" fill="none" stroke-linecap="round" stroke-linejoin="round" opacity="0.55"/><polyline points="531.7,380.5 527.8,385.0" stroke="#c4c4c4" stroke-width="0.5" fill="none" stroke-linecap="round" stroke-linejoin="round" opacity="0.55"/><polyline points="477.0,425.2 482.4,424.8" stroke="#f0d2a0" stroke-width="0.5" fill="none" stroke-linecap="round" stroke-linejoin="round" opacity="0.55"/><polyline points="495.0,410.3 491.1,410.8" stroke="#f0d2a0" stroke-width="0.5" fill="none" stroke-linecap="round" stroke-linejoin="round" opacity="0.55"/><polyline points="533.7,386.1 541.0,385.7" stroke="#ffffff" stroke-width="0.5" fill="none" stroke-linecap="round" stroke-linejoin="round" opacity="0.55"/><polyline points="490.2,398.3 494.8,404.3" stroke="#c4c4c4" stroke-width="0.5" fill="none" stroke-linecap="round" stroke-linejoin="round" opacity="0.55"/><polyline points="461.3,404.3 462.9,407.6" stroke="#c4c4c4" stroke-width="0.5" fill="none" stroke-linecap="round" stroke-linejoin="round" opacity="0.55"/><polyline points="472.5,392.6 465.5,394.5" stroke="#c4c4c4" stroke-width="0.5" fill="none" stroke-linecap="round" stroke-linejoin="round" opacity="0.55"/><polyline points="478.4,367.1 481.9,374.0" stroke="#c4c4c4" stroke-width="0.5" fill="none" stroke-linecap="round" stroke-linejoin="round" opacity="0.55"/><polyline points="513.1,404.7 515.5,408.6" stroke="#ffffff" stroke-width="0.5" fill="none" stroke-linecap="round" stroke-linejoin="round" opacity="0.55"/><polyline points="483.5,395.1 489.3,400.3" stroke="#ffffff" stroke-width="0.5" fill="none" stroke-linecap="round" stroke-linejoin="round" opacity="0.55"/><polyline points="467.1,415.6 463.8,421.1" stroke="#c4c4c4" stroke-width="0.5" fill="none" stroke-linecap="round" stroke-linejoin="round" opacity="0.55"/><polyline points="473.6,426.4 476.1,431.0" stroke="#ffffff" stroke-width="0.5" fill="none" stroke-linecap="round" stroke-linejoin="round" opacity="0.55"/><polyline points="454.7,378.5 449.4,384.2" stroke="#f0d2a0" stroke-width="0.5" fill="none" stroke-linecap="round" stroke-linejoin="round" opacity="0.55"/><polyline points="502.8,427.3 508.2,428.9" stroke="#c4c4c4" stroke-width="0.5" fill="none" stroke-linecap="round" stroke-linejoin="round" opacity="0.55"/><polyline points="476.1,414.1 472.4,414.8" stroke="#c4c4c4" stroke-width="0.5" fill="none" stroke-linecap="round" stroke-linejoin="round" opacity="0.55"/><polyline points="479.0,404.9 473.5,408.5" stroke="#c4c4c4" stroke-width="0.5" fill="none" stroke-linecap="round" stroke-linejoin="round" opacity="0.55"/><polyline points="480.7,417.0 475.1,418.0" stroke="#c4c4c4" stroke-width="0.5" fill="none" stroke-linecap="round" stroke-linejoin="round" opacity="0.55"/><polyline points="514.5,422.4 514.6,427.0" stroke="#c4c4c4" stroke-width="0.5" fill="none" stroke-linecap="round" stroke-linejoin="round" opacity="0.55"/><polyline points="497.9,406.2 501.6,407.3" stroke="#ffffff" stroke-width="0.5" fill="none" stroke-linecap="round" stroke-linejoin="round" opacity="0.55"/><polyline points="459.5,412.5 453.7,413.7" stroke="#c4c4c4" stroke-width="0.5" fill="none" stroke-linecap="round" stroke-linejoin="round" opacity="0.55"/><polyline points="473.4,367.3 469.1,373.0" stroke="#c4c4c4" stroke-width="0.5" fill="none" stroke-linecap="round" stroke-linejoin="round" opacity="0.55"/><polyline points="470.9,435.5 475.6,435.4" stroke="#c4c4c4" stroke-width="0.5" fill="none" stroke-linecap="round" stroke-linejoin="round" opacity="0.55"/><polyline points="458.1,366.1 464.3,365.6" stroke="#c4c4c4" stroke-width="0.5" fill="none" stroke-linecap="round" stroke-linejoin="round" opacity="0.55"/><polyline points="514.5,385.3 520.5,388.0" stroke="#f0d2a0" stroke-width="0.5" fill="none" stroke-linecap="round" stroke-linejoin="round" opacity="0.55"/><polyline points="457.5,384.1 453.2,385.6" stroke="#c4c4c4" stroke-width="0.5" fill="none" stroke-linecap="round" stroke-linejoin="round" opacity="0.55"/><polyline points="487.5,405.6 483.9,408.9" stroke="#c4c4c4" stroke-width="0.5" fill="none" stroke-linecap="round" stroke-linejoin="round" opacity="0.55"/><polyline points="478.1,422.6 480.9,429.2" stroke="#c4c4c4" stroke-width="0.5" fill="none" stroke-linecap="round" stroke-linejoin="round" opacity="0.55"/><polyline points="488.8,378.8 491.5,382.0" stroke="#c4c4c4" stroke-width="0.5" fill="none" stroke-linecap="round" stroke-linejoin="round" opacity="0.55"/><polyline points="522.1,422.6 527.0,428.1" stroke="#c4c4c4" stroke-width="0.5" fill="none" stroke-linecap="round" stroke-linejoin="round" opacity="0.55"/><polyline points="484.3,421.5 481.7,427.2" stroke="#c4c4c4" stroke-width="0.5" fill="none" stroke-linecap="round" stroke-linejoin="round" opacity="0.55"/><polyline points="491.5,375.5 491.5,383.4" stroke="#c4c4c4" stroke-width="0.5" fill="none" stroke-linecap="round" stroke-linejoin="round" opacity="0.55"/><polyline points="512.8,380.9 518.6,381.2" stroke="#c4c4c4" stroke-width="0.5" fill="none" stroke-linecap="round" stroke-linejoin="round" opacity="0.55"/><polyline points="511.1,400.5 506.3,401.2" stroke="#c4c4c4" stroke-width="0.5" fill="none" stroke-linecap="round" stroke-linejoin="round" opacity="0.55"/><polyline points="526.3,381.3 519.5,383.5" stroke="#c4c4c4" stroke-width="0.5" fill="none" stroke-linecap="round" stroke-linejoin="round" opacity="0.55"/><polyline points="517.2,374.3 523.1,376.6" stroke="#f0d2a0" stroke-width="0.5" fill="none" stroke-linecap="round" stroke-linejoin="round" opacity="0.55"/><polyline points="527.8,396.7 525.1,402.4" stroke="#ffffff" stroke-width="0.5" fill="none" stroke-linecap="round" stroke-linejoin="round" opacity="0.55"/><polyline points="466.5,374.5 472.1,379.5" stroke="#f0d2a0" stroke-width="0.5" fill="none" stroke-linecap="round" stroke-linejoin="round" opacity="0.55"/><polyline points="488.1,372.5 484.2,373.0" stroke="#c4c4c4" stroke-width="0.5" fill="none" stroke-linecap="round" stroke-linejoin="round" opacity="0.55"/><polyline points="496.2,405.2 491.3,407.0" stroke="#ffffff" stroke-width="0.5" fill="none" stroke-linecap="round" stroke-linejoin="round" opacity="0.55"/><polyline points="470.5,363.2 464.8,367.0" stroke="#f0d2a0" stroke-width="0.5" fill="none" stroke-linecap="round" stroke-linejoin="round" opacity="0.55"/><polyline points="472.2,425.6 468.3,427.8" stroke="#c4c4c4" stroke-width="0.5" fill="none" stroke-linecap="round" stroke-linejoin="round" opacity="0.55"/><polyline points="512.3,391.2 517.1,393.8" stroke="#c4c4c4" stroke-width="0.5" fill="none" stroke-linecap="round" stroke-linejoin="round" opacity="0.55"/><polyline points="516.3,372.9 522.0,372.5" stroke="#ffffff" stroke-width="0.5" fill="none" stroke-linecap="round" stroke-linejoin="round" opacity="0.55"/><polyline points="470.4,377.3 474.6,377.5" stroke="#c4c4c4" stroke-width="0.5" fill="none" stroke-linecap="round" stroke-linejoin="round" opacity="0.55"/><polyline points="475.3,385.2 479.2,388.8" stroke="#f0d2a0" stroke-width="0.5" fill="none" stroke-linecap="round" stroke-linejoin="round" opacity="0.55"/><polyline points="462.6,378.8 464.1,381.4" stroke="#f0d2a0" stroke-width="0.5" fill="none" stroke-linecap="round" stroke-linejoin="round" opacity="0.55"/><polyline points="516.8,425.5 518.9,433.3" stroke="#c4c4c4" stroke-width="0.5" fill="none" stroke-linecap="round" stroke-linejoin="round" opacity="0.55"/><polyline points="522.4,394.6 519.0,401.4" stroke="#f0d2a0" stroke-width="0.5" fill="none" stroke-linecap="round" stroke-linejoin="round" opacity="0.55"/><polyline points="499.6,397.0 494.5,397.8" stroke="#f0d2a0" stroke-width="0.5" fill="none" stroke-linecap="round" stroke-linejoin="round" opacity="0.55"/><polyline points="477.5,429.5 474.2,436.3" stroke="#ffffff" stroke-width="0.5" fill="none" stroke-linecap="round" stroke-linejoin="round" opacity="0.55"/><polyline points="504.1,398.8 503.3,404.6" stroke="#ffffff" stroke-width="0.5" fill="none" stroke-linecap="round" stroke-linejoin="round" opacity="0.55"/><polyline points="459.4,391.0 466.8,390.3" stroke="#f0d2a0" stroke-width="0.5" fill="none" stroke-linecap="round" stroke-linejoin="round" opacity="0.55"/><polyline points="510.8,430.8 510.5,436.2" stroke="#f0d2a0" stroke-width="0.5" fill="none" stroke-linecap="round" stroke-linejoin="round" opacity="0.55"/><polyline points="518.3,421.2 515.6,424.2" stroke="#c4c4c4" stroke-width="0.5" fill="none" stroke-linecap="round" stroke-linejoin="round" opacity="0.55"/><polyline points="482.2,410.2 484.2,414.4" stroke="#ffffff" stroke-width="0.5" fill="none" stroke-linecap="round" stroke-linejoin="round" opacity="0.55"/><polyline points="478.7,426.4 474.3,427.4" stroke="#c4c4c4" stroke-width="0.5" fill="none" stroke-linecap="round" stroke-linejoin="round" opacity="0.55"/><polyline points="462.7,421.4 465.5,423.3" stroke="#c4c4c4" stroke-width="0.5" fill="none" stroke-linecap="round" stroke-linejoin="round" opacity="0.55"/><polyline points="517.5,411.8 512.8,415.8" stroke="#ffffff" stroke-width="0.5" fill="none" stroke-linecap="round" stroke-linejoin="round" opacity="0.55"/><polyline points="500.6,385.2 497.6,392.4" stroke="#c4c4c4" stroke-width="0.5" fill="none" stroke-linecap="round" stroke-linejoin="round" opacity="0.55"/><polyline points="487.3,376.8 484.5,381.4" stroke="#c4c4c4" stroke-width="0.5" fill="none" stroke-linecap="round" stroke-linejoin="round" opacity="0.55"/><polyline points="529.6,409.2 532.3,414.9" stroke="#c4c4c4" stroke-width="0.5" fill="none" stroke-linecap="round" stroke-linejoin="round" opacity="0.55"/><polyline points="466.3,392.7 470.9,396.6" stroke="#c4c4c4" stroke-width="0.5" fill="none" stroke-linecap="round" stroke-linejoin="round" opacity="0.55"/><polyline points="491.6,438.8 494.5,445.7" stroke="#ffffff" stroke-width="0.5" fill="none" stroke-linecap="round" stroke-linejoin="round" opacity="0.55"/><polyline points="493.3,436.9 489.1,438.6" stroke="#ffffff" stroke-width="0.5" fill="none" stroke-linecap="round" stroke-linejoin="round" opacity="0.55"/><polyline points="489.7,402.5 486.0,408.6" stroke="#f0d2a0" stroke-width="0.5" fill="none" stroke-linecap="round" stroke-linejoin="round" opacity="0.55"/><polyline points="460.3,362.3 465.4,364.4" stroke="#c4c4c4" stroke-width="0.5" fill="none" stroke-linecap="round" stroke-linejoin="round" opacity="0.55"/><polyline points="478.9,441.4 474.4,443.9" stroke="#ffffff" stroke-width="0.5" fill="none" stroke-linecap="round" stroke-linejoin="round" opacity="0.55"/><polyline points="502.5,415.1 506.6,417.0" stroke="#ffffff" stroke-width="0.5" fill="none" stroke-linecap="round" stroke-linejoin="round" opacity="0.55"/><polyline points="491.8,408.1 494.0,411.5" stroke="#c4c4c4" stroke-width="0.5" fill="none" stroke-linecap="round" stroke-linejoin="round" opacity="0.55"/><polyline points="469.4,396.7 465.4,398.6" stroke="#c4c4c4" stroke-width="0.5" fill="none" stroke-linecap="round" stroke-linejoin="round" opacity="0.55"/><polyline points="511.4,402.8 508.1,403.9" stroke="#c4c4c4" stroke-width="0.5" fill="none" stroke-linecap="round" stroke-linejoin="round" opacity="0.55"/><polyline points="486.3,386.6 490.0,392.7" stroke="#c4c4c4" stroke-width="0.5" fill="none" stroke-linecap="round" stroke-linejoin="round" opacity="0.55"/><polyline points="475.0,436.8 469.5,437.1" stroke="#c4c4c4" stroke-width="0.5" fill="none" stroke-linecap="round" stroke-linejoin="round" opacity="0.55"/><polyline points="475.9,428.4 478.2,434.0" stroke="#c4c4c4" stroke-width="0.5" fill="none" stroke-linecap="round" stroke-linejoin="round" opacity="0.55"/><polyline points="527.3,406.9 528.2,410.2" stroke="#c4c4c4" stroke-width="0.5" fill="none" stroke-linecap="round" stroke-linejoin="round" opacity="0.55"/><polyline points="489.1,374.6 492.5,379.9" stroke="#ffffff" stroke-width="0.5" fill="none" stroke-linecap="round" stroke-linejoin="round" opacity="0.55"/><polyline points="469.2,413.9 467.2,419.2" stroke="#c4c4c4" stroke-width="0.5" fill="none" stroke-linecap="round" stroke-linejoin="round" opacity="0.55"/><polyline points="541.1,392.9 542.7,399.2" stroke="#c4c4c4" stroke-width="0.5" fill="none" stroke-linecap="round" stroke-linejoin="round" opacity="0.55"/><polyline points="489.4,407.8 490.7,413.3" stroke="#c4c4c4" stroke-width="0.5" fill="none" stroke-linecap="round" stroke-linejoin="round" opacity="0.55"/><polyline points="544.3,399.1 544.7,406.3" stroke="#ffffff" stroke-width="0.5" fill="none" stroke-linecap="round" stroke-linejoin="round" opacity="0.55"/><polyline points="476.9,426.1 480.0,430.6" stroke="#c4c4c4" stroke-width="0.5" fill="none" stroke-linecap="round" stroke-linejoin="round" opacity="0.55"/><polyline points="530.6,416.2 530.3,420.1" stroke="#c4c4c4" stroke-width="0.5" fill="none" stroke-linecap="round" stroke-linejoin="round" opacity="0.55"/><polyline points="496.5,432.6 496.7,438.3" stroke="#c4c4c4" stroke-width="0.5" fill="none" stroke-linecap="round" stroke-linejoin="round" opacity="0.55"/><polyline points="459.6,377.3 456.3,384.1" stroke="#f0d2a0" stroke-width="0.5" fill="none" stroke-linecap="round" stroke-linejoin="round" opacity="0.55"/><polyline points="461.3,419.6 456.3,422.9" stroke="#f0d2a0" stroke-width="0.5" fill="none" stroke-linecap="round" stroke-linejoin="round" opacity="0.55"/><polyline points="478.7,441.5 483.1,443.5" stroke="#ffffff" stroke-width="0.5" fill="none" stroke-linecap="round" stroke-linejoin="round" opacity="0.55"/><polyline points="523.1,409.6 517.0,410.6" stroke="#f0d2a0" stroke-width="0.5" fill="none" stroke-linecap="round" stroke-linejoin="round" opacity="0.55"/><polyline points="503.1,428.3 499.6,429.6" stroke="#c4c4c4" stroke-width="0.5" fill="none" stroke-linecap="round" stroke-linejoin="round" opacity="0.55"/><polyline points="489.1,376.1 482.7,377.2" stroke="#c4c4c4" stroke-width="0.5" fill="none" stroke-linecap="round" stroke-linejoin="round" opacity="0.55"/><polyline points="507.7,437.4 500.9,439.1" stroke="#ffffff" stroke-width="0.5" fill="none" stroke-linecap="round" stroke-linejoin="round" opacity="0.55"/><polyline points="538.3,391.2 540.9,393.6" stroke="#c4c4c4" stroke-width="0.5" fill="none" stroke-linecap="round" stroke-linejoin="round" opacity="0.55"/><polyline points="524.3,397.4 519.6,399.7" stroke="#ffffff" stroke-width="0.5" fill="none" stroke-linecap="round" stroke-linejoin="round" opacity="0.55"/><polyline points="516.0,374.7 517.3,378.1" stroke="#c4c4c4" stroke-width="0.5" fill="none" stroke-linecap="round" stroke-linejoin="round" opacity="0.55"/><polyline points="497.8,388.1 493.4,394.4" stroke="#ffffff" stroke-width="0.5" fill="none" stroke-linecap="round" stroke-linejoin="round" opacity="0.55"/><polyline points="510.7,374.6 512.3,382.3" stroke="#ffffff" stroke-width="0.5" fill="none" stroke-linecap="round" stroke-linejoin="round" opacity="0.55"/><polyline points="496.7,394.6 493.2,401.5" stroke="#c4c4c4" stroke-width="0.5" fill="none" stroke-linecap="round" stroke-linejoin="round" opacity="0.55"/><polyline points="524.5,409.2 526.9,412.7" stroke="#f0d2a0" stroke-width="0.5" fill="none" stroke-linecap="round" stroke-linejoin="round" opacity="0.55"/><polyline points="488.7,414.2 493.2,417.5" stroke="#f0d2a0" stroke-width="0.5" fill="none" stroke-linecap="round" stroke-linejoin="round" opacity="0.55"/><polyline points="470.8,388.2 473.7,389.4" stroke="#f0d2a0" stroke-width="0.5" fill="none" stroke-linecap="round" stroke-linejoin="round" opacity="0.55"/><polyline points="531.9,401.2 534.3,406.0" stroke="#f0d2a0" stroke-width="0.5" fill="none" stroke-linecap="round" stroke-linejoin="round" opacity="0.55"/><polyline points="487.7,382.0 493.7,383.2" stroke="#f0d2a0" stroke-width="0.5" fill="none" stroke-linecap="round" stroke-linejoin="round" opacity="0.55"/><polyline points="461.6,368.2 457.3,372.8" stroke="#ffffff" stroke-width="0.5" fill="none" stroke-linecap="round" stroke-linejoin="round" opacity="0.55"/><polyline points="462.8,410.3 468.7,414.6" stroke="#f0d2a0" stroke-width="0.5" fill="none" stroke-linecap="round" stroke-linejoin="round" opacity="0.55"/><polyline points="513.8,383.2 508.1,388.2" stroke="#c4c4c4" stroke-width="0.5" fill="none" stroke-linecap="round" stroke-linejoin="round" opacity="0.55"/><polyline points="484.7,399.4 481.3,400.3" stroke="#c4c4c4" stroke-width="0.5" fill="none" stroke-linecap="round" stroke-linejoin="round" opacity="0.55"/><polyline points="480.5,379.7 475.1,384.3" stroke="#ffffff" stroke-width="0.5" fill="none" stroke-linecap="round" stroke-linejoin="round" opacity="0.55"/><polyline points="492.0,434.2 485.9,434.5" stroke="#f0d2a0" stroke-width="0.5" fill="none" stroke-linecap="round" stroke-linejoin="round" opacity="0.55"/><polyline points="480.3,435.8 481.5,438.8" stroke="#ffffff" stroke-width="0.5" fill="none" stroke-linecap="round" stroke-linejoin="round" opacity="0.55"/><polyline points="465.7,419.6 468.6,425.5" stroke="#c4c4c4" stroke-width="0.5" fill="none" stroke-linecap="round" stroke-linejoin="round" opacity="0.55"/><polyline points="526.4,380.0 526.5,384.9" stroke="#c4c4c4" stroke-width="0.5" fill="none" stroke-linecap="round" stroke-linejoin="round" opacity="0.55"/><polyline points="509.2,371.9 516.2,372.3" stroke="#f0d2a0" stroke-width="0.5" fill="none" stroke-linecap="round" stroke-linejoin="round" opacity="0.55"/><polyline points="493.7,430.9 496.8,438.1" stroke="#ffffff" stroke-width="0.5" fill="none" stroke-linecap="round" stroke-linejoin="round" opacity="0.55"/><polyline points="501.1,426.9 504.4,426.9" stroke="#ffffff" stroke-width="0.5" fill="none" stroke-linecap="round" stroke-linejoin="round" opacity="0.55"/><polyline points="488.9,406.0 496.5,406.7" stroke="#ffffff" stroke-width="0.5" fill="none" stroke-linecap="round" stroke-linejoin="round" opacity="0.55"/><polyline points="466.5,371.2 470.9,372.3" stroke="#ffffff" stroke-width="0.5" fill="none" stroke-linecap="round" stroke-linejoin="round" opacity="0.55"/><polyline points="531.3,398.6 526.4,403.2" stroke="#ffffff" stroke-width="0.5" fill="none" stroke-linecap="round" stroke-linejoin="round" opacity="0.55"/><polyline points="472.2,438.9 471.7,446.0" stroke="#ffffff" stroke-width="0.5" fill="none" stroke-linecap="round" stroke-linejoin="round" opacity="0.55"/><polyline points="523.9,413.2 526.6,419.9" stroke="#c4c4c4" stroke-width="0.5" fill="none" stroke-linecap="round" stroke-linejoin="round" opacity="0.55"/><polyline points="537.7,386.3 537.4,392.7" stroke="#f0d2a0" stroke-width="0.5" fill="none" stroke-linecap="round" stroke-linejoin="round" opacity="0.55"/><polyline points="477.6,381.1 478.2,386.8" stroke="#c4c4c4" stroke-width="0.5" fill="none" stroke-linecap="round" stroke-linejoin="round" opacity="0.55"/><polyline points="534.7,380.4 541.2,380.5" stroke="#c4c4c4" stroke-width="0.5" fill="none" stroke-linecap="round" stroke-linejoin="round" opacity="0.55"/><polyline points="523.3,385.7 524.7,388.9" stroke="#f0d2a0" stroke-width="0.5" fill="none" stroke-linecap="round" stroke-linejoin="round" opacity="0.55"/><polyline points="527.0,405.4 532.2,406.0" stroke="#c4c4c4" stroke-width="0.5" fill="none" stroke-linecap="round" stroke-linejoin="round" opacity="0.55"/><polyline points="467.1,366.2 473.2,369.1" stroke="#f0d2a0" stroke-width="0.5" fill="none" stroke-linecap="round" stroke-linejoin="round" opacity="0.55"/><polyline points="459.8,380.7 455.7,385.5" stroke="#ffffff" stroke-width="0.5" fill="none" stroke-linecap="round" stroke-linejoin="round" opacity="0.55"/><polyline points="454.9,388.6 452.0,391.7" stroke="#f0d2a0" stroke-width="0.5" fill="none" stroke-linecap="round" stroke-linejoin="round" opacity="0.55"/><polyline points="501.5,418.7 500.1,422.1" stroke="#f0d2a0" stroke-width="0.5" fill="none" stroke-linecap="round" stroke-linejoin="round" opacity="0.55"/><polyline points="478.2,422.1 480.9,425.2" stroke="#c4c4c4" stroke-width="0.5" fill="none" stroke-linecap="round" stroke-linejoin="round" opacity="0.55"/><polyline points="532.4,413.6 528.9,417.8" stroke="#ffffff" stroke-width="0.5" fill="none" stroke-linecap="round" stroke-linejoin="round" opacity="0.55"/><polyline points="539.4,397.8 536.7,402.9" stroke="#c4c4c4" stroke-width="0.5" fill="none" stroke-linecap="round" stroke-linejoin="round" opacity="0.55"/><polyline points="488.7,379.5 489.8,385.9" stroke="#c4c4c4" stroke-width="0.5" fill="none" stroke-linecap="round" stroke-linejoin="round" opacity="0.55"/><polyline points="544.1,400.4 547.5,404.0" stroke="#ffffff" stroke-width="0.5" fill="none" stroke-linecap="round" stroke-linejoin="round" opacity="0.55"/><polyline points="503.8,420.8 501.5,423.3" stroke="#c4c4c4" stroke-width="0.5" fill="none" stroke-linecap="round" stroke-linejoin="round" opacity="0.55"/><polyline points="490.1,370.8 487.9,374.8" stroke="#f0d2a0" stroke-width="0.5" fill="none" stroke-linecap="round" stroke-linejoin="round" opacity="0.55"/><polyline points="508.9,412.2 511.1,415.4" stroke="#ffffff" stroke-width="0.5" fill="none" stroke-linecap="round" stroke-linejoin="round" opacity="0.55"/><polyline points="490.4,443.2 487.4,443.7" stroke="#c4c4c4" stroke-width="0.5" fill="none" stroke-linecap="round" stroke-linejoin="round" opacity="0.55"/><polyline points="516.9,417.3 517.9,420.6" stroke="#c4c4c4" stroke-width="0.5" fill="none" stroke-linecap="round" stroke-linejoin="round" opacity="0.55"/><polyline points="490.6,408.4 485.7,414.1" stroke="#c4c4c4" stroke-width="0.5" fill="none" stroke-linecap="round" stroke-linejoin="round" opacity="0.55"/><polyline points="488.2,379.0 492.6,380.1" stroke="#f0d2a0" stroke-width="0.5" fill="none" stroke-linecap="round" stroke-linejoin="round" opacity="0.55"/><polyline points="513.5,407.9 512.9,414.0" stroke="#f0d2a0" stroke-width="0.5" fill="none" stroke-linecap="round" stroke-linejoin="round" opacity="0.55"/><polyline points="482.6,392.4 479.9,399.9" stroke="#f0d2a0" stroke-width="0.5" fill="none" stroke-linecap="round" stroke-linejoin="round" opacity="0.55"/><polyline points="504.4,377.4 505.7,380.3" stroke="#c4c4c4" stroke-width="0.5" fill="none" stroke-linecap="round" stroke-linejoin="round" opacity="0.55"/><polyline points="474.0,425.5 469.2,427.6" stroke="#ffffff" stroke-width="0.5" fill="none" stroke-linecap="round" stroke-linejoin="round" opacity="0.55"/><polyline points="456.0,365.6 462.2,366.4" stroke="#c4c4c4" stroke-width="0.5" fill="none" stroke-linecap="round" stroke-linejoin="round" opacity="0.55"/><polyline points="485.6,371.9 483.5,376.0" stroke="#ffffff" stroke-width="0.5" fill="none" stroke-linecap="round" stroke-linejoin="round" opacity="0.55"/><polyline points="459.3,387.3 454.6,392.9" stroke="#c4c4c4" stroke-width="0.5" fill="none" stroke-linecap="round" stroke-linejoin="round" opacity="0.55"/><polyline points="486.5,442.7 484.7,446.6" stroke="#f0d2a0" stroke-width="0.5" fill="none" stroke-linecap="round" stroke-linejoin="round" opacity="0.55"/><polyline points="652.6,358.8 647.9,363.5" stroke="#ffffff" stroke-width="0.5" fill="none" stroke-linecap="round" stroke-linejoin="round" opacity="0.55"/><polyline points="616.2,389.1 610.6,392.1" stroke="#ffffff" stroke-width="0.5" fill="none" stroke-linecap="round" stroke-linejoin="round" opacity="0.55"/><polyline points="639.5,367.8 644.5,371.3" stroke="#f0d2a0" stroke-width="0.5" fill="none" stroke-linecap="round" stroke-linejoin="round" opacity="0.55"/><polyline points="648.2,369.5 652.6,373.9" stroke="#c4c4c4" stroke-width="0.5" fill="none" stroke-linecap="round" stroke-linejoin="round" opacity="0.55"/><polyline points="640.7,361.9 643.0,365.2" stroke="#f0d2a0" stroke-width="0.5" fill="none" stroke-linecap="round" stroke-linejoin="round" opacity="0.55"/><polyline points="640.7,383.4 637.7,390.7" stroke="#ffffff" stroke-width="0.5" fill="none" stroke-linecap="round" stroke-linejoin="round" opacity="0.55"/><polyline points="640.8,381.1 637.0,385.6" stroke="#c4c4c4" stroke-width="0.5" fill="none" stroke-linecap="round" stroke-linejoin="round" opacity="0.55"/><polyline points="635.9,369.7 629.7,370.8" stroke="#f0d2a0" stroke-width="0.5" fill="none" stroke-linecap="round" stroke-linejoin="round" opacity="0.55"/><polyline points="666.9,370.9 671.6,376.7" stroke="#ffffff" stroke-width="0.5" fill="none" stroke-linecap="round" stroke-linejoin="round" opacity="0.55"/><polyline points="648.5,364.5 649.1,370.9" stroke="#f0d2a0" stroke-width="0.5" fill="none" stroke-linecap="round" stroke-linejoin="round" opacity="0.55"/><polyline points="655.3,376.5 659.7,382.2" stroke="#c4c4c4" stroke-width="0.5" fill="none" stroke-linecap="round" stroke-linejoin="round" opacity="0.55"/><polyline points="650.6,361.1 654.4,363.7" stroke="#c4c4c4" stroke-width="0.5" fill="none" stroke-linecap="round" stroke-linejoin="round" opacity="0.55"/><polyline points="626.3,380.3 627.6,386.0" stroke="#c4c4c4" stroke-width="0.5" fill="none" stroke-linecap="round" stroke-linejoin="round" opacity="0.55"/><polyline points="613.5,357.5 609.5,359.1" stroke="#f0d2a0" stroke-width="0.5" fill="none" stroke-linecap="round" stroke-linejoin="round" opacity="0.55"/><polyline points="664.1,364.2 657.9,367.0" stroke="#ffffff" stroke-width="0.5" fill="none" stroke-linecap="round" stroke-linejoin="round" opacity="0.55"/><polyline points="618.2,362.3 615.0,368.4" stroke="#c4c4c4" stroke-width="0.5" fill="none" stroke-linecap="round" stroke-linejoin="round" opacity="0.55"/><polyline points="623.8,354.5 629.6,359.2" stroke="#c4c4c4" stroke-width="0.5" fill="none" stroke-linecap="round" stroke-linejoin="round" opacity="0.55"/><polyline points="611.5,367.2 612.2,370.7" stroke="#ffffff" stroke-width="0.5" fill="none" stroke-linecap="round" stroke-linejoin="round" opacity="0.55"/><polyline points="641.0,370.1 636.7,371.5" stroke="#ffffff" stroke-width="0.5" fill="none" stroke-linecap="round" stroke-linejoin="round" opacity="0.55"/><polyline points="626.0,387.0 620.0,390.6" stroke="#f0d2a0" stroke-width="0.5" fill="none" stroke-linecap="round" stroke-linejoin="round" opacity="0.55"/><polyline points="625.1,358.8 617.9,360.5" stroke="#c4c4c4" stroke-width="0.5" fill="none" stroke-linecap="round" stroke-linejoin="round" opacity="0.55"/><polyline points="619.2,373.3 622.4,379.7" stroke="#c4c4c4" stroke-width="0.5" fill="none" stroke-linecap="round" stroke-linejoin="round" opacity="0.55"/><polyline points="646.6,360.9 642.9,365.8" stroke="#f0d2a0" stroke-width="0.5" fill="none" stroke-linecap="round" stroke-linejoin="round" opacity="0.55"/><polyline points="616.0,379.6 618.2,381.9" stroke="#f0d2a0" stroke-width="0.5" fill="none" stroke-linecap="round" stroke-linejoin="round" opacity="0.55"/><polyline points="613.5,373.0 617.3,373.8" stroke="#c4c4c4" stroke-width="0.5" fill="none" stroke-linecap="round" stroke-linejoin="round" opacity="0.55"/><polyline points="659.1,358.6 661.7,361.7" stroke="#f0d2a0" stroke-width="0.5" fill="none" stroke-linecap="round" stroke-linejoin="round" opacity="0.55"/><polyline points="625.6,368.3 632.0,372.8" stroke="#f0d2a0" stroke-width="0.5" fill="none" stroke-linecap="round" stroke-linejoin="round" opacity="0.55"/><polyline points="661.0,361.2 666.5,363.0" stroke="#f0d2a0" stroke-width="0.5" fill="none" stroke-linecap="round" stroke-linejoin="round" opacity="0.55"/><polyline points="653.5,381.0 659.5,381.6" stroke="#c4c4c4" stroke-width="0.5" fill="none" stroke-linecap="round" stroke-linejoin="round" opacity="0.55"/><polyline points="650.3,365.4 647.8,371.4" stroke="#ffffff" stroke-width="0.5" fill="none" stroke-linecap="round" stroke-linejoin="round" opacity="0.55"/><polyline points="623.0,376.5 619.0,382.3" stroke="#c4c4c4" stroke-width="0.5" fill="none" stroke-linecap="round" stroke-linejoin="round" opacity="0.55"/><polyline points="623.3,373.6 622.0,376.5" stroke="#c4c4c4" stroke-width="0.5" fill="none" stroke-linecap="round" stroke-linejoin="round" opacity="0.55"/><polyline points="659.0,378.4 663.6,380.7" stroke="#ffffff" stroke-width="0.5" fill="none" stroke-linecap="round" stroke-linejoin="round" opacity="0.55"/><polyline points="637.8,384.5 639.3,387.3" stroke="#f0d2a0" stroke-width="0.5" fill="none" stroke-linecap="round" stroke-linejoin="round" opacity="0.55"/><polyline points="632.1,375.4 635.0,381.9" stroke="#f0d2a0" stroke-width="0.5" fill="none" stroke-linecap="round" stroke-linejoin="round" opacity="0.55"/><polyline points="663.1,363.7 663.7,366.9" stroke="#c4c4c4" stroke-width="0.5" fill="none" stroke-linecap="round" stroke-linejoin="round" opacity="0.55"/><polyline points="651.3,361.6 648.0,363.3" stroke="#f0d2a0" stroke-width="0.5" fill="none" stroke-linecap="round" stroke-linejoin="round" opacity="0.55"/><polyline points="630.5,388.1 628.4,390.3" stroke="#ffffff" stroke-width="0.5" fill="none" stroke-linecap="round" stroke-linejoin="round" opacity="0.55"/><polyline points="635.9,375.0 643.1,376.1" stroke="#c4c4c4" stroke-width="0.5" fill="none" stroke-linecap="round" stroke-linejoin="round" opacity="0.55"/><polyline points="635.6,371.7 632.1,373.1" stroke="#c4c4c4" stroke-width="0.5" fill="none" stroke-linecap="round" stroke-linejoin="round" opacity="0.55"/><polyline points="636.2,387.5 640.6,387.7" stroke="#f0d2a0" stroke-width="0.5" fill="none" stroke-linecap="round" stroke-linejoin="round" opacity="0.55"/><polyline points="663.4,367.1 660.0,368.2" stroke="#c4c4c4" stroke-width="0.5" fill="none" stroke-linecap="round" stroke-linejoin="round" opacity="0.55"/><polyline points="624.0,358.5 629.1,358.2" stroke="#f0d2a0" stroke-width="0.5" fill="none" stroke-linecap="round" stroke-linejoin="round" opacity="0.55"/><polyline points="635.0,385.6 635.1,392.1" stroke="#c4c4c4" stroke-width="0.5" fill="none" stroke-linecap="round" stroke-linejoin="round" opacity="0.55"/><polyline points="652.0,376.8 648.6,378.1" stroke="#f0d2a0" stroke-width="0.5" fill="none" stroke-linecap="round" stroke-linejoin="round" opacity="0.55"/><polyline points="614.7,366.4 617.4,373.0" stroke="#ffffff" stroke-width="0.5" fill="none" stroke-linecap="round" stroke-linejoin="round" opacity="0.55"/><polyline points="650.8,369.9 652.8,372.9" stroke="#c4c4c4" stroke-width="0.5" fill="none" stroke-linecap="round" stroke-linejoin="round" opacity="0.55"/><polyline points="662.9,377.3 657.9,381.1" stroke="#f0d2a0" stroke-width="0.5" fill="none" stroke-linecap="round" stroke-linejoin="round" opacity="0.55"/><polyline points="640.6,358.6 638.8,363.4" stroke="#c4c4c4" stroke-width="0.5" fill="none" stroke-linecap="round" stroke-linejoin="round" opacity="0.55"/><polyline points="639.9,367.0 637.6,371.4" stroke="#c4c4c4" stroke-width="0.5" fill="none" stroke-linecap="round" stroke-linejoin="round" opacity="0.55"/><polyline points="652.1,413.3 657.0,416.7" stroke="#ffffff" stroke-width="0.5" fill="none" stroke-linecap="round" stroke-linejoin="round" opacity="0.55"/><polyline points="647.7,399.7 643.3,404.6" stroke="#ffffff" stroke-width="0.5" fill="none" stroke-linecap="round" stroke-linejoin="round" opacity="0.55"/><polyline points="661.4,406.0 658.4,411.6" stroke="#f0d2a0" stroke-width="0.5" fill="none" stroke-linecap="round" stroke-linejoin="round" opacity="0.55"/><polyline points="653.0,402.0 656.1,404.4" stroke="#f0d2a0" stroke-width="0.5" fill="none" stroke-linecap="round" stroke-linejoin="round" opacity="0.55"/><polyline points="661.5,430.9 663.6,435.6" stroke="#f0d2a0" stroke-width="0.5" fill="none" stroke-linecap="round" stroke-linejoin="round" opacity="0.55"/><polyline points="657.0,414.1 650.7,418.1" stroke="#ffffff" stroke-width="0.5" fill="none" stroke-linecap="round" stroke-linejoin="round" opacity="0.55"/><polyline points="652.6,406.5 660.0,408.4" stroke="#f0d2a0" stroke-width="0.5" fill="none" stroke-linecap="round" stroke-linejoin="round" opacity="0.55"/><polyline points="651.2,417.5 648.2,421.0" stroke="#c4c4c4" stroke-width="0.5" fill="none" stroke-linecap="round" stroke-linejoin="round" opacity="0.55"/><polyline points="658.1,415.6 665.9,416.4" stroke="#ffffff" stroke-width="0.5" fill="none" stroke-linecap="round" stroke-linejoin="round" opacity="0.55"/><polyline points="647.0,412.0 641.5,414.5" stroke="#ffffff" stroke-width="0.5" fill="none" stroke-linecap="round" stroke-linejoin="round" opacity="0.55"/><polyline points="653.1,408.9 655.5,412.2" stroke="#c4c4c4" stroke-width="0.5" fill="none" stroke-linecap="round" stroke-linejoin="round" opacity="0.55"/><polyline points="661.2,415.5 657.1,416.5" stroke="#f0d2a0" stroke-width="0.5" fill="none" stroke-linecap="round" stroke-linejoin="round" opacity="0.55"/><polyline points="659.1,403.3 657.2,407.2" stroke="#c4c4c4" stroke-width="0.5" fill="none" stroke-linecap="round" stroke-linejoin="round" opacity="0.55"/><polyline points="495.2,419.5 500.8,424.3" stroke="#c4c4c4" stroke-width="0.5" fill="none" stroke-linecap="round" stroke-linejoin="round" opacity="0.55"/><polyline points="491.7,420.9 493.7,425.4" stroke="#f0d2a0" stroke-width="0.5" fill="none" stroke-linecap="round" stroke-linejoin="round" opacity="0.55"/><polyline points="499.7,428.4 496.2,430.0" stroke="#c4c4c4" stroke-width="0.5" fill="none" stroke-linecap="round" stroke-linejoin="round" opacity="0.55"/><polyline points="491.2,411.9 492.6,415.4" stroke="#f0d2a0" stroke-width="0.5" fill="none" stroke-linecap="round" stroke-linejoin="round" opacity="0.55"/><polyline points="493.7,426.3 495.1,429.7" stroke="#c4c4c4" stroke-width="0.5" fill="none" stroke-linecap="round" stroke-linejoin="round" opacity="0.55"/><polyline points="484.0,431.3 488.6,433.6" stroke="#ffffff" stroke-width="0.5" fill="none" stroke-linecap="round" stroke-linejoin="round" opacity="0.55"/><polyline points="488.0,436.2 491.3,440.9" stroke="#c4c4c4" stroke-width="0.5" fill="none" stroke-linecap="round" stroke-linejoin="round" opacity="0.55"/><polyline points="499.7,434.6 505.7,436.6" stroke="#ffffff" stroke-width="0.5" fill="none" stroke-linecap="round" stroke-linejoin="round" opacity="0.55"/><polyline points="494.9,401.0 490.1,404.3" stroke="#f0d2a0" stroke-width="0.5" fill="none" stroke-linecap="round" stroke-linejoin="round" opacity="0.55"/><polyline points="487.7,421.5 491.3,425.9" stroke="#c4c4c4" stroke-width="0.5" fill="none" stroke-linecap="round" stroke-linejoin="round" opacity="0.55"/><polyline points="488.9,437.3 490.6,440.4" stroke="#c4c4c4" stroke-width="0.5" fill="none" stroke-linecap="round" stroke-linejoin="round" opacity="0.55"/><polyline points="497.5,432.8 490.0,434.8" stroke="#c4c4c4" stroke-width="0.5" fill="none" stroke-linecap="round" stroke-linejoin="round" opacity="0.55"/><polyline points="489.4,412.0 492.8,411.8" stroke="#f0d2a0" stroke-width="0.5" fill="none" stroke-linecap="round" stroke-linejoin="round" opacity="0.55"/><polyline points="490.6,408.2 494.4,411.7" stroke="#c4c4c4" stroke-width="0.5" fill="none" stroke-linecap="round" stroke-linejoin="round" opacity="0.55"/><polyline points="500.4,442.3 504.7,445.9" stroke="#ffffff" stroke-width="0.5" fill="none" stroke-linecap="round" stroke-linejoin="round" opacity="0.55"/><polyline points="494.5,401.3 490.0,403.0" stroke="#f0d2a0" stroke-width="0.5" fill="none" stroke-linecap="round" stroke-linejoin="round" opacity="0.55"/><polyline points="501.0,420.6 504.2,420.3" stroke="#c4c4c4" stroke-width="0.5" fill="none" stroke-linecap="round" stroke-linejoin="round" opacity="0.55"/><polyline points="499.9,401.1 501.2,404.2" stroke="#c4c4c4" stroke-width="0.5" fill="none" stroke-linecap="round" stroke-linejoin="round" opacity="0.55"/><polyline points="499.6,438.2 492.0,439.9" stroke="#f0d2a0" stroke-width="0.5" fill="none" stroke-linecap="round" stroke-linejoin="round" opacity="0.55"/><polyline points="496.3,423.9 498.0,428.0" stroke="#c4c4c4" stroke-width="0.5" fill="none" stroke-linecap="round" stroke-linejoin="round" opacity="0.55"/><polygon points="352.0,408.0 368.0,406.0 390.0,412.0 388.0,428.0 362.0,430.0 355.0,420.0" fill="#c9e6c0" opacity="0.65" stroke="#8cc48a" stroke-width="0.6"/><polygon points="676.0,362.0 684.0,366.0 692.0,400.0 690.0,432.0 684.0,432.0 680.0,400.0" fill="#c9e6c0" opacity="0.65" stroke="#8cc48a" stroke-width="0.6"/><polygon points="358.0,296.0 366.0,296.0 367.0,306.0 359.0,306.0" fill="#c9e6c0" opacity="0.65" stroke="#8cc48a" stroke-width="0.6"/><polygon points="425.0,319.0 436.0,318.0 437.0,330.0 426.0,330.0" fill="#c9e6c0" opacity="0.65" stroke="#8cc48a" stroke-width="0.6"/><polygon points="660.0,318.0 668.0,318.0 668.0,326.0 661.0,326.0" fill="#c9e6c0" opacity="0.65" stroke="#8cc48a" stroke-width="0.6"/><polygon points="334.0,268.0 343.0,268.0 344.0,276.0 335.0,277.0" fill="#c9e6c0" opacity="0.65" stroke="#8cc48a" stroke-width="0.6"/><polygon points="262.6,304.7 278.2,303.5 278.2,315.6 263.0,316.0" fill="#c4c2a4" opacity="0.95"/><polygon points="292.3,372.8 301.7,372.8 301.7,380.6 292.3,380.6" fill="#c4c2a4" opacity="0.95"/><polygon points="234.4,385.3 240.6,385.3 240.6,390.0 234.4,390.0" fill="#c4c2a4" opacity="0.95"/><polygon points="225.0,427.6 231.3,427.6 231.3,433.8 225.0,433.8" fill="#c4c2a4" opacity="0.95"/><polygon points="279.8,437.7 287.6,437.7 287.6,441.6 279.8,441.6" fill="#c4c2a4" opacity="0.95"/><polygon points="536.6,372.8 546.0,372.8 546.0,380.6 536.6,380.6" fill="#c4c2a4" opacity="0.95"/><polygon points="579.0,429.0 594.6,429.0 594.6,444.0 579.0,444.0" fill="#c4c2a4" opacity="0.95"/><polygon points="635.0,424.4 643.0,424.4 643.0,430.7 635.0,430.7" fill="#c4c2a4" opacity="0.95"/><polygon points="671.3,416.6 680.7,416.6 680.7,422.9 671.3,422.9" fill="#c4c2a4" opacity="0.95"/><polygon points="582.0,391.6 590.0,391.6 590.0,399.4 582.0,399.4" fill="#c4c2a4" opacity="0.95"/><polygon points="296.0,300.0 306.0,299.0 306.0,310.0 297.0,311.0" fill="#c4c2a4" opacity="0.95"/><polygon points="305.0,330.0 314.0,330.0 314.0,338.0 305.0,338.0" fill="#c4c2a4" opacity="0.95"/><ellipse cx="702.5" cy="408" rx="7" ry="5.5" fill="#aad3df"/><polyline points="220.3,315.6 254.7,320.3 276.6,329.7 319.0,334.4" stroke="#b9b9b9" stroke-width="0.8" fill="none" stroke-linecap="round" stroke-linejoin="round" opacity="0.9"/><polyline points="276.6,361.8 298.5,385.3 319.0,397.8" stroke="#b9b9b9" stroke-width="0.8" fill="none" stroke-linecap="round" stroke-linejoin="round" opacity="0.9"/><polyline points="319.0,354.0 325.3,401.0 331.5,444.0" stroke="#b9b9b9" stroke-width="0.8" fill="none" stroke-linecap="round" stroke-linejoin="round" opacity="0.9"/><polyline points="334.6,411.9 337.8,444.0" stroke="#b9b9b9" stroke-width="0.8" fill="none" stroke-linecap="round" stroke-linejoin="round" opacity="0.9"/><polyline points="406.6,360.3 449.0,366.5" stroke="#b9b9b9" stroke-width="0.8" fill="none" stroke-linecap="round" stroke-linejoin="round" opacity="0.9"/><polyline points="536.6,405.6 579.0,401.0" stroke="#b9b9b9" stroke-width="0.8" fill="none" stroke-linecap="round" stroke-linejoin="round" opacity="0.9"/><polyline points="514.7,401.0 546.0,426.0 579.0,444.0" stroke="#b9b9b9" stroke-width="0.8" fill="none" stroke-linecap="round" stroke-linejoin="round" opacity="0.9"/><polyline points="579.0,427.6 594.6,408.8" stroke="#b9b9b9" stroke-width="0.8" fill="none" stroke-linecap="round" stroke-linejoin="round" opacity="0.9"/><polyline points="654.1,375.9 671.3,410.3 657.2,432.2" stroke="#b9b9b9" stroke-width="0.8" fill="none" stroke-linecap="round" stroke-linejoin="round" opacity="0.9"/><polyline points="591.5,264.0 588.4,311.0 590.0,354.0" stroke="#b9b9b9" stroke-width="0.8" fill="none" stroke-linecap="round" stroke-linejoin="round" opacity="0.9"/><polyline points="680.7,306.3 688.5,311.0 697.9,329.7 704.2,354.0 706.0,400.0" stroke="#b9b9b9" stroke-width="0.8" fill="none" stroke-linecap="round" stroke-linejoin="round" opacity="0.9"/><polyline points="298.0,385.0 300.0,400.0 312.0,400.0" stroke="#b9b9b9" stroke-width="0.8" fill="none" stroke-linecap="round" stroke-linejoin="round" opacity="0.9"/><polyline points="200.0,380.0 230.0,360.0 250.0,345.0" stroke="#b9b9b9" stroke-width="0.8" fill="none" stroke-linecap="round" stroke-linejoin="round" opacity="0.9"/><polyline points="236.0,264.0 242.2,279.6 259.4,290.6 276.6,298.4 298.5,300.0 319.0,298.4 340.0,296.0" stroke="#f2c890" stroke-width="1.2" fill="none" stroke-linecap="round" stroke-linejoin="round" opacity="0.95"/><polyline points="189.0,326.6 198.4,336.0 195.3,354.0" stroke="#f2c890" stroke-width="1.2" fill="none" stroke-linecap="round" stroke-linejoin="round" opacity="0.95"/><polyline points="193.7,351.6 220.3,343.8 246.9,335.2 289.2,339.1 319.0,337.6" stroke="#f2c890" stroke-width="1.2" fill="none" stroke-linecap="round" stroke-linejoin="round" opacity="0.95"/><polyline points="289.2,315.6 268.8,354.0 261.0,385.3 254.7,444.0" stroke="#f2c890" stroke-width="1.2" fill="none" stroke-linecap="round" stroke-linejoin="round" opacity="0.95"/><polyline points="189.0,388.4 207.8,385.3 223.4,371.2 240.6,361.8 251.6,354.0 260.0,340.0 270.0,320.0" stroke="#f2c890" stroke-width="1.2" fill="none" stroke-linecap="round" stroke-linejoin="round" opacity="0.95"/><polyline points="369.1,264.0 381.6,276.5 394.1,290.6 406.6,311.0 422.3,329.7 428.5,354.0" stroke="#f2c890" stroke-width="1.2" fill="none" stroke-linecap="round" stroke-linejoin="round" opacity="0.95"/><polyline points="437.9,264.0 441.1,287.5 444.2,311.0 449.0,315.6" stroke="#f2c890" stroke-width="1.2" fill="none" stroke-linecap="round" stroke-linejoin="round" opacity="0.95"/><polyline points="319.0,334.4 350.3,332.9 381.6,342.2 428.5,346.9 449.0,345.4" stroke="#f2c890" stroke-width="1.2" fill="none" stroke-linecap="round" stroke-linejoin="round" opacity="0.95"/><polyline points="496.0,292.0 500.6,311.0 511.6,326.6 519.4,354.0" stroke="#f2c890" stroke-width="1.2" fill="none" stroke-linecap="round" stroke-linejoin="round" opacity="0.95"/><polyline points="519.0,264.0 527.0,290.0 530.0,312.0" stroke="#f2c890" stroke-width="1.2" fill="none" stroke-linecap="round" stroke-linejoin="round" opacity="0.95"/><polyline points="627.5,264.0 621.3,287.5 629.1,311.0 630.6,336.0 641.6,354.0 660.4,401.0 662.0,444.0" stroke="#f2c890" stroke-width="1.2" fill="none" stroke-linecap="round" stroke-linejoin="round" opacity="0.95"/><polyline points="420.7,393.1 423.8,416.6 417.6,444.0" stroke="#f2c890" stroke-width="1.2" fill="none" stroke-linecap="round" stroke-linejoin="round" opacity="0.95"/><polyline points="406.6,421.3 449.0,422.9" stroke="#f2c890" stroke-width="1.2" fill="none" stroke-linecap="round" stroke-linejoin="round" opacity="0.95"/><polyline points="449.0,419.7 472.5,416.6 524.1,407.2 579.0,391.6 610.0,388.0" stroke="#f2c890" stroke-width="1.2" fill="none" stroke-linecap="round" stroke-linejoin="round" opacity="0.95"/><polyline points="591.5,354.0 602.5,444.0" stroke="#f2c890" stroke-width="1.2" fill="none" stroke-linecap="round" stroke-linejoin="round" opacity="0.95"/><polyline points="662.0,397.8 688.5,391.6 711.0,390.0" stroke="#f2c890" stroke-width="1.2" fill="none" stroke-linecap="round" stroke-linejoin="round" opacity="0.95"/><polyline points="460.0,300.0 470.0,330.0 478.0,360.0" stroke="#f2c890" stroke-width="1.2" fill="none" stroke-linecap="round" stroke-linejoin="round" opacity="0.95"/><polyline points="550.0,330.0 565.0,360.0 570.0,390.0" stroke="#f2c890" stroke-width="1.2" fill="none" stroke-linecap="round" stroke-linejoin="round" opacity="0.95"/><polyline points="226.6,264.0 240.6,284.3 254.7,293.7 267.2,305.5 281.3,309.4 289.2,315.6 298.5,301.6 319.0,303.1 339.3,309.4 351.9,314.1 358.1,329.7 370.6,334.4 384.7,339.1 397.2,340.7 412.9,348.5 420.7,354.0 440.0,360.0 456.6,363.2 483.3,365.1 494.8,357.4 540.0,355.5" stroke="#7a7a7a" stroke-width="1.0" fill="none" stroke-linecap="round" stroke-linejoin="round" opacity="0.85"/><polyline points="189.0,419.0 251.6,416.6 319.0,411.9" stroke="#7a7a7a" stroke-width="1.0" fill="none" stroke-linecap="round" stroke-linejoin="round" opacity="0.85"/><polyline points="189.0,408.8 210.9,404.1 217.2,385.3 242.2,368.1 251.6,363.4 253.2,354.0" stroke="#7a7a7a" stroke-width="1.0" fill="none" stroke-linecap="round" stroke-linejoin="round" opacity="0.85"/><polyline points="333.1,383.7 342.5,388.4 361.3,377.5" stroke="#7a7a7a" stroke-width="1.0" fill="none" stroke-linecap="round" stroke-linejoin="round" opacity="0.85"/><polyline points="366.0,399.4 384.7,369.6 400.4,357.1" stroke="#7a7a7a" stroke-width="1.0" fill="none" stroke-linecap="round" stroke-linejoin="round" opacity="0.85"/><polyline points="486.6,264.0 488.1,281.2 502.2,287.5 516.3,295.3 542.9,309.4 533.5,334.4 527.2,354.0" stroke="#7a7a7a" stroke-width="1.0" fill="none" stroke-linecap="round" stroke-linejoin="round" opacity="0.85"/><polyline points="557.0,264.0 542.9,281.2 542.9,309.4" stroke="#7a7a7a" stroke-width="1.0" fill="none" stroke-linecap="round" stroke-linejoin="round" opacity="0.85"/><polyline points="449.0,295.3 480.3,284.3 488.1,281.2" stroke="#7a7a7a" stroke-width="1.0" fill="none" stroke-linecap="round" stroke-linejoin="round" opacity="0.85"/><polyline points="638.5,264.0 647.9,276.5 668.2,293.7 669.8,315.6 672.9,354.0" stroke="#7a7a7a" stroke-width="1.0" fill="none" stroke-linecap="round" stroke-linejoin="round" opacity="0.85"/><polyline points="668.2,293.7 680.7,282.8 691.7,264.0" stroke="#7a7a7a" stroke-width="1.0" fill="none" stroke-linecap="round" stroke-linejoin="round" opacity="0.85"/><polyline points="514.7,401.0 500.6,408.8 494.4,429.1 488.1,444.0" stroke="#7a7a7a" stroke-width="1.0" fill="none" stroke-linecap="round" stroke-linejoin="round" opacity="0.85"/><polyline points="591.5,354.0 610.3,365.0 626.0,385.3 633.8,386.9 654.1,375.9 666.6,363.4 672.9,354.0" stroke="#7a7a7a" stroke-width="1.0" fill="none" stroke-linecap="round" stroke-linejoin="round" opacity="0.85"/><polyline points="579.0,413.5 594.6,404.1 610.3,394.7 626.0,385.3" stroke="#7a7a7a" stroke-width="1.0" fill="none" stroke-linecap="round" stroke-linejoin="round" opacity="0.85"/><polyline points="650.0,264.0 660.0,275.0 675.0,280.0 690.0,270.0 700.0,264.0" stroke="#7a7a7a" stroke-width="1.0" fill="none" stroke-linecap="round" stroke-linejoin="round" opacity="0.85"/><polyline points="296.0,299.6 285.5,315.0 272.8,335.0 262.6,354.0 250.0,370.0" stroke="#7a7a7a" stroke-width="1.0" fill="none" stroke-linecap="round" stroke-linejoin="round" opacity="0.85"/><polyline points="700.0,340.0 711.0,345.0" stroke="#7a7a7a" stroke-width="1.0" fill="none" stroke-linecap="round" stroke-linejoin="round" opacity="0.85"/><polygon points="507.0,386.0 520.0,385.0 521.0,401.0 508.0,401.0" fill="#d2d0cf" opacity="1" stroke="#8c8c8c" stroke-width="0.6"/><polyline points="638.0,264.0 650.0,278.0 668.0,292.0 676.0,286.0 660.0,272.0 650.0,264.0" stroke="#7a7a7a" stroke-width="0.9" fill="none" stroke-linecap="round" stroke-linejoin="round" opacity="0.85"/><polyline points="652.0,264.0 668.0,280.0 676.0,286.0 684.0,280.0 668.0,266.0 664.0,264.0" stroke="#7a7a7a" stroke-width="0.9" fill="none" stroke-linecap="round" stroke-linejoin="round" opacity="0.85"/><polyline points="690.0,264.0 685.0,275.0 680.0,284.0" stroke="#7a7a7a" stroke-width="0.9" fill="none" stroke-linecap="round" stroke-linejoin="round" opacity="0.85"/><polyline points="700.0,264.0 712.0,276.0" stroke="#7a7a7a" stroke-width="0.9" fill="none" stroke-linecap="round" stroke-linejoin="round" opacity="0.85"/><polyline points="400.0,320.0 420.0,330.0 440.0,335.0 460.0,345.0 480.0,352.0" stroke="#f2c890" stroke-width="1.0" fill="none" stroke-linecap="round" stroke-linejoin="round" opacity="0.9"/><polyline points="410.0,300.0 430.0,315.0 445.0,330.0" stroke="#f2c890" stroke-width="1.0" fill="none" stroke-linecap="round" stroke-linejoin="round" opacity="0.9"/><polyline points="450.0,300.0 455.0,320.0 460.0,340.0" stroke="#f2c890" stroke-width="1.0" fill="none" stroke-linecap="round" stroke-linejoin="round" opacity="0.9"/><polyline points="420.0,365.0 440.0,375.0 460.0,380.0" stroke="#f2c890" stroke-width="1.0" fill="none" stroke-linecap="round" stroke-linejoin="round" opacity="0.9"/><polyline points="430.0,390.0 445.0,405.0 455.0,420.0 460.0,444.0" stroke="#f2c890" stroke-width="1.0" fill="none" stroke-linecap="round" stroke-linejoin="round" opacity="0.9"/><polyline points="500.0,300.0 520.0,310.0 540.0,325.0" stroke="#f2c890" stroke-width="1.0" fill="none" stroke-linecap="round" stroke-linejoin="round" opacity="0.9"/><polyline points="505.0,345.0 520.0,360.0 530.0,375.0" stroke="#f2c890" stroke-width="1.0" fill="none" stroke-linecap="round" stroke-linejoin="round" opacity="0.9"/><polyline points="540.0,345.0 560.0,350.0 580.0,360.0 600.0,365.0" stroke="#f2c890" stroke-width="1.0" fill="none" stroke-linecap="round" stroke-linejoin="round" opacity="0.9"/><polyline points="360.0,350.0 380.0,355.0 400.0,360.0" stroke="#f2c890" stroke-width="1.0" fill="none" stroke-linecap="round" stroke-linejoin="round" opacity="0.9"/><polyline points="520.0,400.0 540.0,395.0 560.0,390.0" stroke="#f2c890" stroke-width="1.0" fill="none" stroke-linecap="round" stroke-linejoin="round" opacity="0.9"/><polyline points="430.0,270.0 445.0,285.0 460.0,290.0" stroke="#f2c890" stroke-width="1.0" fill="none" stroke-linecap="round" stroke-linejoin="round" opacity="0.9"/><polyline points="500.0,270.0 510.0,285.0" stroke="#f2c890" stroke-width="1.0" fill="none" stroke-linecap="round" stroke-linejoin="round" opacity="0.9"/><polyline points="600.0,400.0 620.0,410.0 640.0,415.0" stroke="#f2c890" stroke-width="1.0" fill="none" stroke-linecap="round" stroke-linejoin="round" opacity="0.9"/><polyline points="340.0,270.0 355.0,280.0 370.0,290.0" stroke="#f2c890" stroke-width="1.0" fill="none" stroke-linecap="round" stroke-linejoin="round" opacity="0.9"/><polyline points="300.0,350.0 320.0,360.0 330.0,375.0" stroke="#f2c890" stroke-width="1.0" fill="none" stroke-linecap="round" stroke-linejoin="round" opacity="0.9"/><polyline points="189.0,300.0 210.0,296.0 230.0,292.0" stroke="#f2c890" stroke-width="0.9" fill="none" stroke-linecap="round" stroke-linejoin="round" opacity="0.85"/><polyline points="200.0,440.0 230.0,420.0 250.0,400.0" stroke="#f2c890" stroke-width="0.9" fill="none" stroke-linecap="round" stroke-linejoin="round" opacity="0.85"/><polyline points="280.0,420.0 300.0,405.0 320.0,400.0" stroke="#f2c890" stroke-width="0.9" fill="none" stroke-linecap="round" stroke-linejoin="round" opacity="0.85"/><polyline points="290.0,264.0 300.0,280.0 305.0,300.0" stroke="#f2c890" stroke-width="0.9" fill="none" stroke-linecap="round" stroke-linejoin="round" opacity="0.85"/><polyline points="330.0,360.0 345.0,375.0 350.0,395.0" stroke="#f2c890" stroke-width="0.9" fill="none" stroke-linecap="round" stroke-linejoin="round" opacity="0.85"/><polyline points="560.0,420.0 580.0,415.0 600.0,410.0" stroke="#f2c890" stroke-width="0.9" fill="none" stroke-linecap="round" stroke-linejoin="round" opacity="0.85"/><polyline points="620.0,430.0 640.0,420.0 660.0,415.0" stroke="#f2c890" stroke-width="0.9" fill="none" stroke-linecap="round" stroke-linejoin="round" opacity="0.85"/><polyline points="600.0,270.0 612.0,290.0 620.0,300.0" stroke="#f2c890" stroke-width="0.9" fill="none" stroke-linecap="round" stroke-linejoin="round" opacity="0.85"/><polyline points="540.0,280.0 555.0,295.0" stroke="#f2c890" stroke-width="0.9" fill="none" stroke-linecap="round" stroke-linejoin="round" opacity="0.85"/><polyline points="690.0,300.0 700.0,320.0 711.0,330.0" stroke="#f2c890" stroke-width="0.9" fill="none" stroke-linecap="round" stroke-linejoin="round" opacity="0.85"/><polyline points="640.0,350.0 660.0,360.0 680.0,370.0" stroke="#f2c890" stroke-width="0.9" fill="none" stroke-linecap="round" stroke-linejoin="round" opacity="0.85"/><polyline points="470.0,420.0 475.0,444.0" stroke="#f2c890" stroke-width="0.9" fill="none" stroke-linecap="round" stroke-linejoin="round" opacity="0.85"/><polyline points="430.0,420.0 445.0,430.0 460.0,444.0" stroke="#f2c890" stroke-width="0.9" fill="none" stroke-linecap="round" stroke-linejoin="round" opacity="0.85"/><polyline points="200.0,360.0 215.0,350.0 230.0,345.0" stroke="#f2c890" stroke-width="0.9" fill="none" stroke-linecap="round" stroke-linejoin="round" opacity="0.85"/><polyline points="360.0,420.0 365.0,444.0" stroke="#f2c890" stroke-width="0.9" fill="none" stroke-linecap="round" stroke-linejoin="round" opacity="0.85"/><polyline points="189.0,326.6 209.3,315.6 228.1,300.0 242.2,281.2 256.3,276.5 276.6,264.0" stroke="#ee9c8a" stroke-width="1.3" fill="none" stroke-linecap="round" stroke-linejoin="round" opacity="1"/><polyline points="228.1,444.0 267.2,429.1 319.0,411.9 350.3,407.2 362.8,411.9 387.9,410.3" stroke="#ee9c8a" stroke-width="1.3" fill="none" stroke-linecap="round" stroke-linejoin="round" opacity="1"/><polyline points="680.7,385.3 711.0,405.6" stroke="#ee9c8a" stroke-width="1.3" fill="none" stroke-linecap="round" stroke-linejoin="round" opacity="1"/><polyline points="427.0,264.0 412.9,276.5 406.6,295.3 392.6,314.1 387.9,323.5 395.7,334.4 401.9,354.0 406.6,377.5 397.2,394.7 395.7,416.6 381.6,444.0" stroke="#e2809a" stroke-width="1.8" fill="none" stroke-linecap="round" stroke-linejoin="round" opacity="1"/><polyline points="444.2,354.0 449.0,334.4 455.3,334.4 456.8,323.5 463.1,311.0 469.3,287.5 474.0,264.0" stroke="#e2809a" stroke-width="1.8" fill="none" stroke-linecap="round" stroke-linejoin="round" opacity="1"/><polyline points="477.2,264.0 486.6,284.3 495.9,304.7 494.4,323.5 495.9,354.0 492.9,360.0 489.1,380.4 477.2,385.3 483.4,413.5 483.4,424.4 477.2,444.0" stroke="#e2809a" stroke-width="1.8" fill="none" stroke-linecap="round" stroke-linejoin="round" opacity="1"/><polyline points="483.4,340.7 508.5,329.7 530.4,311.0 542.9,311.0 552.3,295.3 566.4,279.6 572.6,264.0" stroke="#e2809a" stroke-width="1.8" fill="none" stroke-linecap="round" stroke-linejoin="round" opacity="1"/><polyline points="494.4,334.4 508.5,329.7 522.6,332.9 533.5,339.1 546.0,336.0 579.0,339.1 594.6,337.6 613.4,330.5 630.6,332.1 646.3,326.6 665.1,331.3 691.7,330.5 711.0,317.2" stroke="#e2809a" stroke-width="1.8" fill="none" stroke-linecap="round" stroke-linejoin="round" opacity="1"/><polyline points="539.8,318.8 546.0,336.0" stroke="#e2809a" stroke-width="1.8" fill="none" stroke-linecap="round" stroke-linejoin="round" opacity="1"/><polyline points="406.6,385.3 419.2,385.3 428.5,379.0 439.5,363.4 449.0,354.0" stroke="#e2809a" stroke-width="1.8" fill="none" stroke-linecap="round" stroke-linejoin="round" opacity="1"/><polyline points="419.2,385.3 434.8,386.9 449.0,391.6 449.0,393.1 477.2,385.3 489.7,377.5 496.0,354.0" stroke="#e2809a" stroke-width="1.8" fill="none" stroke-linecap="round" stroke-linejoin="round" opacity="1"/><polyline points="458.4,369.6 477.2,374.3 489.7,377.5 502.2,379.0 514.7,382.2 521.0,384.5 579.0,381.4 610.3,388.4 622.8,394.7 651.0,400.2 662.0,397.8" stroke="#e2809a" stroke-width="1.8" fill="none" stroke-linecap="round" stroke-linejoin="round" opacity="1"/><polyline points="502.2,379.0 505.3,401.0 524.1,419.7 533.5,427.6 546.0,444.0" stroke="#e2809a" stroke-width="1.8" fill="none" stroke-linecap="round" stroke-linejoin="round" opacity="1"/><polyline points="417.6,385.3 419.2,399.4" stroke="#e2809a" stroke-width="1.8" fill="none" stroke-linecap="round" stroke-linejoin="round" opacity="1"/><polyline points="435.5,363.2 439.3,347.8 443.2,338.3 454.6,328.7" stroke="#e2809a" stroke-width="1.8" fill="none" stroke-linecap="round" stroke-linejoin="round" opacity="1"/><polyline points="319.0,264.0 341.0,270.0 342.5,264.0" stroke="#e2809a" stroke-width="1.8" fill="none" stroke-linecap="round" stroke-linejoin="round" opacity="1"/><rect x="388.6" y="397.8" width="19" height="19.6" rx="1.5" fill="#f3c9cf" stroke="#dc97a3" stroke-width="0.7"/><text x="398.1" y="402.9" font-size="6.6" fill="#5c4a4d" text-anchor="middle" dominant-baseline="central">N1</text><text x="398.1" y="412.7" font-size="6.6" fill="#5c4a4d" text-anchor="middle" dominant-baseline="central">N12</text><rect x="474" y="422.9" width="18" height="10.5" rx="1.5" fill="#f3c9cf" stroke="#dc97a3" stroke-width="0.7"/><text x="483.0" y="428.34999999999997" font-size="6.6" fill="#5c4a4d" text-anchor="middle" dominant-baseline="central">R59</text><rect x="526.5" y="422.9" width="14" height="10.5" rx="1.5" fill="#f3c9cf" stroke="#dc97a3" stroke-width="0.7"/><text x="533.5" y="428.34999999999997" font-size="6.6" fill="#5c4a4d" text-anchor="middle" dominant-baseline="central">N3</text><g transform="translate(552.3,314.9) rotate(90)"><path d="M0 -4 L0.8 -1 L4 1 L4 2 L0.8 1 L0.6 3 L1.8 4 L1.8 4.6 L0 4 L-1.8 4.6 L-1.8 4 L-0.6 3 L-0.8 1 L-4 2 L-4 1 L-0.8 -1 Z" fill="#7d6cc6"/></g><g transform="translate(504.6,375.9) rotate(90)"><path d="M0 -4 L0.8 -1 L4 1 L4 2 L0.8 1 L0.6 3 L1.8 4 L1.8 4.6 L0 4 L-1.8 4.6 L-1.8 4 L-0.6 3 L-0.8 1 L-4 2 L-4 1 L-0.8 -1 Z" fill="#7d6cc6"/></g><text x="310" y="292.4" font-size="9.3" fill="#454545" text-anchor="middle" dominant-baseline="central" stroke="#f6f4f0" stroke-width="1.5" paint-order="stroke" stroke-linejoin="round">Krugersdorp</text><text x="310" y="292.4" font-size="9.3" fill="#454545" text-anchor="middle" dominant-baseline="central" stroke="#454545" stroke-width="0.12">Krugersdorp</text><text x="427" y="289.8" font-size="9.3" fill="#454545" text-anchor="middle" dominant-baseline="central" stroke="#f6f4f0" stroke-width="1.5" paint-order="stroke" stroke-linejoin="round">Randburg</text><text x="427" y="289.8" font-size="9.3" fill="#454545" text-anchor="middle" dominant-baseline="central" stroke="#454545" stroke-width="0.12">Randburg</text><text x="366.7" y="327.4" font-size="9.7" fill="#454545" text-anchor="middle" dominant-baseline="central" stroke="#f6f4f0" stroke-width="1.5" paint-order="stroke" stroke-linejoin="round">Roodepoort</text><text x="366.7" y="327.4" font-size="9.7" fill="#454545" text-anchor="middle" dominant-baseline="central" stroke="#454545" stroke-width="0.12">Roodepoort</text><text x="267.4" y="336.8" font-size="7.6" fill="#454545" text-anchor="middle" dominant-baseline="central" stroke="#f6f4f0" stroke-width="1.5" paint-order="stroke" stroke-linejoin="round">Randfontein</text><text x="267.4" y="336.8" font-size="7.6" fill="#454545" text-anchor="middle" dominant-baseline="central" stroke="#454545" stroke-width="0.12">Randfontein</text><text x="324" y="346.4" font-size="7.3" fill="#454545" text-anchor="middle" dominant-baseline="central" stroke="#f6f4f0" stroke-width="1.5" paint-order="stroke" stroke-linejoin="round">Tshepisong</text><text x="324" y="346.4" font-size="7.3" fill="#454545" text-anchor="middle" dominant-baseline="central" stroke="#454545" stroke-width="0.12">Tshepisong</text><text x="446" y="318.8" font-size="7.4" fill="#454545" text-anchor="middle" dominant-baseline="central" stroke="#f6f4f0" stroke-width="1.5" paint-order="stroke" stroke-linejoin="round">Rosebank</text><text x="446" y="318.8" font-size="7.4" fill="#454545" text-anchor="middle" dominant-baseline="central" stroke="#454545" stroke-width="0.12">Rosebank</text><text x="369.4" y="365.7" font-size="10.2" fill="#454545" text-anchor="middle" dominant-baseline="central" stroke="#f6f4f0" stroke-width="1.5" paint-order="stroke" stroke-linejoin="round">Soweto</text><text x="369.4" y="365.7" font-size="10.2" fill="#454545" text-anchor="middle" dominant-baseline="central" stroke="#454545" stroke-width="0.12">Soweto</text><text x="451.5" y="356.5" font-size="10" fill="#454545" text-anchor="middle" dominant-baseline="central" stroke="#f6f4f0" stroke-width="1.5" paint-order="stroke" stroke-linejoin="round">Johannesburg</text><text x="451.5" y="356.5" font-size="10" fill="#454545" text-anchor="middle" dominant-baseline="central" stroke="#454545" stroke-width="0.12">Johannesburg</text><text x="335.4" y="421" font-size="7.4" fill="#454545" text-anchor="middle" dominant-baseline="central" stroke="#f6f4f0" stroke-width="1.5" paint-order="stroke" stroke-linejoin="round">Lenasia</text><text x="335.4" y="421" font-size="7.4" fill="#454545" text-anchor="middle" dominant-baseline="central" stroke="#454545" stroke-width="0.12">Lenasia</text><text x="546.8" y="287.5" font-size="7.4" fill="#454545" text-anchor="middle" dominant-baseline="central" stroke="#f6f4f0" stroke-width="1.5" paint-order="stroke" stroke-linejoin="round">Kempton</text><text x="546.8" y="287.5" font-size="7.4" fill="#454545" text-anchor="middle" dominant-baseline="central" stroke="#454545" stroke-width="0.12">Kempton</text><text x="547.2" y="296.6" font-size="7.4" fill="#454545" text-anchor="middle" dominant-baseline="central" stroke="#f6f4f0" stroke-width="1.5" paint-order="stroke" stroke-linejoin="round">Park</text><text x="547.2" y="296.6" font-size="7.4" fill="#454545" text-anchor="middle" dominant-baseline="central" stroke="#454545" stroke-width="0.12">Park</text><text x="586" y="346.4" font-size="7.4" fill="#454545" text-anchor="middle" dominant-baseline="central" stroke="#f6f4f0" stroke-width="1.5" paint-order="stroke" stroke-linejoin="round">Benoni</text><text x="586" y="346.4" font-size="7.4" fill="#454545" text-anchor="middle" dominant-baseline="central" stroke="#454545" stroke-width="0.12">Benoni</text><text x="561.6" y="359.9" font-size="7.6" fill="#454545" text-anchor="middle" dominant-baseline="central" stroke="#f6f4f0" stroke-width="1.5" paint-order="stroke" stroke-linejoin="round">Boksburg</text><text x="561.6" y="359.9" font-size="7.6" fill="#454545" text-anchor="middle" dominant-baseline="central" stroke="#454545" stroke-width="0.12">Boksburg</text><text x="519.4" y="369.2" font-size="8" fill="#454545" text-anchor="middle" dominant-baseline="central" stroke="#f6f4f0" stroke-width="1.5" paint-order="stroke" stroke-linejoin="round">Germiston</text><text x="519.4" y="369.2" font-size="8" fill="#454545" text-anchor="middle" dominant-baseline="central" stroke="#454545" stroke-width="0.12">Germiston</text><text x="488.9" y="391.1" font-size="7.4" fill="#454545" text-anchor="middle" dominant-baseline="central" stroke="#f6f4f0" stroke-width="1.5" paint-order="stroke" stroke-linejoin="round">Alberton</text><text x="488.9" y="391.1" font-size="7.4" fill="#454545" text-anchor="middle" dominant-baseline="central" stroke="#454545" stroke-width="0.12">Alberton</text><text x="617.7" y="372.8" font-size="7.5" fill="#454545" text-anchor="middle" dominant-baseline="central" stroke="#f6f4f0" stroke-width="1.5" paint-order="stroke" stroke-linejoin="round">Brakpan</text><text x="617.7" y="372.8" font-size="7.5" fill="#454545" text-anchor="middle" dominant-baseline="central" stroke="#454545" stroke-width="0.12">Brakpan</text><text x="652.2" y="384" font-size="7.5" fill="#454545" text-anchor="middle" dominant-baseline="central" stroke="#f6f4f0" stroke-width="1.5" paint-order="stroke" stroke-linejoin="round">Springs</text><text x="652.2" y="384" font-size="7.5" fill="#454545" text-anchor="middle" dominant-baseline="central" stroke="#454545" stroke-width="0.12">Springs</text></svg><div style="position:absolute;left:7.3px;top:7.2px;width:23.5px;height:44px;background:#fbfbfa;border:1.6px solid #bfbdb8;border-radius:3px"></div><div style="position:absolute;left:9px;top:28.8px;width:20px;height:1px;background:#dcdcdc"></div><div style="position:absolute;left:15px;top:19.4px;width:9.5px;height:2.2px;background:#1e1e1e"></div><div style="position:absolute;left:18.65px;top:15.7px;width:2.2px;height:9.5px;background:#1e1e1e"></div><div style="position:absolute;left:15.6px;top:40.8px;width:8.8px;height:2.4px;background:#1e1e1e"></div><div style="position:absolute;left:403px;top:168px;width:119px;height:12px;background:rgba(255,255,255,0.82)"></div><svg style="position:absolute;left:405.6px;top:171.4px" width="8.7" height="5.5" viewBox="0 0 12 8"><rect width="12" height="4" fill="#4C7BE1"/><rect y="4" width="12" height="4" fill="#FFD500"/></svg><div style="position:absolute;left:416.6px;top:168.5px;line-height:12px;font-size:8.5px;color:#3d7396;white-space:nowrap">Leaflet<span style="color:#555;padding:0 2.2px 0 2.8px">|</span><span style="color:#555">©</span> OpenStreetMap</div></div>

<div class="card" style="left:742px;top:211px;width:265px;height:246px"></div>
<svg class="i" style="left:752.5px;top:222.5px;color:#e5e5e5" width="12" height="12" viewBox="0 0 24 24"><path d="m21.73 18-8-14a2 2 0 0 0-3.48 0l-8 14A2 2 0 0 0 4 21h16a2 2 0 0 0 1.73-3"/><path d="M12 9v4"/><path d="M12 17h.01"/></svg>
<div class="a" style="left:771px;top:218.7px;font-size:10.2px;color:#fafafa;-webkit-text-stroke:0.45px #fafafa">Needs Attention</div>
<div class="a" style="left:753px;top:235.5px;font-size:10.4px;color:#a1a1a1;-webkit-text-stroke:0.2px #a1a1a1">Open exceptions requiring action</div>

<div style="position:absolute;left:753px;top:264px;width:241px;height:55.5px;border:1px solid #262626;border-radius:6px;background:#141414"></div>
<div style="position:absolute;left:760.5px;top:271.3px;width:39.5px;height:15.6px;border-radius:6px;background:#301919"></div>
<div class="a" style="left:766px;top:269px;font-size:9px;color:#e5534f;-webkit-text-stroke:0.3px #e5534f">Offline</div>
<div style="position:absolute;left:959.5px;top:271.3px;width:28px;height:15.6px;border-radius:6px;background:#2f2511"></div>
<div class="a" style="left:964.5px;top:269px;font-size:9px;color:#eea31a;-webkit-text-stroke:0.3px #eea31a">high</div>
<div class="a" style="left:760px;top:285.3px;font-size:9px;color:#a8a8a8;-webkit-text-stroke:0.15px #a8a8a8">Vehicle V002 has not reported location for 20 minutes</div>
<div class="a" style="left:760px;top:298px;font-size:8.8px;color:#ececec;-webkit-text-stroke:0.35px #ececec">— · 23h ago</div>

<div style="position:absolute;left:753px;top:326.5px;width:241px;height:53.5px;border:1px solid #262626;border-radius:6px;background:#141414"></div>
<div style="position:absolute;left:760.5px;top:333.3px;width:52px;height:14.5px;border-radius:6px;background:#301919"></div>
<div class="a" style="left:766px;top:330.5px;font-size:9px;color:#e5534f;-webkit-text-stroke:0.3px #e5534f">Long Stop</div>
<div style="position:absolute;left:944px;top:333.3px;width:44px;height:14.5px;border-radius:6px;background:#262626"></div>
<div class="a" style="left:950px;top:330.5px;font-size:9px;color:#f0f0f0;-webkit-text-stroke:0.35px #f0f0f0">medium</div>
<div class="a" style="left:760px;top:346.1px;font-size:9px;color:#a8a8a8;-webkit-text-stroke:0.15px #a8a8a8">Vehicle stopped for 45 minutes at unknown location</div>
<div class="a" style="left:760px;top:359.4px;font-size:8.5px;color:#ececec;letter-spacing:-0.15px;-webkit-text-stroke:0.35px #ececec">TRP-001 · 1d ago</div>

<div style="position:absolute;left:753.5px;top:390.5px;width:241px;height:17px;border:1px solid #262626;border-radius:6px;background:#1f1f1f"></div>
<div class="a" style="left:829px;top:389px;font-size:9.1px;color:#f0f0f0;-webkit-text-stroke:0.35px #f0f0f0">View All Exceptions</div>
<svg class="i" style="left:910.5px;top:395.5px;color:#e5e5e5" width="8" height="8" viewBox="0 0 24 24" stroke-width="3.2"><path d="M5 12h14"/><path d="m12 5 7 7-7 7"/></svg>

<div class="card" style="left:176px;top:474px;width:548px;height:140px"></div>
<div class="a" style="left:189px;top:482px;font-size:10px;color:#fafafa;-webkit-text-stroke:0.45px #fafafa">Active Trips</div>
<div class="a" style="left:189px;top:493.6px;font-size:10.5px;color:#a1a1a1;-webkit-text-stroke:0.2px #a1a1a1">Trips currently in progress</div>
<div class="a" style="left:663px;top:488.4px;font-size:9.5px;color:#f0f0f0;-webkit-text-stroke:0.35px #f0f0f0">All trips</div>
<svg class="i" style="left:697px;top:494.5px;color:#e5e5e5" width="8" height="8" viewBox="0 0 24 24" stroke-width="3.2"><path d="M5 12h14"/><path d="m12 5 7 7-7 7"/></svg>
<div class="a" style="left:189px;top:518.6px;font-size:10.3px;color:#f0f0f0;-webkit-text-stroke:0.35px #f0f0f0">Trip</div>
<div class="a" style="left:238px;top:518.6px;font-size:10.3px;color:#f0f0f0;-webkit-text-stroke:0.35px #f0f0f0">Customer</div>
<div class="a" style="left:326px;top:518.6px;font-size:10.3px;color:#f0f0f0;-webkit-text-stroke:0.35px #f0f0f0">Route</div>
<div class="a" style="left:489.5px;top:518.6px;font-size:10.5px;color:#f0f0f0;-webkit-text-stroke:0.35px #f0f0f0">Driver</div>
<div class="a" style="left:581px;top:518.6px;font-size:10.6px;color:#f0f0f0;-webkit-text-stroke:0.35px #f0f0f0">Status</div>
<div class="a" style="left:600px;width:112px;text-align:right;top:518.6px;font-size:10.5px;color:#f0f0f0;-webkit-text-stroke:0.35px #f0f0f0">Budget</div>
<div style="position:absolute;left:189px;top:541.5px;width:522px;height:1px;background:#262626"></div>
<div class="a" style="left:189px;top:550.2px;font-size:9.5px;color:#dde44a;-webkit-text-stroke:0.35px #dde44a">TRP-001</div>
<div class="a" style="left:238px;top:550.2px;font-size:10.4px;color:#a1a1a1;-webkit-text-stroke:0.2px #a1a1a1">Acme Logistics</div>
<div class="a" style="left:326px;top:550.2px;font-size:8.7px;color:#a8a8a8;-webkit-text-stroke:0.2px #a8a8a8">Germiston Depot → Sandton Site</div>
<div class="a" style="left:489.5px;top:550px;font-size:10.4px;color:#ececec;-webkit-text-stroke:0.3px #ececec">Sipho Mthembu</div>
<div style="position:absolute;left:581px;top:552.5px;width:37px;height:15px;border-radius:6px;background:#eef608"></div>
<div class="a" style="left:587.4px;top:550px;font-size:9px;color:#141400;-webkit-text-stroke:0.3px #141400">active</div>
<div class="a" style="left:600px;width:112px;text-align:right;top:543.3px;font-size:9.75px;color:#f0f0f0;-webkit-text-stroke:0.35px #f0f0f0">R970 / R3,500</div>
<div style="position:absolute;left:644px;top:564.2px;width:46px;height:4px;border-radius:2px;background:#2a2a2a"></div>
<div style="position:absolute;left:644px;top:564.2px;width:13px;height:4px;border-radius:2px;background:#eef608"></div>
<div class="a" style="left:600px;width:112px;text-align:right;top:556px;font-size:9.5px;color:#8f8f8f">28%</div>

<div class="card" style="left:742px;top:474px;width:265px;height:140px"></div>
<div class="a" style="left:753px;top:481.2px;font-size:10.3px;color:#fafafa;-webkit-text-stroke:0.45px #fafafa">Recent Activity</div>
<div class="a" style="left:753px;top:497.9px;font-size:10.5px;color:#a1a1a1;-webkit-text-stroke:0.2px #a1a1a1">Latest operational events</div>
<div style="position:absolute;left:753.5px;top:527.5px;width:13px;height:13px;border-radius:50%;background:#221515"></div>
<svg class="i" style="left:754.5px;top:528.5px;color:#d9534f" width="11" height="11" viewBox="0 0 24 24" stroke-width="2.4"><path d="m21.73 18-8-14a2 2 0 0 0-3.48 0l-8 14A2 2 0 0 0 4 21h16a2 2 0 0 0 1.73-3"/><path d="M12 9v4"/><path d="M12 17h.01"/></svg>
<div class="a" style="left:773.7px;top:522.7px;font-size:10.5px;color:#f0f0f0;-webkit-text-stroke:0.25px #f0f0f0">Vehicle V002 has not reported location for 20</div>
<div class="a" style="left:773.7px;top:536.8px;font-size:10.5px;color:#f0f0f0;-webkit-text-stroke:0.25px #f0f0f0">minutes</div>
<div class="a" style="left:773.7px;top:549px;font-size:9px;color:#a0a0a0;-webkit-text-stroke:0.2px #a0a0a0">23h ago</div>

</body></html>
